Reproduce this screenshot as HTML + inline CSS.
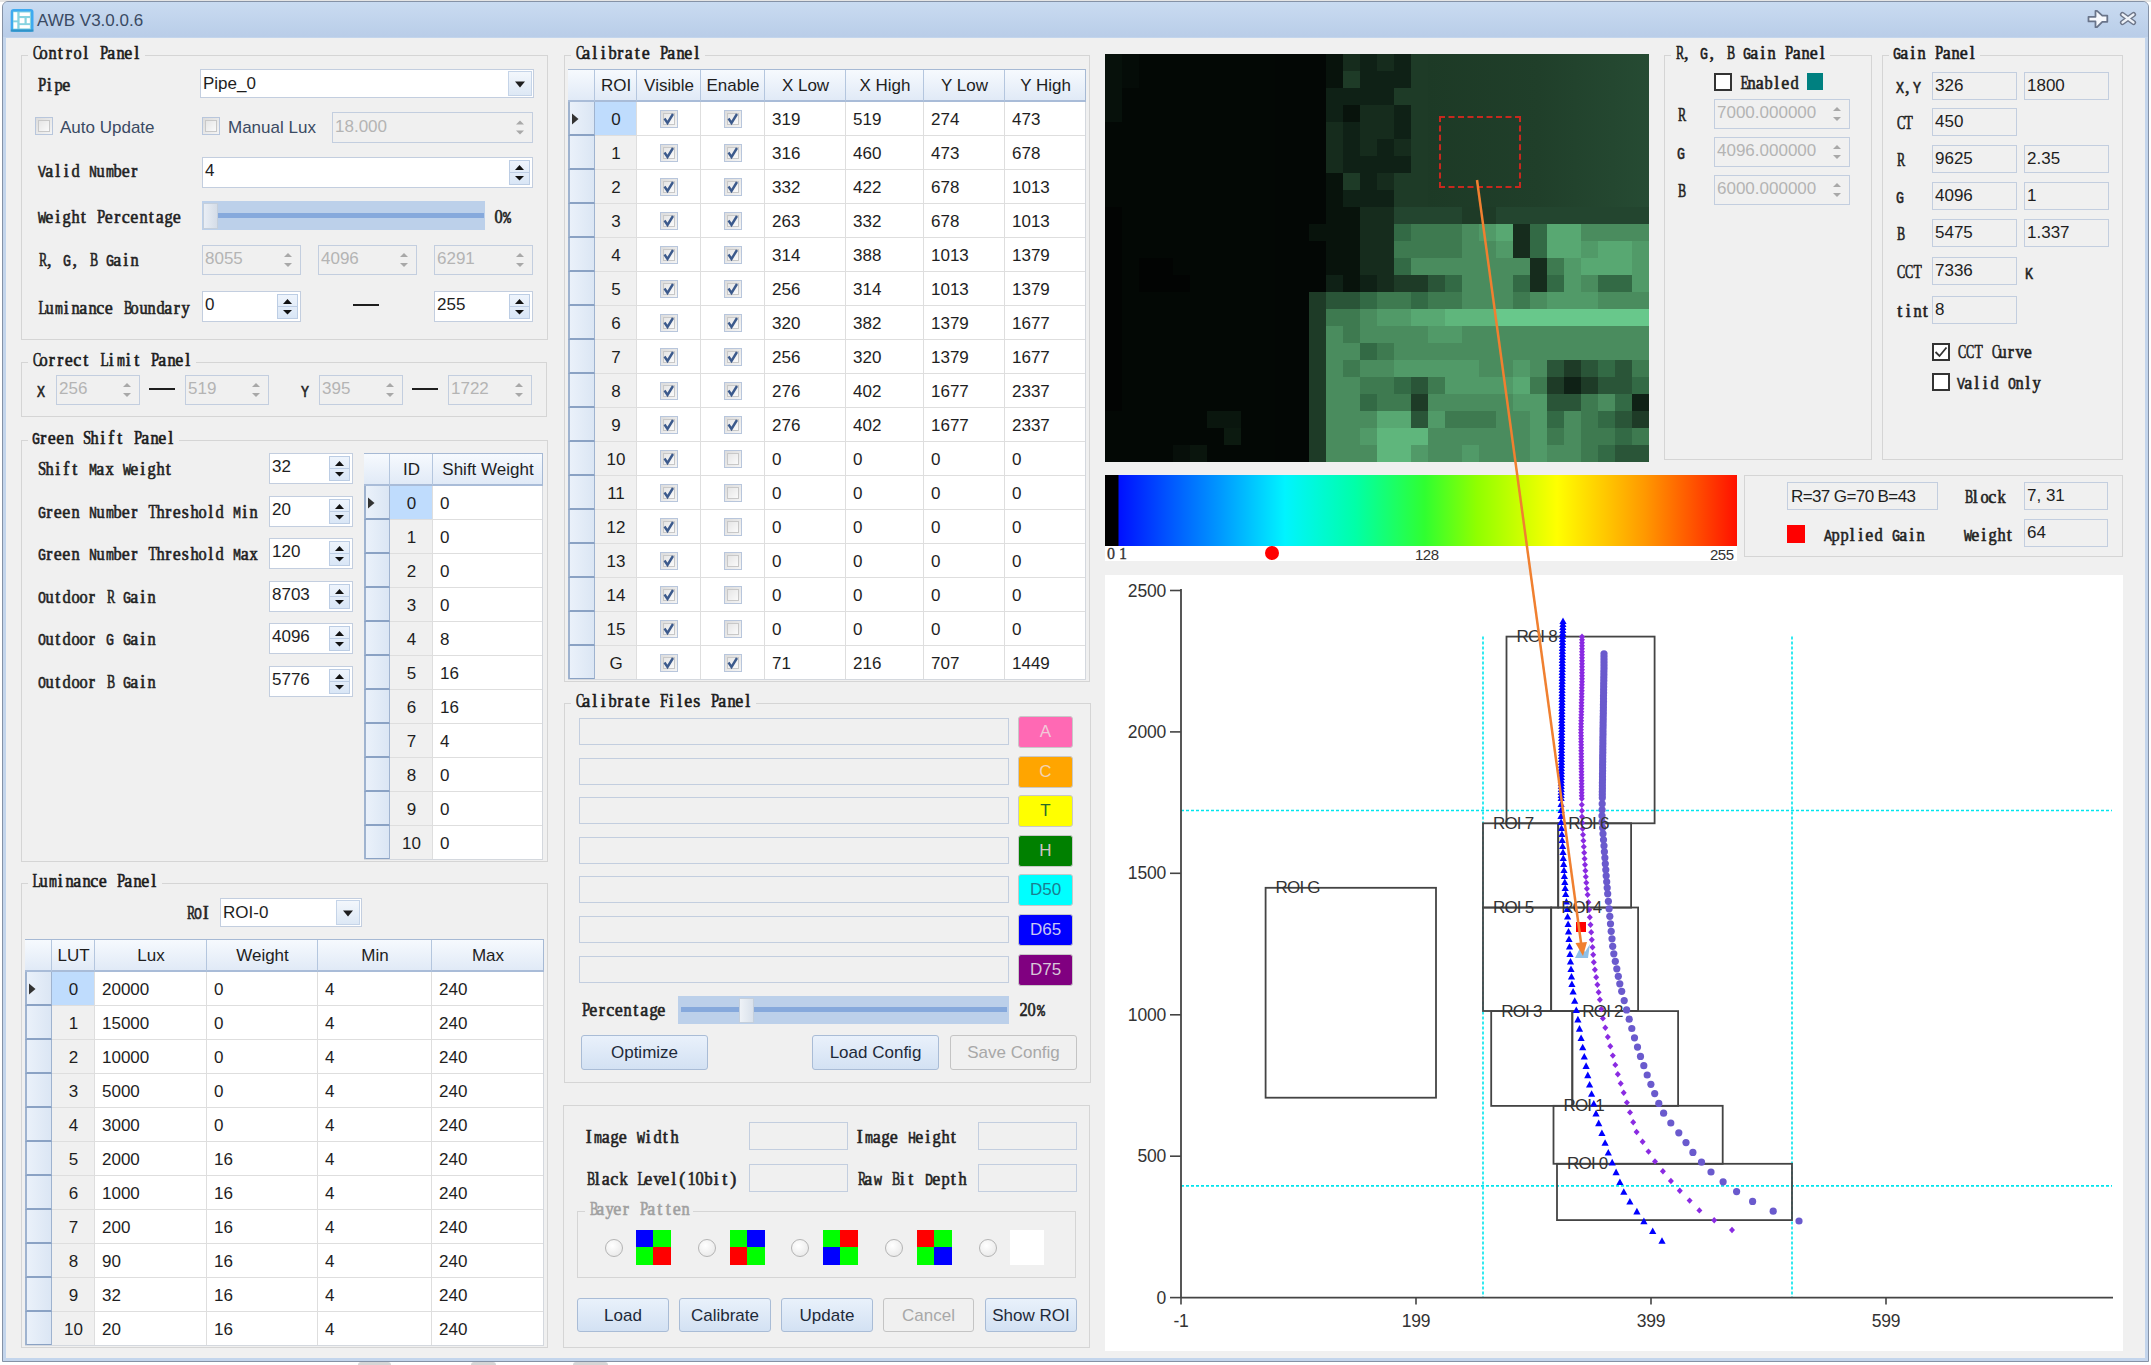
<!DOCTYPE html><html><head><meta charset="utf-8"><title>AWB</title><style>html,body{margin:0;padding:0;width:2151px;height:1365px;overflow:hidden;position:relative;background:#fff;} body>div,body>svg{position:absolute;box-sizing:border-box;} .lb{font-family:'Liberation Serif',serif;font-size:18px;white-space:nowrap;} .c{display:inline-block;width:8.5px;text-align:center;font-style:normal;white-space:pre;} .s{display:inline-block;font-style:normal;}</style></head><body><div style="left:0px;top:0px;width:2151px;height:1365px;background:#ffffff;"></div><div style="left:0px;top:0px;width:2151px;height:2px;background:#e4e4e4;"></div><div style="left:2px;top:1px;width:2147px;height:1361px;background:#c3d5ec;border:1px solid #8592a6;border-radius:6px 6px 0 0;box-sizing:border-box;"></div><div style="left:3px;top:2px;width:2145px;height:35px;background:linear-gradient(#c9dbf1,#b9cde8);border-radius:5px 5px 0 0;"></div><div style="left:6px;top:38px;width:2139px;height:1320px;background:#f0f0f0;"></div><svg style="left:0px;top:0px;overflow:visible" width="1" height="1"><rect x="10.7" y="8.9" width="22.8" height="22.8" rx="3" fill="#3eaaf0"/><rect x="13" y="11.5" width="18" height="18" fill="#86d3e0"/><rect x="13.5" y="12.2" width="3.8" height="8.2" fill="#fff"/><rect x="19.6" y="12.5" width="10.3" height="3.5" fill="#fff"/><rect x="19.6" y="18.1" width="4.9" height="5.1" fill="#fff"/><rect x="26.7" y="18.1" width="3.2" height="5.1" fill="#fff"/><rect x="13.5" y="22.3" width="3.8" height="6.3" fill="#fff"/><rect x="19.6" y="25.1" width="10.3" height="3.3" fill="#fff"/><rect x="10.7" y="29.5" width="22.8" height="2.2" fill="#2f93c8"/></svg><div style="left:37px;top:8.5px;height:23px;line-height:23px;font-family:'Liberation Sans', sans-serif;font-size:17px;font-weight:normal;color:#3a4a63;white-space:nowrap;">AWB V3.0.0.6</div><svg style="left:0px;top:0px;overflow:visible" width="1" height="1"><path d="M2088.5 16.8 L2095.5 16.8 L2095.5 10.8 L2097 10.8 L2102.3 15.6 L2107.3 15.6 L2107.3 21.8 L2102.3 21.8 L2097 27.2 L2095.5 27.2 L2095.5 21.4 L2088.5 21.4 Z" fill="#f6f8fc" stroke="#69748a" stroke-width="1.8" stroke-linejoin="round"/></svg><svg style="left:0px;top:0px;overflow:visible" width="1" height="1"><path d="M2122.5 14.5 L2133.5 22.5 M2133.5 14.5 L2122.5 22.5" stroke="#6d7689" stroke-width="5.2" stroke-linecap="round"/><path d="M2122.5 14.5 L2133.5 22.5 M2133.5 14.5 L2122.5 22.5" stroke="#eef2f8" stroke-width="2.2" stroke-linecap="round"/></svg><div style="left:358px;top:1362px;width:33px;height:3px;background:#d6d6d6;border-radius:3px 3px 0 0;"></div><div style="left:471px;top:1362px;width:25px;height:3px;background:#d6d6d6;border-radius:3px 3px 0 0;"></div><div style="left:573px;top:1362px;width:35px;height:3px;background:#d6d6d6;border-radius:3px 3px 0 0;"></div><div style="left:21px;top:55px;width:527px;height:285px;border:1px solid #d5d5d5;box-sizing:border-box;"></div><div style="left:28px;top:51px;width:116.5px;height:8px;background:#f0f0f0;"></div><div class="lb" style="left:30.5px;top:41.0px;height:24px;line-height:24px;color:#1a1a1a;-webkit-text-stroke:0.6px #1a1a1a;"><i class="c"><i class="s" style="transform:scaleX(0.68)">C</i></i><i class="c"><i class="s" style="transform:scaleX(0.91)">o</i></i><i class="c"><i class="s" style="transform:scaleX(0.91)">n</i></i><i class="c">t</i><i class="c">r</i><i class="c"><i class="s" style="transform:scaleX(0.91)">o</i></i><i class="c">l</i><i class="c"> </i><i class="c"><i class="s" style="transform:scaleX(0.82)">P</i></i><i class="c">a</i><i class="c"><i class="s" style="transform:scaleX(0.91)">n</i></i><i class="c">e</i><i class="c">l</i></div><div class="lb" style="left:36.5px;top:73.0px;height:24px;line-height:24px;color:#222222;-webkit-text-stroke:0.6px #222222;"><i class="c"><i class="s" style="transform:scaleX(0.82)">P</i></i><i class="c">i</i><i class="c"><i class="s" style="transform:scaleX(0.91)">p</i></i><i class="c">e</i></div><div style="left:200px;top:69px;width:334px;height:29px;background:#ffffff;border:1.6px solid #c3cedf;box-sizing:border-box;"></div><div style="left:508px;top:71px;width:24px;height:25px;background:linear-gradient(#f3f7fc,#dde8f5);border:1px solid #c5d4e8;box-sizing:border-box;"></div><svg style="left:508px;top:71px;" width="24" height="25" viewBox="0 0 24 25"><path d="M7.0 10.5 L17.0 10.5 L12.0 16.5 Z" fill="#1e1e1e"/></svg><div style="left:203px;top:71.5px;height:23px;line-height:23px;font-family:'Liberation Sans', sans-serif;font-size:17px;font-weight:normal;color:#1e1e1e;white-space:nowrap;">Pipe_0</div><div style="left:35px;top:117px;width:18px;height:18px;background:linear-gradient(135deg,#dcdcdc,#f4f4f4);border:1px solid #b8c6dc;box-sizing:border-box;"></div><div style="left:38px;top:120px;width:12px;height:12px;border:1px solid #c8c8c8;box-sizing:border-box;background:linear-gradient(135deg,#e6e6e6,#fafafa);"></div><div style="left:60px;top:115.5px;height:23px;line-height:23px;font-family:'Liberation Sans', sans-serif;font-size:17px;font-weight:normal;color:#3a4a63;white-space:nowrap;">Auto Update</div><div style="left:202px;top:117px;width:18px;height:18px;background:linear-gradient(135deg,#dcdcdc,#f4f4f4);border:1px solid #b8c6dc;box-sizing:border-box;"></div><div style="left:205px;top:120px;width:12px;height:12px;border:1px solid #c8c8c8;box-sizing:border-box;background:linear-gradient(135deg,#e6e6e6,#fafafa);"></div><div style="left:228px;top:115.5px;height:23px;line-height:23px;font-family:'Liberation Sans', sans-serif;font-size:17px;font-weight:normal;color:#3a4a63;white-space:nowrap;">Manual Lux</div><div style="left:332px;top:112px;width:201px;height:31px;background:#f0f0f0;border:1.6px solid #c3cedf;box-sizing:border-box;"></div><svg style="left:0px;top:0px;overflow:visible" width="1" height="1"><path d="M516 124.5 L520 120.5 L524 124.5 Z" fill="#a8a8a8"/><path d="M516 130.5 L520 134.5 L524 130.5 Z" fill="#a8a8a8"/></svg><div style="left:335px;top:114.5px;height:23px;line-height:23px;font-family:'Liberation Sans', sans-serif;font-size:17px;font-weight:normal;color:#b4b4b4;white-space:nowrap;">18.000</div><div class="lb" style="left:36.5px;top:159.0px;height:24px;line-height:24px;color:#222222;-webkit-text-stroke:0.6px #222222;"><i class="c"><i class="s" style="transform:scaleX(0.78);font-family:Liberation Mono,monospace;font-size:17px">V</i></i><i class="c">a</i><i class="c">l</i><i class="c">i</i><i class="c"><i class="s" style="transform:scaleX(0.91)">d</i></i><i class="c"> </i><i class="c"><i class="s" style="transform:scaleX(0.78);font-family:Liberation Mono,monospace;font-size:17px">N</i></i><i class="c"><i class="s" style="transform:scaleX(0.91)">u</i></i><i class="c"><i class="s" style="transform:scaleX(0.78);font-family:Liberation Mono,monospace;font-size:17px">m</i></i><i class="c"><i class="s" style="transform:scaleX(0.91)">b</i></i><i class="c">e</i><i class="c">r</i></div><div style="left:202px;top:157px;width:331px;height:31px;background:#ffffff;border:1.6px solid #c3cedf;box-sizing:border-box;"></div><div style="left:509px;top:160px;width:21px;height:25px;background:linear-gradient(#eef4fc,#d9e6f6);border:1px solid #bccde4;box-sizing:border-box;"></div><div style="left:509px;top:171.75px;width:21px;height:1.5px;background:#bccde4;"></div><svg style="left:0px;top:0px;overflow:visible" width="1" height="1"><path d="M515.0 170.0 L519.5 165.0 L524.0 170.0 Z" fill="#111"/><path d="M515.0 176.0 L519.5 180.5 L524.0 176.0 Z" fill="#111"/></svg><div style="left:205px;top:159.0px;height:23px;line-height:23px;font-family:'Liberation Sans', sans-serif;font-size:17px;font-weight:normal;color:#1e1e1e;white-space:nowrap;">4</div><div class="lb" style="left:36.5px;top:205.0px;height:24px;line-height:24px;color:#222222;-webkit-text-stroke:0.6px #222222;"><i class="c"><i class="s" style="transform:scaleX(0.78);font-family:Liberation Mono,monospace;font-size:17px">W</i></i><i class="c">e</i><i class="c">i</i><i class="c"><i class="s" style="transform:scaleX(0.91)">g</i></i><i class="c"><i class="s" style="transform:scaleX(0.91)">h</i></i><i class="c">t</i><i class="c"> </i><i class="c"><i class="s" style="transform:scaleX(0.82)">P</i></i><i class="c">e</i><i class="c">r</i><i class="c">c</i><i class="c">e</i><i class="c"><i class="s" style="transform:scaleX(0.91)">n</i></i><i class="c">t</i><i class="c">a</i><i class="c"><i class="s" style="transform:scaleX(0.91)">g</i></i><i class="c">e</i></div><div style="left:202px;top:201px;width:283px;height:29px;background:#bcd0ea;"></div><div style="left:208px;top:213px;width:276px;height:5px;background:#86a9dc;"></div><div style="left:203px;top:203px;width:15px;height:26px;background:linear-gradient(90deg,#e9eef5,#d5dde8);border:1px solid #c4cfdc;box-sizing:border-box;"></div><div class="lb" style="left:493.5px;top:205.0px;height:24px;line-height:24px;color:#222222;-webkit-text-stroke:0.6px #222222;"><i class="c"><i class="s" style="transform:scaleX(0.91)">0</i></i><i class="c"><i class="s" style="transform:scaleX(0.78);font-family:Liberation Mono,monospace;font-size:17px">%</i></i></div><div class="lb" style="left:36.5px;top:248.0px;height:24px;line-height:24px;color:#222222;-webkit-text-stroke:0.6px #222222;"><i class="c"><i class="s" style="transform:scaleX(0.68)">R</i></i><i class="c">,</i><i class="c"> </i><i class="c"><i class="s" style="transform:scaleX(0.78);font-family:Liberation Mono,monospace;font-size:17px">G</i></i><i class="c">,</i><i class="c"> </i><i class="c"><i class="s" style="transform:scaleX(0.68)">B</i></i><i class="c"> </i><i class="c"><i class="s" style="transform:scaleX(0.78);font-family:Liberation Mono,monospace;font-size:17px">G</i></i><i class="c">a</i><i class="c">i</i><i class="c"><i class="s" style="transform:scaleX(0.91)">n</i></i></div><div style="left:202px;top:245px;width:99px;height:30px;background:#f0f0f0;border:1.6px solid #c3cedf;box-sizing:border-box;"></div><svg style="left:0px;top:0px;overflow:visible" width="1" height="1"><path d="M284 257.0 L288 253.0 L292 257.0 Z" fill="#a8a8a8"/><path d="M284 263.0 L288 267.0 L292 263.0 Z" fill="#a8a8a8"/></svg><div style="left:205px;top:247.0px;height:23px;line-height:23px;font-family:'Liberation Sans', sans-serif;font-size:17px;font-weight:normal;color:#b4b4b4;white-space:nowrap;">8055</div><div style="left:318px;top:245px;width:99px;height:30px;background:#f0f0f0;border:1.6px solid #c3cedf;box-sizing:border-box;"></div><svg style="left:0px;top:0px;overflow:visible" width="1" height="1"><path d="M400 257.0 L404 253.0 L408 257.0 Z" fill="#a8a8a8"/><path d="M400 263.0 L404 267.0 L408 263.0 Z" fill="#a8a8a8"/></svg><div style="left:321px;top:247.0px;height:23px;line-height:23px;font-family:'Liberation Sans', sans-serif;font-size:17px;font-weight:normal;color:#b4b4b4;white-space:nowrap;">4096</div><div style="left:434px;top:245px;width:99px;height:30px;background:#f0f0f0;border:1.6px solid #c3cedf;box-sizing:border-box;"></div><svg style="left:0px;top:0px;overflow:visible" width="1" height="1"><path d="M516 257.0 L520 253.0 L524 257.0 Z" fill="#a8a8a8"/><path d="M516 263.0 L520 267.0 L524 263.0 Z" fill="#a8a8a8"/></svg><div style="left:437px;top:247.0px;height:23px;line-height:23px;font-family:'Liberation Sans', sans-serif;font-size:17px;font-weight:normal;color:#b4b4b4;white-space:nowrap;">6291</div><div class="lb" style="left:36.5px;top:296.0px;height:24px;line-height:24px;color:#222222;-webkit-text-stroke:0.6px #222222;"><i class="c"><i class="s" style="transform:scaleX(0.75)">L</i></i><i class="c"><i class="s" style="transform:scaleX(0.91)">u</i></i><i class="c"><i class="s" style="transform:scaleX(0.78);font-family:Liberation Mono,monospace;font-size:17px">m</i></i><i class="c">i</i><i class="c"><i class="s" style="transform:scaleX(0.91)">n</i></i><i class="c">a</i><i class="c"><i class="s" style="transform:scaleX(0.91)">n</i></i><i class="c">c</i><i class="c">e</i><i class="c"> </i><i class="c"><i class="s" style="transform:scaleX(0.68)">B</i></i><i class="c"><i class="s" style="transform:scaleX(0.91)">o</i></i><i class="c"><i class="s" style="transform:scaleX(0.91)">u</i></i><i class="c"><i class="s" style="transform:scaleX(0.91)">n</i></i><i class="c"><i class="s" style="transform:scaleX(0.91)">d</i></i><i class="c">a</i><i class="c">r</i><i class="c"><i class="s" style="transform:scaleX(0.91)">y</i></i></div><div style="left:202px;top:291px;width:99px;height:31px;background:#ffffff;border:1.6px solid #c3cedf;box-sizing:border-box;"></div><div style="left:277px;top:294px;width:21px;height:25px;background:linear-gradient(#eef4fc,#d9e6f6);border:1px solid #bccde4;box-sizing:border-box;"></div><div style="left:277px;top:305.75px;width:21px;height:1.5px;background:#bccde4;"></div><svg style="left:0px;top:0px;overflow:visible" width="1" height="1"><path d="M283.0 304.0 L287.5 299.0 L292.0 304.0 Z" fill="#111"/><path d="M283.0 310.0 L287.5 314.5 L292.0 310.0 Z" fill="#111"/></svg><div style="left:205px;top:293.0px;height:23px;line-height:23px;font-family:'Liberation Sans', sans-serif;font-size:17px;font-weight:normal;color:#1e1e1e;white-space:nowrap;">0</div><div style="left:353px;top:304px;width:26px;height:2px;background:#1e1e1e;"></div><div style="left:434px;top:291px;width:99px;height:31px;background:#ffffff;border:1.6px solid #c3cedf;box-sizing:border-box;"></div><div style="left:509px;top:294px;width:21px;height:25px;background:linear-gradient(#eef4fc,#d9e6f6);border:1px solid #bccde4;box-sizing:border-box;"></div><div style="left:509px;top:305.75px;width:21px;height:1.5px;background:#bccde4;"></div><svg style="left:0px;top:0px;overflow:visible" width="1" height="1"><path d="M515.0 304.0 L519.5 299.0 L524.0 304.0 Z" fill="#111"/><path d="M515.0 310.0 L519.5 314.5 L524.0 310.0 Z" fill="#111"/></svg><div style="left:437px;top:293.0px;height:23px;line-height:23px;font-family:'Liberation Sans', sans-serif;font-size:17px;font-weight:normal;color:#1e1e1e;white-space:nowrap;">255</div><div style="left:21px;top:362px;width:526px;height:55px;border:1px solid #d5d5d5;box-sizing:border-box;"></div><div style="left:28px;top:358px;width:167.5px;height:8px;background:#f0f0f0;"></div><div class="lb" style="left:30.5px;top:348.0px;height:24px;line-height:24px;color:#1a1a1a;-webkit-text-stroke:0.6px #1a1a1a;"><i class="c"><i class="s" style="transform:scaleX(0.68)">C</i></i><i class="c"><i class="s" style="transform:scaleX(0.91)">o</i></i><i class="c">r</i><i class="c">r</i><i class="c">e</i><i class="c">c</i><i class="c">t</i><i class="c"> </i><i class="c"><i class="s" style="transform:scaleX(0.75)">L</i></i><i class="c">i</i><i class="c"><i class="s" style="transform:scaleX(0.78);font-family:Liberation Mono,monospace;font-size:17px">m</i></i><i class="c">i</i><i class="c">t</i><i class="c"> </i><i class="c"><i class="s" style="transform:scaleX(0.82)">P</i></i><i class="c">a</i><i class="c"><i class="s" style="transform:scaleX(0.91)">n</i></i><i class="c">e</i><i class="c">l</i></div><div class="lb" style="left:35.5px;top:379.0px;height:24px;line-height:24px;color:#222222;-webkit-text-stroke:0.6px #222222;"><i class="c"><i class="s" style="transform:scaleX(0.78);font-family:Liberation Mono,monospace;font-size:17px">X</i></i></div><div style="left:56px;top:375px;width:84px;height:30px;background:#f0f0f0;border:1.6px solid #c3cedf;box-sizing:border-box;"></div><svg style="left:0px;top:0px;overflow:visible" width="1" height="1"><path d="M123 387.0 L127 383.0 L131 387.0 Z" fill="#a8a8a8"/><path d="M123 393.0 L127 397.0 L131 393.0 Z" fill="#a8a8a8"/></svg><div style="left:59px;top:377.0px;height:23px;line-height:23px;font-family:'Liberation Sans', sans-serif;font-size:17px;font-weight:normal;color:#b4b4b4;white-space:nowrap;">256</div><div style="left:149px;top:388px;width:26px;height:2px;background:#1e1e1e;"></div><div style="left:185px;top:375px;width:84px;height:30px;background:#f0f0f0;border:1.6px solid #c3cedf;box-sizing:border-box;"></div><svg style="left:0px;top:0px;overflow:visible" width="1" height="1"><path d="M252 387.0 L256 383.0 L260 387.0 Z" fill="#a8a8a8"/><path d="M252 393.0 L256 397.0 L260 393.0 Z" fill="#a8a8a8"/></svg><div style="left:188px;top:377.0px;height:23px;line-height:23px;font-family:'Liberation Sans', sans-serif;font-size:17px;font-weight:normal;color:#b4b4b4;white-space:nowrap;">519</div><div class="lb" style="left:299.5px;top:379.0px;height:24px;line-height:24px;color:#222222;-webkit-text-stroke:0.6px #222222;"><i class="c"><i class="s" style="transform:scaleX(0.78);font-family:Liberation Mono,monospace;font-size:17px">Y</i></i></div><div style="left:319px;top:375px;width:84px;height:30px;background:#f0f0f0;border:1.6px solid #c3cedf;box-sizing:border-box;"></div><svg style="left:0px;top:0px;overflow:visible" width="1" height="1"><path d="M386 387.0 L390 383.0 L394 387.0 Z" fill="#a8a8a8"/><path d="M386 393.0 L390 397.0 L394 393.0 Z" fill="#a8a8a8"/></svg><div style="left:322px;top:377.0px;height:23px;line-height:23px;font-family:'Liberation Sans', sans-serif;font-size:17px;font-weight:normal;color:#b4b4b4;white-space:nowrap;">395</div><div style="left:412px;top:388px;width:26px;height:2px;background:#1e1e1e;"></div><div style="left:448px;top:375px;width:84px;height:30px;background:#f0f0f0;border:1.6px solid #c3cedf;box-sizing:border-box;"></div><svg style="left:0px;top:0px;overflow:visible" width="1" height="1"><path d="M515 387.0 L519 383.0 L523 387.0 Z" fill="#a8a8a8"/><path d="M515 393.0 L519 397.0 L523 393.0 Z" fill="#a8a8a8"/></svg><div style="left:451px;top:377.0px;height:23px;line-height:23px;font-family:'Liberation Sans', sans-serif;font-size:17px;font-weight:normal;color:#b4b4b4;white-space:nowrap;">1722</div><div style="left:21px;top:440px;width:527px;height:422px;border:1px solid #d5d5d5;box-sizing:border-box;"></div><div style="left:28px;top:436px;width:150.5px;height:8px;background:#f0f0f0;"></div><div class="lb" style="left:30.5px;top:426.0px;height:24px;line-height:24px;color:#1a1a1a;-webkit-text-stroke:0.6px #1a1a1a;"><i class="c"><i class="s" style="transform:scaleX(0.78);font-family:Liberation Mono,monospace;font-size:17px">G</i></i><i class="c">r</i><i class="c">e</i><i class="c">e</i><i class="c"><i class="s" style="transform:scaleX(0.91)">n</i></i><i class="c"> </i><i class="c"><i class="s" style="transform:scaleX(0.82)">S</i></i><i class="c"><i class="s" style="transform:scaleX(0.91)">h</i></i><i class="c">i</i><i class="c">f</i><i class="c">t</i><i class="c"> </i><i class="c"><i class="s" style="transform:scaleX(0.82)">P</i></i><i class="c">a</i><i class="c"><i class="s" style="transform:scaleX(0.91)">n</i></i><i class="c">e</i><i class="c">l</i></div><div class="lb" style="left:36.5px;top:457.0px;height:24px;line-height:24px;color:#222222;-webkit-text-stroke:0.6px #222222;"><i class="c"><i class="s" style="transform:scaleX(0.82)">S</i></i><i class="c"><i class="s" style="transform:scaleX(0.91)">h</i></i><i class="c">i</i><i class="c">f</i><i class="c">t</i><i class="c"> </i><i class="c"><i class="s" style="transform:scaleX(0.78);font-family:Liberation Mono,monospace;font-size:17px">M</i></i><i class="c">a</i><i class="c"><i class="s" style="transform:scaleX(0.91)">x</i></i><i class="c"> </i><i class="c"><i class="s" style="transform:scaleX(0.78);font-family:Liberation Mono,monospace;font-size:17px">W</i></i><i class="c">e</i><i class="c">i</i><i class="c"><i class="s" style="transform:scaleX(0.91)">g</i></i><i class="c"><i class="s" style="transform:scaleX(0.91)">h</i></i><i class="c">t</i></div><div style="left:269px;top:453px;width:84px;height:31px;background:#ffffff;border:1.6px solid #c3cedf;box-sizing:border-box;"></div><div style="left:329px;top:456px;width:21px;height:25px;background:linear-gradient(#eef4fc,#d9e6f6);border:1px solid #bccde4;box-sizing:border-box;"></div><div style="left:329px;top:467.75px;width:21px;height:1.5px;background:#bccde4;"></div><svg style="left:0px;top:0px;overflow:visible" width="1" height="1"><path d="M335.0 466.0 L339.5 461.0 L344.0 466.0 Z" fill="#111"/><path d="M335.0 472.0 L339.5 476.5 L344.0 472.0 Z" fill="#111"/></svg><div style="left:272px;top:455.0px;height:23px;line-height:23px;font-family:'Liberation Sans', sans-serif;font-size:17px;font-weight:normal;color:#1e1e1e;white-space:nowrap;">32</div><div class="lb" style="left:36.5px;top:499.6px;height:24px;line-height:24px;color:#222222;-webkit-text-stroke:0.6px #222222;"><i class="c"><i class="s" style="transform:scaleX(0.78);font-family:Liberation Mono,monospace;font-size:17px">G</i></i><i class="c">r</i><i class="c">e</i><i class="c">e</i><i class="c"><i class="s" style="transform:scaleX(0.91)">n</i></i><i class="c"> </i><i class="c"><i class="s" style="transform:scaleX(0.78);font-family:Liberation Mono,monospace;font-size:17px">N</i></i><i class="c"><i class="s" style="transform:scaleX(0.91)">u</i></i><i class="c"><i class="s" style="transform:scaleX(0.78);font-family:Liberation Mono,monospace;font-size:17px">m</i></i><i class="c"><i class="s" style="transform:scaleX(0.91)">b</i></i><i class="c">e</i><i class="c">r</i><i class="c"> </i><i class="c"><i class="s" style="transform:scaleX(0.75)">T</i></i><i class="c"><i class="s" style="transform:scaleX(0.91)">h</i></i><i class="c">r</i><i class="c">e</i><i class="c">s</i><i class="c"><i class="s" style="transform:scaleX(0.91)">h</i></i><i class="c"><i class="s" style="transform:scaleX(0.91)">o</i></i><i class="c">l</i><i class="c"><i class="s" style="transform:scaleX(0.91)">d</i></i><i class="c"> </i><i class="c"><i class="s" style="transform:scaleX(0.78);font-family:Liberation Mono,monospace;font-size:17px">M</i></i><i class="c">i</i><i class="c"><i class="s" style="transform:scaleX(0.91)">n</i></i></div><div style="left:269px;top:496px;width:84px;height:31px;background:#ffffff;border:1.6px solid #c3cedf;box-sizing:border-box;"></div><div style="left:329px;top:499px;width:21px;height:25px;background:linear-gradient(#eef4fc,#d9e6f6);border:1px solid #bccde4;box-sizing:border-box;"></div><div style="left:329px;top:510.75px;width:21px;height:1.5px;background:#bccde4;"></div><svg style="left:0px;top:0px;overflow:visible" width="1" height="1"><path d="M335.0 509.0 L339.5 504.0 L344.0 509.0 Z" fill="#111"/><path d="M335.0 515.0 L339.5 519.5 L344.0 515.0 Z" fill="#111"/></svg><div style="left:272px;top:498.0px;height:23px;line-height:23px;font-family:'Liberation Sans', sans-serif;font-size:17px;font-weight:normal;color:#1e1e1e;white-space:nowrap;">20</div><div class="lb" style="left:36.5px;top:542.2px;height:24px;line-height:24px;color:#222222;-webkit-text-stroke:0.6px #222222;"><i class="c"><i class="s" style="transform:scaleX(0.78);font-family:Liberation Mono,monospace;font-size:17px">G</i></i><i class="c">r</i><i class="c">e</i><i class="c">e</i><i class="c"><i class="s" style="transform:scaleX(0.91)">n</i></i><i class="c"> </i><i class="c"><i class="s" style="transform:scaleX(0.78);font-family:Liberation Mono,monospace;font-size:17px">N</i></i><i class="c"><i class="s" style="transform:scaleX(0.91)">u</i></i><i class="c"><i class="s" style="transform:scaleX(0.78);font-family:Liberation Mono,monospace;font-size:17px">m</i></i><i class="c"><i class="s" style="transform:scaleX(0.91)">b</i></i><i class="c">e</i><i class="c">r</i><i class="c"> </i><i class="c"><i class="s" style="transform:scaleX(0.75)">T</i></i><i class="c"><i class="s" style="transform:scaleX(0.91)">h</i></i><i class="c">r</i><i class="c">e</i><i class="c">s</i><i class="c"><i class="s" style="transform:scaleX(0.91)">h</i></i><i class="c"><i class="s" style="transform:scaleX(0.91)">o</i></i><i class="c">l</i><i class="c"><i class="s" style="transform:scaleX(0.91)">d</i></i><i class="c"> </i><i class="c"><i class="s" style="transform:scaleX(0.78);font-family:Liberation Mono,monospace;font-size:17px">M</i></i><i class="c">a</i><i class="c"><i class="s" style="transform:scaleX(0.91)">x</i></i></div><div style="left:269px;top:538px;width:84px;height:31px;background:#ffffff;border:1.6px solid #c3cedf;box-sizing:border-box;"></div><div style="left:329px;top:541px;width:21px;height:25px;background:linear-gradient(#eef4fc,#d9e6f6);border:1px solid #bccde4;box-sizing:border-box;"></div><div style="left:329px;top:552.75px;width:21px;height:1.5px;background:#bccde4;"></div><svg style="left:0px;top:0px;overflow:visible" width="1" height="1"><path d="M335.0 551.0 L339.5 546.0 L344.0 551.0 Z" fill="#111"/><path d="M335.0 557.0 L339.5 561.5 L344.0 557.0 Z" fill="#111"/></svg><div style="left:272px;top:540.0px;height:23px;line-height:23px;font-family:'Liberation Sans', sans-serif;font-size:17px;font-weight:normal;color:#1e1e1e;white-space:nowrap;">120</div><div class="lb" style="left:36.5px;top:584.8px;height:24px;line-height:24px;color:#222222;-webkit-text-stroke:0.6px #222222;"><i class="c"><i class="s" style="transform:scaleX(0.78);font-family:Liberation Mono,monospace;font-size:17px">O</i></i><i class="c"><i class="s" style="transform:scaleX(0.91)">u</i></i><i class="c">t</i><i class="c"><i class="s" style="transform:scaleX(0.91)">d</i></i><i class="c"><i class="s" style="transform:scaleX(0.91)">o</i></i><i class="c"><i class="s" style="transform:scaleX(0.91)">o</i></i><i class="c">r</i><i class="c"> </i><i class="c"><i class="s" style="transform:scaleX(0.68)">R</i></i><i class="c"> </i><i class="c"><i class="s" style="transform:scaleX(0.78);font-family:Liberation Mono,monospace;font-size:17px">G</i></i><i class="c">a</i><i class="c">i</i><i class="c"><i class="s" style="transform:scaleX(0.91)">n</i></i></div><div style="left:269px;top:581px;width:84px;height:31px;background:#ffffff;border:1.6px solid #c3cedf;box-sizing:border-box;"></div><div style="left:329px;top:584px;width:21px;height:25px;background:linear-gradient(#eef4fc,#d9e6f6);border:1px solid #bccde4;box-sizing:border-box;"></div><div style="left:329px;top:595.75px;width:21px;height:1.5px;background:#bccde4;"></div><svg style="left:0px;top:0px;overflow:visible" width="1" height="1"><path d="M335.0 594.0 L339.5 589.0 L344.0 594.0 Z" fill="#111"/><path d="M335.0 600.0 L339.5 604.5 L344.0 600.0 Z" fill="#111"/></svg><div style="left:272px;top:583.0px;height:23px;line-height:23px;font-family:'Liberation Sans', sans-serif;font-size:17px;font-weight:normal;color:#1e1e1e;white-space:nowrap;">8703</div><div class="lb" style="left:36.5px;top:627.4px;height:24px;line-height:24px;color:#222222;-webkit-text-stroke:0.6px #222222;"><i class="c"><i class="s" style="transform:scaleX(0.78);font-family:Liberation Mono,monospace;font-size:17px">O</i></i><i class="c"><i class="s" style="transform:scaleX(0.91)">u</i></i><i class="c">t</i><i class="c"><i class="s" style="transform:scaleX(0.91)">d</i></i><i class="c"><i class="s" style="transform:scaleX(0.91)">o</i></i><i class="c"><i class="s" style="transform:scaleX(0.91)">o</i></i><i class="c">r</i><i class="c"> </i><i class="c"><i class="s" style="transform:scaleX(0.78);font-family:Liberation Mono,monospace;font-size:17px">G</i></i><i class="c"> </i><i class="c"><i class="s" style="transform:scaleX(0.78);font-family:Liberation Mono,monospace;font-size:17px">G</i></i><i class="c">a</i><i class="c">i</i><i class="c"><i class="s" style="transform:scaleX(0.91)">n</i></i></div><div style="left:269px;top:623px;width:84px;height:31px;background:#ffffff;border:1.6px solid #c3cedf;box-sizing:border-box;"></div><div style="left:329px;top:626px;width:21px;height:25px;background:linear-gradient(#eef4fc,#d9e6f6);border:1px solid #bccde4;box-sizing:border-box;"></div><div style="left:329px;top:637.75px;width:21px;height:1.5px;background:#bccde4;"></div><svg style="left:0px;top:0px;overflow:visible" width="1" height="1"><path d="M335.0 636.0 L339.5 631.0 L344.0 636.0 Z" fill="#111"/><path d="M335.0 642.0 L339.5 646.5 L344.0 642.0 Z" fill="#111"/></svg><div style="left:272px;top:625.0px;height:23px;line-height:23px;font-family:'Liberation Sans', sans-serif;font-size:17px;font-weight:normal;color:#1e1e1e;white-space:nowrap;">4096</div><div class="lb" style="left:36.5px;top:670.0px;height:24px;line-height:24px;color:#222222;-webkit-text-stroke:0.6px #222222;"><i class="c"><i class="s" style="transform:scaleX(0.78);font-family:Liberation Mono,monospace;font-size:17px">O</i></i><i class="c"><i class="s" style="transform:scaleX(0.91)">u</i></i><i class="c">t</i><i class="c"><i class="s" style="transform:scaleX(0.91)">d</i></i><i class="c"><i class="s" style="transform:scaleX(0.91)">o</i></i><i class="c"><i class="s" style="transform:scaleX(0.91)">o</i></i><i class="c">r</i><i class="c"> </i><i class="c"><i class="s" style="transform:scaleX(0.68)">B</i></i><i class="c"> </i><i class="c"><i class="s" style="transform:scaleX(0.78);font-family:Liberation Mono,monospace;font-size:17px">G</i></i><i class="c">a</i><i class="c">i</i><i class="c"><i class="s" style="transform:scaleX(0.91)">n</i></i></div><div style="left:269px;top:666px;width:84px;height:31px;background:#ffffff;border:1.6px solid #c3cedf;box-sizing:border-box;"></div><div style="left:329px;top:669px;width:21px;height:25px;background:linear-gradient(#eef4fc,#d9e6f6);border:1px solid #bccde4;box-sizing:border-box;"></div><div style="left:329px;top:680.75px;width:21px;height:1.5px;background:#bccde4;"></div><svg style="left:0px;top:0px;overflow:visible" width="1" height="1"><path d="M335.0 679.0 L339.5 674.0 L344.0 679.0 Z" fill="#111"/><path d="M335.0 685.0 L339.5 689.5 L344.0 685.0 Z" fill="#111"/></svg><div style="left:272px;top:668.0px;height:23px;line-height:23px;font-family:'Liberation Sans', sans-serif;font-size:17px;font-weight:normal;color:#1e1e1e;white-space:nowrap;">5776</div><div style="left:364px;top:453px;width:179px;height:407px;background:#ffffff;"></div><div style="left:364px;top:453px;width:179px;height:33px;background:linear-gradient(#f7fafe,#dfe9f6);"></div><div style="left:364px;top:453px;width:26px;height:33px;border-right:1.5px solid #b4c6de;border-bottom:2px solid #a9bcd8;box-sizing:border-box;"></div><div style="left:390px;top:453px;width:43px;height:33px;border-right:1.5px solid #b4c6de;border-bottom:2px solid #a9bcd8;box-sizing:border-box;"></div><div style="left:390px;top:458.0px;width:43px;text-align:center;height:23px;line-height:23px;font-family:'Liberation Sans', sans-serif;font-size:17px;font-weight:normal;color:#1e1e1e;white-space:nowrap;">ID</div><div style="left:433px;top:453px;width:110px;height:33px;border-right:1.5px solid #b4c6de;border-bottom:2px solid #a9bcd8;box-sizing:border-box;"></div><div style="left:433px;top:458.0px;width:110px;text-align:center;height:23px;line-height:23px;font-family:'Liberation Sans', sans-serif;font-size:17px;font-weight:normal;color:#1e1e1e;white-space:nowrap;">Shift Weight</div><div style="left:364px;top:486px;width:26px;height:34px;background:linear-gradient(90deg,#eaf1fa,#dbe6f4);border-left:2px solid #9fb3cf;border-right:1.5px solid #9fb3cf;border-bottom:2px solid #8aa2c4;box-sizing:border-box;"></div><svg style="left:367px;top:497.0px;" width="10" height="12" viewBox="0 0 10 12"><path d="M1 0.5 L7.5 6 L1 11.5 Z" fill="#333"/></svg><div style="left:390px;top:486px;width:43px;height:34px;background:#bfdcfd;"></div><div style="left:390px;top:486px;width:43px;height:34px;border-right:1.5px solid #dedede;border-bottom:1.5px solid #dedede;box-sizing:border-box;"></div><div style="left:390px;top:491.5px;width:43px;text-align:center;height:23px;line-height:23px;font-family:'Liberation Sans', sans-serif;font-size:17px;font-weight:normal;color:#1e1e1e;white-space:nowrap;">0</div><div style="left:433px;top:486px;width:110px;height:34px;border-right:1.5px solid #dedede;border-bottom:1.5px solid #dedede;box-sizing:border-box;"></div><div style="left:440px;top:491.5px;height:23px;line-height:23px;font-family:'Liberation Sans', sans-serif;font-size:17px;font-weight:normal;color:#1e1e1e;white-space:nowrap;">0</div><div style="left:364px;top:520px;width:26px;height:34px;background:linear-gradient(90deg,#eaf1fa,#dbe6f4);border-left:2px solid #9fb3cf;border-right:1.5px solid #9fb3cf;border-bottom:2px solid #8aa2c4;box-sizing:border-box;"></div><div style="left:390px;top:520px;width:43px;height:34px;background:#f0f0f0;"></div><div style="left:390px;top:520px;width:43px;height:34px;border-right:1.5px solid #dedede;border-bottom:1.5px solid #dedede;box-sizing:border-box;"></div><div style="left:390px;top:525.5px;width:43px;text-align:center;height:23px;line-height:23px;font-family:'Liberation Sans', sans-serif;font-size:17px;font-weight:normal;color:#1e1e1e;white-space:nowrap;">1</div><div style="left:433px;top:520px;width:110px;height:34px;border-right:1.5px solid #dedede;border-bottom:1.5px solid #dedede;box-sizing:border-box;"></div><div style="left:440px;top:525.5px;height:23px;line-height:23px;font-family:'Liberation Sans', sans-serif;font-size:17px;font-weight:normal;color:#1e1e1e;white-space:nowrap;">0</div><div style="left:364px;top:554px;width:26px;height:34px;background:linear-gradient(90deg,#eaf1fa,#dbe6f4);border-left:2px solid #9fb3cf;border-right:1.5px solid #9fb3cf;border-bottom:2px solid #8aa2c4;box-sizing:border-box;"></div><div style="left:390px;top:554px;width:43px;height:34px;background:#f0f0f0;"></div><div style="left:390px;top:554px;width:43px;height:34px;border-right:1.5px solid #dedede;border-bottom:1.5px solid #dedede;box-sizing:border-box;"></div><div style="left:390px;top:559.5px;width:43px;text-align:center;height:23px;line-height:23px;font-family:'Liberation Sans', sans-serif;font-size:17px;font-weight:normal;color:#1e1e1e;white-space:nowrap;">2</div><div style="left:433px;top:554px;width:110px;height:34px;border-right:1.5px solid #dedede;border-bottom:1.5px solid #dedede;box-sizing:border-box;"></div><div style="left:440px;top:559.5px;height:23px;line-height:23px;font-family:'Liberation Sans', sans-serif;font-size:17px;font-weight:normal;color:#1e1e1e;white-space:nowrap;">0</div><div style="left:364px;top:588px;width:26px;height:34px;background:linear-gradient(90deg,#eaf1fa,#dbe6f4);border-left:2px solid #9fb3cf;border-right:1.5px solid #9fb3cf;border-bottom:2px solid #8aa2c4;box-sizing:border-box;"></div><div style="left:390px;top:588px;width:43px;height:34px;background:#f0f0f0;"></div><div style="left:390px;top:588px;width:43px;height:34px;border-right:1.5px solid #dedede;border-bottom:1.5px solid #dedede;box-sizing:border-box;"></div><div style="left:390px;top:593.5px;width:43px;text-align:center;height:23px;line-height:23px;font-family:'Liberation Sans', sans-serif;font-size:17px;font-weight:normal;color:#1e1e1e;white-space:nowrap;">3</div><div style="left:433px;top:588px;width:110px;height:34px;border-right:1.5px solid #dedede;border-bottom:1.5px solid #dedede;box-sizing:border-box;"></div><div style="left:440px;top:593.5px;height:23px;line-height:23px;font-family:'Liberation Sans', sans-serif;font-size:17px;font-weight:normal;color:#1e1e1e;white-space:nowrap;">0</div><div style="left:364px;top:622px;width:26px;height:34px;background:linear-gradient(90deg,#eaf1fa,#dbe6f4);border-left:2px solid #9fb3cf;border-right:1.5px solid #9fb3cf;border-bottom:2px solid #8aa2c4;box-sizing:border-box;"></div><div style="left:390px;top:622px;width:43px;height:34px;background:#f0f0f0;"></div><div style="left:390px;top:622px;width:43px;height:34px;border-right:1.5px solid #dedede;border-bottom:1.5px solid #dedede;box-sizing:border-box;"></div><div style="left:390px;top:627.5px;width:43px;text-align:center;height:23px;line-height:23px;font-family:'Liberation Sans', sans-serif;font-size:17px;font-weight:normal;color:#1e1e1e;white-space:nowrap;">4</div><div style="left:433px;top:622px;width:110px;height:34px;border-right:1.5px solid #dedede;border-bottom:1.5px solid #dedede;box-sizing:border-box;"></div><div style="left:440px;top:627.5px;height:23px;line-height:23px;font-family:'Liberation Sans', sans-serif;font-size:17px;font-weight:normal;color:#1e1e1e;white-space:nowrap;">8</div><div style="left:364px;top:656px;width:26px;height:34px;background:linear-gradient(90deg,#eaf1fa,#dbe6f4);border-left:2px solid #9fb3cf;border-right:1.5px solid #9fb3cf;border-bottom:2px solid #8aa2c4;box-sizing:border-box;"></div><div style="left:390px;top:656px;width:43px;height:34px;background:#f0f0f0;"></div><div style="left:390px;top:656px;width:43px;height:34px;border-right:1.5px solid #dedede;border-bottom:1.5px solid #dedede;box-sizing:border-box;"></div><div style="left:390px;top:661.5px;width:43px;text-align:center;height:23px;line-height:23px;font-family:'Liberation Sans', sans-serif;font-size:17px;font-weight:normal;color:#1e1e1e;white-space:nowrap;">5</div><div style="left:433px;top:656px;width:110px;height:34px;border-right:1.5px solid #dedede;border-bottom:1.5px solid #dedede;box-sizing:border-box;"></div><div style="left:440px;top:661.5px;height:23px;line-height:23px;font-family:'Liberation Sans', sans-serif;font-size:17px;font-weight:normal;color:#1e1e1e;white-space:nowrap;">16</div><div style="left:364px;top:690px;width:26px;height:34px;background:linear-gradient(90deg,#eaf1fa,#dbe6f4);border-left:2px solid #9fb3cf;border-right:1.5px solid #9fb3cf;border-bottom:2px solid #8aa2c4;box-sizing:border-box;"></div><div style="left:390px;top:690px;width:43px;height:34px;background:#f0f0f0;"></div><div style="left:390px;top:690px;width:43px;height:34px;border-right:1.5px solid #dedede;border-bottom:1.5px solid #dedede;box-sizing:border-box;"></div><div style="left:390px;top:695.5px;width:43px;text-align:center;height:23px;line-height:23px;font-family:'Liberation Sans', sans-serif;font-size:17px;font-weight:normal;color:#1e1e1e;white-space:nowrap;">6</div><div style="left:433px;top:690px;width:110px;height:34px;border-right:1.5px solid #dedede;border-bottom:1.5px solid #dedede;box-sizing:border-box;"></div><div style="left:440px;top:695.5px;height:23px;line-height:23px;font-family:'Liberation Sans', sans-serif;font-size:17px;font-weight:normal;color:#1e1e1e;white-space:nowrap;">16</div><div style="left:364px;top:724px;width:26px;height:34px;background:linear-gradient(90deg,#eaf1fa,#dbe6f4);border-left:2px solid #9fb3cf;border-right:1.5px solid #9fb3cf;border-bottom:2px solid #8aa2c4;box-sizing:border-box;"></div><div style="left:390px;top:724px;width:43px;height:34px;background:#f0f0f0;"></div><div style="left:390px;top:724px;width:43px;height:34px;border-right:1.5px solid #dedede;border-bottom:1.5px solid #dedede;box-sizing:border-box;"></div><div style="left:390px;top:729.5px;width:43px;text-align:center;height:23px;line-height:23px;font-family:'Liberation Sans', sans-serif;font-size:17px;font-weight:normal;color:#1e1e1e;white-space:nowrap;">7</div><div style="left:433px;top:724px;width:110px;height:34px;border-right:1.5px solid #dedede;border-bottom:1.5px solid #dedede;box-sizing:border-box;"></div><div style="left:440px;top:729.5px;height:23px;line-height:23px;font-family:'Liberation Sans', sans-serif;font-size:17px;font-weight:normal;color:#1e1e1e;white-space:nowrap;">4</div><div style="left:364px;top:758px;width:26px;height:34px;background:linear-gradient(90deg,#eaf1fa,#dbe6f4);border-left:2px solid #9fb3cf;border-right:1.5px solid #9fb3cf;border-bottom:2px solid #8aa2c4;box-sizing:border-box;"></div><div style="left:390px;top:758px;width:43px;height:34px;background:#f0f0f0;"></div><div style="left:390px;top:758px;width:43px;height:34px;border-right:1.5px solid #dedede;border-bottom:1.5px solid #dedede;box-sizing:border-box;"></div><div style="left:390px;top:763.5px;width:43px;text-align:center;height:23px;line-height:23px;font-family:'Liberation Sans', sans-serif;font-size:17px;font-weight:normal;color:#1e1e1e;white-space:nowrap;">8</div><div style="left:433px;top:758px;width:110px;height:34px;border-right:1.5px solid #dedede;border-bottom:1.5px solid #dedede;box-sizing:border-box;"></div><div style="left:440px;top:763.5px;height:23px;line-height:23px;font-family:'Liberation Sans', sans-serif;font-size:17px;font-weight:normal;color:#1e1e1e;white-space:nowrap;">0</div><div style="left:364px;top:792px;width:26px;height:34px;background:linear-gradient(90deg,#eaf1fa,#dbe6f4);border-left:2px solid #9fb3cf;border-right:1.5px solid #9fb3cf;border-bottom:2px solid #8aa2c4;box-sizing:border-box;"></div><div style="left:390px;top:792px;width:43px;height:34px;background:#f0f0f0;"></div><div style="left:390px;top:792px;width:43px;height:34px;border-right:1.5px solid #dedede;border-bottom:1.5px solid #dedede;box-sizing:border-box;"></div><div style="left:390px;top:797.5px;width:43px;text-align:center;height:23px;line-height:23px;font-family:'Liberation Sans', sans-serif;font-size:17px;font-weight:normal;color:#1e1e1e;white-space:nowrap;">9</div><div style="left:433px;top:792px;width:110px;height:34px;border-right:1.5px solid #dedede;border-bottom:1.5px solid #dedede;box-sizing:border-box;"></div><div style="left:440px;top:797.5px;height:23px;line-height:23px;font-family:'Liberation Sans', sans-serif;font-size:17px;font-weight:normal;color:#1e1e1e;white-space:nowrap;">0</div><div style="left:364px;top:826px;width:26px;height:34px;background:linear-gradient(90deg,#eaf1fa,#dbe6f4);border-left:2px solid #9fb3cf;border-right:1.5px solid #9fb3cf;border-bottom:2px solid #8aa2c4;box-sizing:border-box;"></div><div style="left:390px;top:826px;width:43px;height:34px;background:#f0f0f0;"></div><div style="left:390px;top:826px;width:43px;height:34px;border-right:1.5px solid #dedede;border-bottom:1.5px solid #dedede;box-sizing:border-box;"></div><div style="left:390px;top:831.5px;width:43px;text-align:center;height:23px;line-height:23px;font-family:'Liberation Sans', sans-serif;font-size:17px;font-weight:normal;color:#1e1e1e;white-space:nowrap;">10</div><div style="left:433px;top:826px;width:110px;height:34px;border-right:1.5px solid #dedede;border-bottom:1.5px solid #dedede;box-sizing:border-box;"></div><div style="left:440px;top:831.5px;height:23px;line-height:23px;font-family:'Liberation Sans', sans-serif;font-size:17px;font-weight:normal;color:#1e1e1e;white-space:nowrap;">0</div><div style="left:364px;top:453px;width:179px;height:407px;border:1.5px solid #d4d8de;border-left:none;border-top:1.5px solid #a6b9d4;box-sizing:border-box;"></div><div style="left:541.5px;top:453px;width:1.5px;height:33px;background:#a6b9d4;"></div><div style="left:21px;top:883px;width:527px;height:465px;border:1px solid #d5d5d5;box-sizing:border-box;"></div><div style="left:28px;top:879px;width:133.5px;height:8px;background:#f0f0f0;"></div><div class="lb" style="left:30.5px;top:869.0px;height:24px;line-height:24px;color:#1a1a1a;-webkit-text-stroke:0.6px #1a1a1a;"><i class="c"><i class="s" style="transform:scaleX(0.75)">L</i></i><i class="c"><i class="s" style="transform:scaleX(0.91)">u</i></i><i class="c"><i class="s" style="transform:scaleX(0.78);font-family:Liberation Mono,monospace;font-size:17px">m</i></i><i class="c">i</i><i class="c"><i class="s" style="transform:scaleX(0.91)">n</i></i><i class="c">a</i><i class="c"><i class="s" style="transform:scaleX(0.91)">n</i></i><i class="c">c</i><i class="c">e</i><i class="c"> </i><i class="c"><i class="s" style="transform:scaleX(0.82)">P</i></i><i class="c">a</i><i class="c"><i class="s" style="transform:scaleX(0.91)">n</i></i><i class="c">e</i><i class="c">l</i></div><div class="lb" style="left:184.5px;top:901.0px;height:24px;line-height:24px;color:#222222;-webkit-text-stroke:0.6px #222222;"><i class="c"><i class="s" style="transform:scaleX(0.68)">R</i></i><i class="c"><i class="s" style="transform:scaleX(0.78);font-family:Liberation Mono,monospace;font-size:17px">O</i></i><i class="c">I</i></div><div style="left:220px;top:898px;width:142px;height:29px;background:#ffffff;border:1.6px solid #c3cedf;box-sizing:border-box;"></div><div style="left:336px;top:900px;width:24px;height:25px;background:linear-gradient(#f3f7fc,#dde8f5);border:1px solid #c5d4e8;box-sizing:border-box;"></div><svg style="left:336px;top:900px;" width="24" height="25" viewBox="0 0 24 25"><path d="M7.0 10.5 L17.0 10.5 L12.0 16.5 Z" fill="#1e1e1e"/></svg><div style="left:223px;top:900.5px;height:23px;line-height:23px;font-family:'Liberation Sans', sans-serif;font-size:17px;font-weight:normal;color:#1e1e1e;white-space:nowrap;">ROI-0</div><div style="left:25px;top:939px;width:519px;height:407px;background:#ffffff;"></div><div style="left:25px;top:939px;width:519px;height:33px;background:linear-gradient(#f7fafe,#dfe9f6);"></div><div style="left:25px;top:939px;width:27px;height:33px;border-right:1.5px solid #b4c6de;border-bottom:2px solid #a9bcd8;box-sizing:border-box;"></div><div style="left:52px;top:939px;width:43px;height:33px;border-right:1.5px solid #b4c6de;border-bottom:2px solid #a9bcd8;box-sizing:border-box;"></div><div style="left:52px;top:944.0px;width:43px;text-align:center;height:23px;line-height:23px;font-family:'Liberation Sans', sans-serif;font-size:17px;font-weight:normal;color:#1e1e1e;white-space:nowrap;">LUT</div><div style="left:95px;top:939px;width:112px;height:33px;border-right:1.5px solid #b4c6de;border-bottom:2px solid #a9bcd8;box-sizing:border-box;"></div><div style="left:95px;top:944.0px;width:112px;text-align:center;height:23px;line-height:23px;font-family:'Liberation Sans', sans-serif;font-size:17px;font-weight:normal;color:#1e1e1e;white-space:nowrap;">Lux</div><div style="left:207px;top:939px;width:111px;height:33px;border-right:1.5px solid #b4c6de;border-bottom:2px solid #a9bcd8;box-sizing:border-box;"></div><div style="left:207px;top:944.0px;width:111px;text-align:center;height:23px;line-height:23px;font-family:'Liberation Sans', sans-serif;font-size:17px;font-weight:normal;color:#1e1e1e;white-space:nowrap;">Weight</div><div style="left:318px;top:939px;width:114px;height:33px;border-right:1.5px solid #b4c6de;border-bottom:2px solid #a9bcd8;box-sizing:border-box;"></div><div style="left:318px;top:944.0px;width:114px;text-align:center;height:23px;line-height:23px;font-family:'Liberation Sans', sans-serif;font-size:17px;font-weight:normal;color:#1e1e1e;white-space:nowrap;">Min</div><div style="left:432px;top:939px;width:112px;height:33px;border-right:1.5px solid #b4c6de;border-bottom:2px solid #a9bcd8;box-sizing:border-box;"></div><div style="left:432px;top:944.0px;width:112px;text-align:center;height:23px;line-height:23px;font-family:'Liberation Sans', sans-serif;font-size:17px;font-weight:normal;color:#1e1e1e;white-space:nowrap;">Max</div><div style="left:25px;top:972px;width:27px;height:34px;background:linear-gradient(90deg,#eaf1fa,#dbe6f4);border-left:2px solid #9fb3cf;border-right:1.5px solid #9fb3cf;border-bottom:2px solid #8aa2c4;box-sizing:border-box;"></div><svg style="left:28px;top:983.0px;" width="10" height="12" viewBox="0 0 10 12"><path d="M1 0.5 L7.5 6 L1 11.5 Z" fill="#333"/></svg><div style="left:52px;top:972px;width:43px;height:34px;background:#bfdcfd;"></div><div style="left:52px;top:972px;width:43px;height:34px;border-right:1.5px solid #dedede;border-bottom:1.5px solid #dedede;box-sizing:border-box;"></div><div style="left:52px;top:977.5px;width:43px;text-align:center;height:23px;line-height:23px;font-family:'Liberation Sans', sans-serif;font-size:17px;font-weight:normal;color:#1e1e1e;white-space:nowrap;">0</div><div style="left:95px;top:972px;width:112px;height:34px;border-right:1.5px solid #dedede;border-bottom:1.5px solid #dedede;box-sizing:border-box;"></div><div style="left:102px;top:977.5px;height:23px;line-height:23px;font-family:'Liberation Sans', sans-serif;font-size:17px;font-weight:normal;color:#1e1e1e;white-space:nowrap;">20000</div><div style="left:207px;top:972px;width:111px;height:34px;border-right:1.5px solid #dedede;border-bottom:1.5px solid #dedede;box-sizing:border-box;"></div><div style="left:214px;top:977.5px;height:23px;line-height:23px;font-family:'Liberation Sans', sans-serif;font-size:17px;font-weight:normal;color:#1e1e1e;white-space:nowrap;">0</div><div style="left:318px;top:972px;width:114px;height:34px;border-right:1.5px solid #dedede;border-bottom:1.5px solid #dedede;box-sizing:border-box;"></div><div style="left:325px;top:977.5px;height:23px;line-height:23px;font-family:'Liberation Sans', sans-serif;font-size:17px;font-weight:normal;color:#1e1e1e;white-space:nowrap;">4</div><div style="left:432px;top:972px;width:112px;height:34px;border-right:1.5px solid #dedede;border-bottom:1.5px solid #dedede;box-sizing:border-box;"></div><div style="left:439px;top:977.5px;height:23px;line-height:23px;font-family:'Liberation Sans', sans-serif;font-size:17px;font-weight:normal;color:#1e1e1e;white-space:nowrap;">240</div><div style="left:25px;top:1006px;width:27px;height:34px;background:linear-gradient(90deg,#eaf1fa,#dbe6f4);border-left:2px solid #9fb3cf;border-right:1.5px solid #9fb3cf;border-bottom:2px solid #8aa2c4;box-sizing:border-box;"></div><div style="left:52px;top:1006px;width:43px;height:34px;background:#f0f0f0;"></div><div style="left:52px;top:1006px;width:43px;height:34px;border-right:1.5px solid #dedede;border-bottom:1.5px solid #dedede;box-sizing:border-box;"></div><div style="left:52px;top:1011.5px;width:43px;text-align:center;height:23px;line-height:23px;font-family:'Liberation Sans', sans-serif;font-size:17px;font-weight:normal;color:#1e1e1e;white-space:nowrap;">1</div><div style="left:95px;top:1006px;width:112px;height:34px;border-right:1.5px solid #dedede;border-bottom:1.5px solid #dedede;box-sizing:border-box;"></div><div style="left:102px;top:1011.5px;height:23px;line-height:23px;font-family:'Liberation Sans', sans-serif;font-size:17px;font-weight:normal;color:#1e1e1e;white-space:nowrap;">15000</div><div style="left:207px;top:1006px;width:111px;height:34px;border-right:1.5px solid #dedede;border-bottom:1.5px solid #dedede;box-sizing:border-box;"></div><div style="left:214px;top:1011.5px;height:23px;line-height:23px;font-family:'Liberation Sans', sans-serif;font-size:17px;font-weight:normal;color:#1e1e1e;white-space:nowrap;">0</div><div style="left:318px;top:1006px;width:114px;height:34px;border-right:1.5px solid #dedede;border-bottom:1.5px solid #dedede;box-sizing:border-box;"></div><div style="left:325px;top:1011.5px;height:23px;line-height:23px;font-family:'Liberation Sans', sans-serif;font-size:17px;font-weight:normal;color:#1e1e1e;white-space:nowrap;">4</div><div style="left:432px;top:1006px;width:112px;height:34px;border-right:1.5px solid #dedede;border-bottom:1.5px solid #dedede;box-sizing:border-box;"></div><div style="left:439px;top:1011.5px;height:23px;line-height:23px;font-family:'Liberation Sans', sans-serif;font-size:17px;font-weight:normal;color:#1e1e1e;white-space:nowrap;">240</div><div style="left:25px;top:1040px;width:27px;height:34px;background:linear-gradient(90deg,#eaf1fa,#dbe6f4);border-left:2px solid #9fb3cf;border-right:1.5px solid #9fb3cf;border-bottom:2px solid #8aa2c4;box-sizing:border-box;"></div><div style="left:52px;top:1040px;width:43px;height:34px;background:#f0f0f0;"></div><div style="left:52px;top:1040px;width:43px;height:34px;border-right:1.5px solid #dedede;border-bottom:1.5px solid #dedede;box-sizing:border-box;"></div><div style="left:52px;top:1045.5px;width:43px;text-align:center;height:23px;line-height:23px;font-family:'Liberation Sans', sans-serif;font-size:17px;font-weight:normal;color:#1e1e1e;white-space:nowrap;">2</div><div style="left:95px;top:1040px;width:112px;height:34px;border-right:1.5px solid #dedede;border-bottom:1.5px solid #dedede;box-sizing:border-box;"></div><div style="left:102px;top:1045.5px;height:23px;line-height:23px;font-family:'Liberation Sans', sans-serif;font-size:17px;font-weight:normal;color:#1e1e1e;white-space:nowrap;">10000</div><div style="left:207px;top:1040px;width:111px;height:34px;border-right:1.5px solid #dedede;border-bottom:1.5px solid #dedede;box-sizing:border-box;"></div><div style="left:214px;top:1045.5px;height:23px;line-height:23px;font-family:'Liberation Sans', sans-serif;font-size:17px;font-weight:normal;color:#1e1e1e;white-space:nowrap;">0</div><div style="left:318px;top:1040px;width:114px;height:34px;border-right:1.5px solid #dedede;border-bottom:1.5px solid #dedede;box-sizing:border-box;"></div><div style="left:325px;top:1045.5px;height:23px;line-height:23px;font-family:'Liberation Sans', sans-serif;font-size:17px;font-weight:normal;color:#1e1e1e;white-space:nowrap;">4</div><div style="left:432px;top:1040px;width:112px;height:34px;border-right:1.5px solid #dedede;border-bottom:1.5px solid #dedede;box-sizing:border-box;"></div><div style="left:439px;top:1045.5px;height:23px;line-height:23px;font-family:'Liberation Sans', sans-serif;font-size:17px;font-weight:normal;color:#1e1e1e;white-space:nowrap;">240</div><div style="left:25px;top:1074px;width:27px;height:34px;background:linear-gradient(90deg,#eaf1fa,#dbe6f4);border-left:2px solid #9fb3cf;border-right:1.5px solid #9fb3cf;border-bottom:2px solid #8aa2c4;box-sizing:border-box;"></div><div style="left:52px;top:1074px;width:43px;height:34px;background:#f0f0f0;"></div><div style="left:52px;top:1074px;width:43px;height:34px;border-right:1.5px solid #dedede;border-bottom:1.5px solid #dedede;box-sizing:border-box;"></div><div style="left:52px;top:1079.5px;width:43px;text-align:center;height:23px;line-height:23px;font-family:'Liberation Sans', sans-serif;font-size:17px;font-weight:normal;color:#1e1e1e;white-space:nowrap;">3</div><div style="left:95px;top:1074px;width:112px;height:34px;border-right:1.5px solid #dedede;border-bottom:1.5px solid #dedede;box-sizing:border-box;"></div><div style="left:102px;top:1079.5px;height:23px;line-height:23px;font-family:'Liberation Sans', sans-serif;font-size:17px;font-weight:normal;color:#1e1e1e;white-space:nowrap;">5000</div><div style="left:207px;top:1074px;width:111px;height:34px;border-right:1.5px solid #dedede;border-bottom:1.5px solid #dedede;box-sizing:border-box;"></div><div style="left:214px;top:1079.5px;height:23px;line-height:23px;font-family:'Liberation Sans', sans-serif;font-size:17px;font-weight:normal;color:#1e1e1e;white-space:nowrap;">0</div><div style="left:318px;top:1074px;width:114px;height:34px;border-right:1.5px solid #dedede;border-bottom:1.5px solid #dedede;box-sizing:border-box;"></div><div style="left:325px;top:1079.5px;height:23px;line-height:23px;font-family:'Liberation Sans', sans-serif;font-size:17px;font-weight:normal;color:#1e1e1e;white-space:nowrap;">4</div><div style="left:432px;top:1074px;width:112px;height:34px;border-right:1.5px solid #dedede;border-bottom:1.5px solid #dedede;box-sizing:border-box;"></div><div style="left:439px;top:1079.5px;height:23px;line-height:23px;font-family:'Liberation Sans', sans-serif;font-size:17px;font-weight:normal;color:#1e1e1e;white-space:nowrap;">240</div><div style="left:25px;top:1108px;width:27px;height:34px;background:linear-gradient(90deg,#eaf1fa,#dbe6f4);border-left:2px solid #9fb3cf;border-right:1.5px solid #9fb3cf;border-bottom:2px solid #8aa2c4;box-sizing:border-box;"></div><div style="left:52px;top:1108px;width:43px;height:34px;background:#f0f0f0;"></div><div style="left:52px;top:1108px;width:43px;height:34px;border-right:1.5px solid #dedede;border-bottom:1.5px solid #dedede;box-sizing:border-box;"></div><div style="left:52px;top:1113.5px;width:43px;text-align:center;height:23px;line-height:23px;font-family:'Liberation Sans', sans-serif;font-size:17px;font-weight:normal;color:#1e1e1e;white-space:nowrap;">4</div><div style="left:95px;top:1108px;width:112px;height:34px;border-right:1.5px solid #dedede;border-bottom:1.5px solid #dedede;box-sizing:border-box;"></div><div style="left:102px;top:1113.5px;height:23px;line-height:23px;font-family:'Liberation Sans', sans-serif;font-size:17px;font-weight:normal;color:#1e1e1e;white-space:nowrap;">3000</div><div style="left:207px;top:1108px;width:111px;height:34px;border-right:1.5px solid #dedede;border-bottom:1.5px solid #dedede;box-sizing:border-box;"></div><div style="left:214px;top:1113.5px;height:23px;line-height:23px;font-family:'Liberation Sans', sans-serif;font-size:17px;font-weight:normal;color:#1e1e1e;white-space:nowrap;">0</div><div style="left:318px;top:1108px;width:114px;height:34px;border-right:1.5px solid #dedede;border-bottom:1.5px solid #dedede;box-sizing:border-box;"></div><div style="left:325px;top:1113.5px;height:23px;line-height:23px;font-family:'Liberation Sans', sans-serif;font-size:17px;font-weight:normal;color:#1e1e1e;white-space:nowrap;">4</div><div style="left:432px;top:1108px;width:112px;height:34px;border-right:1.5px solid #dedede;border-bottom:1.5px solid #dedede;box-sizing:border-box;"></div><div style="left:439px;top:1113.5px;height:23px;line-height:23px;font-family:'Liberation Sans', sans-serif;font-size:17px;font-weight:normal;color:#1e1e1e;white-space:nowrap;">240</div><div style="left:25px;top:1142px;width:27px;height:34px;background:linear-gradient(90deg,#eaf1fa,#dbe6f4);border-left:2px solid #9fb3cf;border-right:1.5px solid #9fb3cf;border-bottom:2px solid #8aa2c4;box-sizing:border-box;"></div><div style="left:52px;top:1142px;width:43px;height:34px;background:#f0f0f0;"></div><div style="left:52px;top:1142px;width:43px;height:34px;border-right:1.5px solid #dedede;border-bottom:1.5px solid #dedede;box-sizing:border-box;"></div><div style="left:52px;top:1147.5px;width:43px;text-align:center;height:23px;line-height:23px;font-family:'Liberation Sans', sans-serif;font-size:17px;font-weight:normal;color:#1e1e1e;white-space:nowrap;">5</div><div style="left:95px;top:1142px;width:112px;height:34px;border-right:1.5px solid #dedede;border-bottom:1.5px solid #dedede;box-sizing:border-box;"></div><div style="left:102px;top:1147.5px;height:23px;line-height:23px;font-family:'Liberation Sans', sans-serif;font-size:17px;font-weight:normal;color:#1e1e1e;white-space:nowrap;">2000</div><div style="left:207px;top:1142px;width:111px;height:34px;border-right:1.5px solid #dedede;border-bottom:1.5px solid #dedede;box-sizing:border-box;"></div><div style="left:214px;top:1147.5px;height:23px;line-height:23px;font-family:'Liberation Sans', sans-serif;font-size:17px;font-weight:normal;color:#1e1e1e;white-space:nowrap;">16</div><div style="left:318px;top:1142px;width:114px;height:34px;border-right:1.5px solid #dedede;border-bottom:1.5px solid #dedede;box-sizing:border-box;"></div><div style="left:325px;top:1147.5px;height:23px;line-height:23px;font-family:'Liberation Sans', sans-serif;font-size:17px;font-weight:normal;color:#1e1e1e;white-space:nowrap;">4</div><div style="left:432px;top:1142px;width:112px;height:34px;border-right:1.5px solid #dedede;border-bottom:1.5px solid #dedede;box-sizing:border-box;"></div><div style="left:439px;top:1147.5px;height:23px;line-height:23px;font-family:'Liberation Sans', sans-serif;font-size:17px;font-weight:normal;color:#1e1e1e;white-space:nowrap;">240</div><div style="left:25px;top:1176px;width:27px;height:34px;background:linear-gradient(90deg,#eaf1fa,#dbe6f4);border-left:2px solid #9fb3cf;border-right:1.5px solid #9fb3cf;border-bottom:2px solid #8aa2c4;box-sizing:border-box;"></div><div style="left:52px;top:1176px;width:43px;height:34px;background:#f0f0f0;"></div><div style="left:52px;top:1176px;width:43px;height:34px;border-right:1.5px solid #dedede;border-bottom:1.5px solid #dedede;box-sizing:border-box;"></div><div style="left:52px;top:1181.5px;width:43px;text-align:center;height:23px;line-height:23px;font-family:'Liberation Sans', sans-serif;font-size:17px;font-weight:normal;color:#1e1e1e;white-space:nowrap;">6</div><div style="left:95px;top:1176px;width:112px;height:34px;border-right:1.5px solid #dedede;border-bottom:1.5px solid #dedede;box-sizing:border-box;"></div><div style="left:102px;top:1181.5px;height:23px;line-height:23px;font-family:'Liberation Sans', sans-serif;font-size:17px;font-weight:normal;color:#1e1e1e;white-space:nowrap;">1000</div><div style="left:207px;top:1176px;width:111px;height:34px;border-right:1.5px solid #dedede;border-bottom:1.5px solid #dedede;box-sizing:border-box;"></div><div style="left:214px;top:1181.5px;height:23px;line-height:23px;font-family:'Liberation Sans', sans-serif;font-size:17px;font-weight:normal;color:#1e1e1e;white-space:nowrap;">16</div><div style="left:318px;top:1176px;width:114px;height:34px;border-right:1.5px solid #dedede;border-bottom:1.5px solid #dedede;box-sizing:border-box;"></div><div style="left:325px;top:1181.5px;height:23px;line-height:23px;font-family:'Liberation Sans', sans-serif;font-size:17px;font-weight:normal;color:#1e1e1e;white-space:nowrap;">4</div><div style="left:432px;top:1176px;width:112px;height:34px;border-right:1.5px solid #dedede;border-bottom:1.5px solid #dedede;box-sizing:border-box;"></div><div style="left:439px;top:1181.5px;height:23px;line-height:23px;font-family:'Liberation Sans', sans-serif;font-size:17px;font-weight:normal;color:#1e1e1e;white-space:nowrap;">240</div><div style="left:25px;top:1210px;width:27px;height:34px;background:linear-gradient(90deg,#eaf1fa,#dbe6f4);border-left:2px solid #9fb3cf;border-right:1.5px solid #9fb3cf;border-bottom:2px solid #8aa2c4;box-sizing:border-box;"></div><div style="left:52px;top:1210px;width:43px;height:34px;background:#f0f0f0;"></div><div style="left:52px;top:1210px;width:43px;height:34px;border-right:1.5px solid #dedede;border-bottom:1.5px solid #dedede;box-sizing:border-box;"></div><div style="left:52px;top:1215.5px;width:43px;text-align:center;height:23px;line-height:23px;font-family:'Liberation Sans', sans-serif;font-size:17px;font-weight:normal;color:#1e1e1e;white-space:nowrap;">7</div><div style="left:95px;top:1210px;width:112px;height:34px;border-right:1.5px solid #dedede;border-bottom:1.5px solid #dedede;box-sizing:border-box;"></div><div style="left:102px;top:1215.5px;height:23px;line-height:23px;font-family:'Liberation Sans', sans-serif;font-size:17px;font-weight:normal;color:#1e1e1e;white-space:nowrap;">200</div><div style="left:207px;top:1210px;width:111px;height:34px;border-right:1.5px solid #dedede;border-bottom:1.5px solid #dedede;box-sizing:border-box;"></div><div style="left:214px;top:1215.5px;height:23px;line-height:23px;font-family:'Liberation Sans', sans-serif;font-size:17px;font-weight:normal;color:#1e1e1e;white-space:nowrap;">16</div><div style="left:318px;top:1210px;width:114px;height:34px;border-right:1.5px solid #dedede;border-bottom:1.5px solid #dedede;box-sizing:border-box;"></div><div style="left:325px;top:1215.5px;height:23px;line-height:23px;font-family:'Liberation Sans', sans-serif;font-size:17px;font-weight:normal;color:#1e1e1e;white-space:nowrap;">4</div><div style="left:432px;top:1210px;width:112px;height:34px;border-right:1.5px solid #dedede;border-bottom:1.5px solid #dedede;box-sizing:border-box;"></div><div style="left:439px;top:1215.5px;height:23px;line-height:23px;font-family:'Liberation Sans', sans-serif;font-size:17px;font-weight:normal;color:#1e1e1e;white-space:nowrap;">240</div><div style="left:25px;top:1244px;width:27px;height:34px;background:linear-gradient(90deg,#eaf1fa,#dbe6f4);border-left:2px solid #9fb3cf;border-right:1.5px solid #9fb3cf;border-bottom:2px solid #8aa2c4;box-sizing:border-box;"></div><div style="left:52px;top:1244px;width:43px;height:34px;background:#f0f0f0;"></div><div style="left:52px;top:1244px;width:43px;height:34px;border-right:1.5px solid #dedede;border-bottom:1.5px solid #dedede;box-sizing:border-box;"></div><div style="left:52px;top:1249.5px;width:43px;text-align:center;height:23px;line-height:23px;font-family:'Liberation Sans', sans-serif;font-size:17px;font-weight:normal;color:#1e1e1e;white-space:nowrap;">8</div><div style="left:95px;top:1244px;width:112px;height:34px;border-right:1.5px solid #dedede;border-bottom:1.5px solid #dedede;box-sizing:border-box;"></div><div style="left:102px;top:1249.5px;height:23px;line-height:23px;font-family:'Liberation Sans', sans-serif;font-size:17px;font-weight:normal;color:#1e1e1e;white-space:nowrap;">90</div><div style="left:207px;top:1244px;width:111px;height:34px;border-right:1.5px solid #dedede;border-bottom:1.5px solid #dedede;box-sizing:border-box;"></div><div style="left:214px;top:1249.5px;height:23px;line-height:23px;font-family:'Liberation Sans', sans-serif;font-size:17px;font-weight:normal;color:#1e1e1e;white-space:nowrap;">16</div><div style="left:318px;top:1244px;width:114px;height:34px;border-right:1.5px solid #dedede;border-bottom:1.5px solid #dedede;box-sizing:border-box;"></div><div style="left:325px;top:1249.5px;height:23px;line-height:23px;font-family:'Liberation Sans', sans-serif;font-size:17px;font-weight:normal;color:#1e1e1e;white-space:nowrap;">4</div><div style="left:432px;top:1244px;width:112px;height:34px;border-right:1.5px solid #dedede;border-bottom:1.5px solid #dedede;box-sizing:border-box;"></div><div style="left:439px;top:1249.5px;height:23px;line-height:23px;font-family:'Liberation Sans', sans-serif;font-size:17px;font-weight:normal;color:#1e1e1e;white-space:nowrap;">240</div><div style="left:25px;top:1278px;width:27px;height:34px;background:linear-gradient(90deg,#eaf1fa,#dbe6f4);border-left:2px solid #9fb3cf;border-right:1.5px solid #9fb3cf;border-bottom:2px solid #8aa2c4;box-sizing:border-box;"></div><div style="left:52px;top:1278px;width:43px;height:34px;background:#f0f0f0;"></div><div style="left:52px;top:1278px;width:43px;height:34px;border-right:1.5px solid #dedede;border-bottom:1.5px solid #dedede;box-sizing:border-box;"></div><div style="left:52px;top:1283.5px;width:43px;text-align:center;height:23px;line-height:23px;font-family:'Liberation Sans', sans-serif;font-size:17px;font-weight:normal;color:#1e1e1e;white-space:nowrap;">9</div><div style="left:95px;top:1278px;width:112px;height:34px;border-right:1.5px solid #dedede;border-bottom:1.5px solid #dedede;box-sizing:border-box;"></div><div style="left:102px;top:1283.5px;height:23px;line-height:23px;font-family:'Liberation Sans', sans-serif;font-size:17px;font-weight:normal;color:#1e1e1e;white-space:nowrap;">32</div><div style="left:207px;top:1278px;width:111px;height:34px;border-right:1.5px solid #dedede;border-bottom:1.5px solid #dedede;box-sizing:border-box;"></div><div style="left:214px;top:1283.5px;height:23px;line-height:23px;font-family:'Liberation Sans', sans-serif;font-size:17px;font-weight:normal;color:#1e1e1e;white-space:nowrap;">16</div><div style="left:318px;top:1278px;width:114px;height:34px;border-right:1.5px solid #dedede;border-bottom:1.5px solid #dedede;box-sizing:border-box;"></div><div style="left:325px;top:1283.5px;height:23px;line-height:23px;font-family:'Liberation Sans', sans-serif;font-size:17px;font-weight:normal;color:#1e1e1e;white-space:nowrap;">4</div><div style="left:432px;top:1278px;width:112px;height:34px;border-right:1.5px solid #dedede;border-bottom:1.5px solid #dedede;box-sizing:border-box;"></div><div style="left:439px;top:1283.5px;height:23px;line-height:23px;font-family:'Liberation Sans', sans-serif;font-size:17px;font-weight:normal;color:#1e1e1e;white-space:nowrap;">240</div><div style="left:25px;top:1312px;width:27px;height:34px;background:linear-gradient(90deg,#eaf1fa,#dbe6f4);border-left:2px solid #9fb3cf;border-right:1.5px solid #9fb3cf;border-bottom:2px solid #8aa2c4;box-sizing:border-box;"></div><div style="left:52px;top:1312px;width:43px;height:34px;background:#f0f0f0;"></div><div style="left:52px;top:1312px;width:43px;height:34px;border-right:1.5px solid #dedede;border-bottom:1.5px solid #dedede;box-sizing:border-box;"></div><div style="left:52px;top:1317.5px;width:43px;text-align:center;height:23px;line-height:23px;font-family:'Liberation Sans', sans-serif;font-size:17px;font-weight:normal;color:#1e1e1e;white-space:nowrap;">10</div><div style="left:95px;top:1312px;width:112px;height:34px;border-right:1.5px solid #dedede;border-bottom:1.5px solid #dedede;box-sizing:border-box;"></div><div style="left:102px;top:1317.5px;height:23px;line-height:23px;font-family:'Liberation Sans', sans-serif;font-size:17px;font-weight:normal;color:#1e1e1e;white-space:nowrap;">20</div><div style="left:207px;top:1312px;width:111px;height:34px;border-right:1.5px solid #dedede;border-bottom:1.5px solid #dedede;box-sizing:border-box;"></div><div style="left:214px;top:1317.5px;height:23px;line-height:23px;font-family:'Liberation Sans', sans-serif;font-size:17px;font-weight:normal;color:#1e1e1e;white-space:nowrap;">16</div><div style="left:318px;top:1312px;width:114px;height:34px;border-right:1.5px solid #dedede;border-bottom:1.5px solid #dedede;box-sizing:border-box;"></div><div style="left:325px;top:1317.5px;height:23px;line-height:23px;font-family:'Liberation Sans', sans-serif;font-size:17px;font-weight:normal;color:#1e1e1e;white-space:nowrap;">4</div><div style="left:432px;top:1312px;width:112px;height:34px;border-right:1.5px solid #dedede;border-bottom:1.5px solid #dedede;box-sizing:border-box;"></div><div style="left:439px;top:1317.5px;height:23px;line-height:23px;font-family:'Liberation Sans', sans-serif;font-size:17px;font-weight:normal;color:#1e1e1e;white-space:nowrap;">240</div><div style="left:25px;top:939px;width:519px;height:407px;border:1.5px solid #d4d8de;border-left:none;border-top:1.5px solid #a6b9d4;box-sizing:border-box;"></div><div style="left:542.5px;top:939px;width:1.5px;height:33px;background:#a6b9d4;"></div><div style="left:564px;top:55px;width:526px;height:627px;border:1px solid #d5d5d5;box-sizing:border-box;"></div><div style="left:571px;top:51px;width:133.5px;height:8px;background:#f0f0f0;"></div><div class="lb" style="left:573.5px;top:41.0px;height:24px;line-height:24px;color:#1a1a1a;-webkit-text-stroke:0.6px #1a1a1a;"><i class="c"><i class="s" style="transform:scaleX(0.68)">C</i></i><i class="c">a</i><i class="c">l</i><i class="c">i</i><i class="c"><i class="s" style="transform:scaleX(0.91)">b</i></i><i class="c">r</i><i class="c">a</i><i class="c">t</i><i class="c">e</i><i class="c"> </i><i class="c"><i class="s" style="transform:scaleX(0.82)">P</i></i><i class="c">a</i><i class="c"><i class="s" style="transform:scaleX(0.91)">n</i></i><i class="c">e</i><i class="c">l</i></div><div style="left:568px;top:69px;width:518px;height:611px;background:#ffffff;"></div><div style="left:568px;top:69px;width:518px;height:33px;background:linear-gradient(#f7fafe,#dfe9f6);"></div><div style="left:568px;top:69px;width:27px;height:33px;border-right:1.5px solid #b4c6de;border-bottom:2px solid #a9bcd8;box-sizing:border-box;"></div><div style="left:595px;top:69px;width:42px;height:33px;border-right:1.5px solid #b4c6de;border-bottom:2px solid #a9bcd8;box-sizing:border-box;"></div><div style="left:595px;top:74.0px;width:42px;text-align:center;height:23px;line-height:23px;font-family:'Liberation Sans', sans-serif;font-size:17px;font-weight:normal;color:#1e1e1e;white-space:nowrap;">ROI</div><div style="left:637px;top:69px;width:64px;height:33px;border-right:1.5px solid #b4c6de;border-bottom:2px solid #a9bcd8;box-sizing:border-box;"></div><div style="left:637px;top:74.0px;width:64px;text-align:center;height:23px;line-height:23px;font-family:'Liberation Sans', sans-serif;font-size:17px;font-weight:normal;color:#1e1e1e;white-space:nowrap;">Visible</div><div style="left:701px;top:69px;width:64px;height:33px;border-right:1.5px solid #b4c6de;border-bottom:2px solid #a9bcd8;box-sizing:border-box;"></div><div style="left:701px;top:74.0px;width:64px;text-align:center;height:23px;line-height:23px;font-family:'Liberation Sans', sans-serif;font-size:17px;font-weight:normal;color:#1e1e1e;white-space:nowrap;">Enable</div><div style="left:765px;top:69px;width:81px;height:33px;border-right:1.5px solid #b4c6de;border-bottom:2px solid #a9bcd8;box-sizing:border-box;"></div><div style="left:765px;top:74.0px;width:81px;text-align:center;height:23px;line-height:23px;font-family:'Liberation Sans', sans-serif;font-size:17px;font-weight:normal;color:#1e1e1e;white-space:nowrap;">X Low</div><div style="left:846px;top:69px;width:78px;height:33px;border-right:1.5px solid #b4c6de;border-bottom:2px solid #a9bcd8;box-sizing:border-box;"></div><div style="left:846px;top:74.0px;width:78px;text-align:center;height:23px;line-height:23px;font-family:'Liberation Sans', sans-serif;font-size:17px;font-weight:normal;color:#1e1e1e;white-space:nowrap;">X High</div><div style="left:924px;top:69px;width:81px;height:33px;border-right:1.5px solid #b4c6de;border-bottom:2px solid #a9bcd8;box-sizing:border-box;"></div><div style="left:924px;top:74.0px;width:81px;text-align:center;height:23px;line-height:23px;font-family:'Liberation Sans', sans-serif;font-size:17px;font-weight:normal;color:#1e1e1e;white-space:nowrap;">Y Low</div><div style="left:1005px;top:69px;width:81px;height:33px;border-right:1.5px solid #b4c6de;border-bottom:2px solid #a9bcd8;box-sizing:border-box;"></div><div style="left:1005px;top:74.0px;width:81px;text-align:center;height:23px;line-height:23px;font-family:'Liberation Sans', sans-serif;font-size:17px;font-weight:normal;color:#1e1e1e;white-space:nowrap;">Y High</div><div style="left:568px;top:102px;width:27px;height:34px;background:linear-gradient(90deg,#eaf1fa,#dbe6f4);border-left:2px solid #9fb3cf;border-right:1.5px solid #9fb3cf;border-bottom:2px solid #8aa2c4;box-sizing:border-box;"></div><svg style="left:571px;top:113.0px;" width="10" height="12" viewBox="0 0 10 12"><path d="M1 0.5 L7.5 6 L1 11.5 Z" fill="#333"/></svg><div style="left:595px;top:102px;width:42px;height:34px;background:#bfdcfd;"></div><div style="left:595px;top:102px;width:42px;height:34px;border-right:1.5px solid #dedede;border-bottom:1.5px solid #dedede;box-sizing:border-box;"></div><div style="left:595px;top:107.5px;width:42px;text-align:center;height:23px;line-height:23px;font-family:'Liberation Sans', sans-serif;font-size:17px;font-weight:normal;color:#1e1e1e;white-space:nowrap;">0</div><div style="left:637px;top:102px;width:64px;height:34px;border-right:1.5px solid #dedede;border-bottom:1.5px solid #dedede;box-sizing:border-box;"></div><div style="left:660.0px;top:110.0px;width:18.0px;height:18.0px;background:linear-gradient(135deg,#dcdcdc,#f4f4f4);border:1px solid #b8c6dc;box-sizing:border-box;"></div><div style="left:663.0px;top:113.0px;width:12.0px;height:12.0px;border:1px solid #c8c8c8;box-sizing:border-box;background:linear-gradient(135deg,#e6e6e6,#fafafa);"></div><svg style="left:660.0px;top:110.0px;" width="18" height="18" viewBox="0 0 18 18"><path d="M4.5 8.5 L7.5 13 L13 4" fill="none" stroke="#3c5a8c" stroke-width="2.4"/></svg><div style="left:701px;top:102px;width:64px;height:34px;border-right:1.5px solid #dedede;border-bottom:1.5px solid #dedede;box-sizing:border-box;"></div><div style="left:724.0px;top:110.0px;width:18.0px;height:18.0px;background:linear-gradient(135deg,#dcdcdc,#f4f4f4);border:1px solid #b8c6dc;box-sizing:border-box;"></div><div style="left:727.0px;top:113.0px;width:12.0px;height:12.0px;border:1px solid #c8c8c8;box-sizing:border-box;background:linear-gradient(135deg,#e6e6e6,#fafafa);"></div><svg style="left:724.0px;top:110.0px;" width="18" height="18" viewBox="0 0 18 18"><path d="M4.5 8.5 L7.5 13 L13 4" fill="none" stroke="#3c5a8c" stroke-width="2.4"/></svg><div style="left:765px;top:102px;width:81px;height:34px;border-right:1.5px solid #dedede;border-bottom:1.5px solid #dedede;box-sizing:border-box;"></div><div style="left:772px;top:107.5px;height:23px;line-height:23px;font-family:'Liberation Sans', sans-serif;font-size:17px;font-weight:normal;color:#1e1e1e;white-space:nowrap;">319</div><div style="left:846px;top:102px;width:78px;height:34px;border-right:1.5px solid #dedede;border-bottom:1.5px solid #dedede;box-sizing:border-box;"></div><div style="left:853px;top:107.5px;height:23px;line-height:23px;font-family:'Liberation Sans', sans-serif;font-size:17px;font-weight:normal;color:#1e1e1e;white-space:nowrap;">519</div><div style="left:924px;top:102px;width:81px;height:34px;border-right:1.5px solid #dedede;border-bottom:1.5px solid #dedede;box-sizing:border-box;"></div><div style="left:931px;top:107.5px;height:23px;line-height:23px;font-family:'Liberation Sans', sans-serif;font-size:17px;font-weight:normal;color:#1e1e1e;white-space:nowrap;">274</div><div style="left:1005px;top:102px;width:81px;height:34px;border-right:1.5px solid #dedede;border-bottom:1.5px solid #dedede;box-sizing:border-box;"></div><div style="left:1012px;top:107.5px;height:23px;line-height:23px;font-family:'Liberation Sans', sans-serif;font-size:17px;font-weight:normal;color:#1e1e1e;white-space:nowrap;">473</div><div style="left:568px;top:136px;width:27px;height:34px;background:linear-gradient(90deg,#eaf1fa,#dbe6f4);border-left:2px solid #9fb3cf;border-right:1.5px solid #9fb3cf;border-bottom:2px solid #8aa2c4;box-sizing:border-box;"></div><div style="left:595px;top:136px;width:42px;height:34px;background:#f0f0f0;"></div><div style="left:595px;top:136px;width:42px;height:34px;border-right:1.5px solid #dedede;border-bottom:1.5px solid #dedede;box-sizing:border-box;"></div><div style="left:595px;top:141.5px;width:42px;text-align:center;height:23px;line-height:23px;font-family:'Liberation Sans', sans-serif;font-size:17px;font-weight:normal;color:#1e1e1e;white-space:nowrap;">1</div><div style="left:637px;top:136px;width:64px;height:34px;border-right:1.5px solid #dedede;border-bottom:1.5px solid #dedede;box-sizing:border-box;"></div><div style="left:660.0px;top:144.0px;width:18.0px;height:18.0px;background:linear-gradient(135deg,#dcdcdc,#f4f4f4);border:1px solid #b8c6dc;box-sizing:border-box;"></div><div style="left:663.0px;top:147.0px;width:12.0px;height:12.0px;border:1px solid #c8c8c8;box-sizing:border-box;background:linear-gradient(135deg,#e6e6e6,#fafafa);"></div><svg style="left:660.0px;top:144.0px;" width="18" height="18" viewBox="0 0 18 18"><path d="M4.5 8.5 L7.5 13 L13 4" fill="none" stroke="#3c5a8c" stroke-width="2.4"/></svg><div style="left:701px;top:136px;width:64px;height:34px;border-right:1.5px solid #dedede;border-bottom:1.5px solid #dedede;box-sizing:border-box;"></div><div style="left:724.0px;top:144.0px;width:18.0px;height:18.0px;background:linear-gradient(135deg,#dcdcdc,#f4f4f4);border:1px solid #b8c6dc;box-sizing:border-box;"></div><div style="left:727.0px;top:147.0px;width:12.0px;height:12.0px;border:1px solid #c8c8c8;box-sizing:border-box;background:linear-gradient(135deg,#e6e6e6,#fafafa);"></div><svg style="left:724.0px;top:144.0px;" width="18" height="18" viewBox="0 0 18 18"><path d="M4.5 8.5 L7.5 13 L13 4" fill="none" stroke="#3c5a8c" stroke-width="2.4"/></svg><div style="left:765px;top:136px;width:81px;height:34px;border-right:1.5px solid #dedede;border-bottom:1.5px solid #dedede;box-sizing:border-box;"></div><div style="left:772px;top:141.5px;height:23px;line-height:23px;font-family:'Liberation Sans', sans-serif;font-size:17px;font-weight:normal;color:#1e1e1e;white-space:nowrap;">316</div><div style="left:846px;top:136px;width:78px;height:34px;border-right:1.5px solid #dedede;border-bottom:1.5px solid #dedede;box-sizing:border-box;"></div><div style="left:853px;top:141.5px;height:23px;line-height:23px;font-family:'Liberation Sans', sans-serif;font-size:17px;font-weight:normal;color:#1e1e1e;white-space:nowrap;">460</div><div style="left:924px;top:136px;width:81px;height:34px;border-right:1.5px solid #dedede;border-bottom:1.5px solid #dedede;box-sizing:border-box;"></div><div style="left:931px;top:141.5px;height:23px;line-height:23px;font-family:'Liberation Sans', sans-serif;font-size:17px;font-weight:normal;color:#1e1e1e;white-space:nowrap;">473</div><div style="left:1005px;top:136px;width:81px;height:34px;border-right:1.5px solid #dedede;border-bottom:1.5px solid #dedede;box-sizing:border-box;"></div><div style="left:1012px;top:141.5px;height:23px;line-height:23px;font-family:'Liberation Sans', sans-serif;font-size:17px;font-weight:normal;color:#1e1e1e;white-space:nowrap;">678</div><div style="left:568px;top:170px;width:27px;height:34px;background:linear-gradient(90deg,#eaf1fa,#dbe6f4);border-left:2px solid #9fb3cf;border-right:1.5px solid #9fb3cf;border-bottom:2px solid #8aa2c4;box-sizing:border-box;"></div><div style="left:595px;top:170px;width:42px;height:34px;background:#f0f0f0;"></div><div style="left:595px;top:170px;width:42px;height:34px;border-right:1.5px solid #dedede;border-bottom:1.5px solid #dedede;box-sizing:border-box;"></div><div style="left:595px;top:175.5px;width:42px;text-align:center;height:23px;line-height:23px;font-family:'Liberation Sans', sans-serif;font-size:17px;font-weight:normal;color:#1e1e1e;white-space:nowrap;">2</div><div style="left:637px;top:170px;width:64px;height:34px;border-right:1.5px solid #dedede;border-bottom:1.5px solid #dedede;box-sizing:border-box;"></div><div style="left:660.0px;top:178.0px;width:18.0px;height:18.0px;background:linear-gradient(135deg,#dcdcdc,#f4f4f4);border:1px solid #b8c6dc;box-sizing:border-box;"></div><div style="left:663.0px;top:181.0px;width:12.0px;height:12.0px;border:1px solid #c8c8c8;box-sizing:border-box;background:linear-gradient(135deg,#e6e6e6,#fafafa);"></div><svg style="left:660.0px;top:178.0px;" width="18" height="18" viewBox="0 0 18 18"><path d="M4.5 8.5 L7.5 13 L13 4" fill="none" stroke="#3c5a8c" stroke-width="2.4"/></svg><div style="left:701px;top:170px;width:64px;height:34px;border-right:1.5px solid #dedede;border-bottom:1.5px solid #dedede;box-sizing:border-box;"></div><div style="left:724.0px;top:178.0px;width:18.0px;height:18.0px;background:linear-gradient(135deg,#dcdcdc,#f4f4f4);border:1px solid #b8c6dc;box-sizing:border-box;"></div><div style="left:727.0px;top:181.0px;width:12.0px;height:12.0px;border:1px solid #c8c8c8;box-sizing:border-box;background:linear-gradient(135deg,#e6e6e6,#fafafa);"></div><svg style="left:724.0px;top:178.0px;" width="18" height="18" viewBox="0 0 18 18"><path d="M4.5 8.5 L7.5 13 L13 4" fill="none" stroke="#3c5a8c" stroke-width="2.4"/></svg><div style="left:765px;top:170px;width:81px;height:34px;border-right:1.5px solid #dedede;border-bottom:1.5px solid #dedede;box-sizing:border-box;"></div><div style="left:772px;top:175.5px;height:23px;line-height:23px;font-family:'Liberation Sans', sans-serif;font-size:17px;font-weight:normal;color:#1e1e1e;white-space:nowrap;">332</div><div style="left:846px;top:170px;width:78px;height:34px;border-right:1.5px solid #dedede;border-bottom:1.5px solid #dedede;box-sizing:border-box;"></div><div style="left:853px;top:175.5px;height:23px;line-height:23px;font-family:'Liberation Sans', sans-serif;font-size:17px;font-weight:normal;color:#1e1e1e;white-space:nowrap;">422</div><div style="left:924px;top:170px;width:81px;height:34px;border-right:1.5px solid #dedede;border-bottom:1.5px solid #dedede;box-sizing:border-box;"></div><div style="left:931px;top:175.5px;height:23px;line-height:23px;font-family:'Liberation Sans', sans-serif;font-size:17px;font-weight:normal;color:#1e1e1e;white-space:nowrap;">678</div><div style="left:1005px;top:170px;width:81px;height:34px;border-right:1.5px solid #dedede;border-bottom:1.5px solid #dedede;box-sizing:border-box;"></div><div style="left:1012px;top:175.5px;height:23px;line-height:23px;font-family:'Liberation Sans', sans-serif;font-size:17px;font-weight:normal;color:#1e1e1e;white-space:nowrap;">1013</div><div style="left:568px;top:204px;width:27px;height:34px;background:linear-gradient(90deg,#eaf1fa,#dbe6f4);border-left:2px solid #9fb3cf;border-right:1.5px solid #9fb3cf;border-bottom:2px solid #8aa2c4;box-sizing:border-box;"></div><div style="left:595px;top:204px;width:42px;height:34px;background:#f0f0f0;"></div><div style="left:595px;top:204px;width:42px;height:34px;border-right:1.5px solid #dedede;border-bottom:1.5px solid #dedede;box-sizing:border-box;"></div><div style="left:595px;top:209.5px;width:42px;text-align:center;height:23px;line-height:23px;font-family:'Liberation Sans', sans-serif;font-size:17px;font-weight:normal;color:#1e1e1e;white-space:nowrap;">3</div><div style="left:637px;top:204px;width:64px;height:34px;border-right:1.5px solid #dedede;border-bottom:1.5px solid #dedede;box-sizing:border-box;"></div><div style="left:660.0px;top:212.0px;width:18.0px;height:18.0px;background:linear-gradient(135deg,#dcdcdc,#f4f4f4);border:1px solid #b8c6dc;box-sizing:border-box;"></div><div style="left:663.0px;top:215.0px;width:12.0px;height:12.0px;border:1px solid #c8c8c8;box-sizing:border-box;background:linear-gradient(135deg,#e6e6e6,#fafafa);"></div><svg style="left:660.0px;top:212.0px;" width="18" height="18" viewBox="0 0 18 18"><path d="M4.5 8.5 L7.5 13 L13 4" fill="none" stroke="#3c5a8c" stroke-width="2.4"/></svg><div style="left:701px;top:204px;width:64px;height:34px;border-right:1.5px solid #dedede;border-bottom:1.5px solid #dedede;box-sizing:border-box;"></div><div style="left:724.0px;top:212.0px;width:18.0px;height:18.0px;background:linear-gradient(135deg,#dcdcdc,#f4f4f4);border:1px solid #b8c6dc;box-sizing:border-box;"></div><div style="left:727.0px;top:215.0px;width:12.0px;height:12.0px;border:1px solid #c8c8c8;box-sizing:border-box;background:linear-gradient(135deg,#e6e6e6,#fafafa);"></div><svg style="left:724.0px;top:212.0px;" width="18" height="18" viewBox="0 0 18 18"><path d="M4.5 8.5 L7.5 13 L13 4" fill="none" stroke="#3c5a8c" stroke-width="2.4"/></svg><div style="left:765px;top:204px;width:81px;height:34px;border-right:1.5px solid #dedede;border-bottom:1.5px solid #dedede;box-sizing:border-box;"></div><div style="left:772px;top:209.5px;height:23px;line-height:23px;font-family:'Liberation Sans', sans-serif;font-size:17px;font-weight:normal;color:#1e1e1e;white-space:nowrap;">263</div><div style="left:846px;top:204px;width:78px;height:34px;border-right:1.5px solid #dedede;border-bottom:1.5px solid #dedede;box-sizing:border-box;"></div><div style="left:853px;top:209.5px;height:23px;line-height:23px;font-family:'Liberation Sans', sans-serif;font-size:17px;font-weight:normal;color:#1e1e1e;white-space:nowrap;">332</div><div style="left:924px;top:204px;width:81px;height:34px;border-right:1.5px solid #dedede;border-bottom:1.5px solid #dedede;box-sizing:border-box;"></div><div style="left:931px;top:209.5px;height:23px;line-height:23px;font-family:'Liberation Sans', sans-serif;font-size:17px;font-weight:normal;color:#1e1e1e;white-space:nowrap;">678</div><div style="left:1005px;top:204px;width:81px;height:34px;border-right:1.5px solid #dedede;border-bottom:1.5px solid #dedede;box-sizing:border-box;"></div><div style="left:1012px;top:209.5px;height:23px;line-height:23px;font-family:'Liberation Sans', sans-serif;font-size:17px;font-weight:normal;color:#1e1e1e;white-space:nowrap;">1013</div><div style="left:568px;top:238px;width:27px;height:34px;background:linear-gradient(90deg,#eaf1fa,#dbe6f4);border-left:2px solid #9fb3cf;border-right:1.5px solid #9fb3cf;border-bottom:2px solid #8aa2c4;box-sizing:border-box;"></div><div style="left:595px;top:238px;width:42px;height:34px;background:#f0f0f0;"></div><div style="left:595px;top:238px;width:42px;height:34px;border-right:1.5px solid #dedede;border-bottom:1.5px solid #dedede;box-sizing:border-box;"></div><div style="left:595px;top:243.5px;width:42px;text-align:center;height:23px;line-height:23px;font-family:'Liberation Sans', sans-serif;font-size:17px;font-weight:normal;color:#1e1e1e;white-space:nowrap;">4</div><div style="left:637px;top:238px;width:64px;height:34px;border-right:1.5px solid #dedede;border-bottom:1.5px solid #dedede;box-sizing:border-box;"></div><div style="left:660.0px;top:246.0px;width:18.0px;height:18.0px;background:linear-gradient(135deg,#dcdcdc,#f4f4f4);border:1px solid #b8c6dc;box-sizing:border-box;"></div><div style="left:663.0px;top:249.0px;width:12.0px;height:12.0px;border:1px solid #c8c8c8;box-sizing:border-box;background:linear-gradient(135deg,#e6e6e6,#fafafa);"></div><svg style="left:660.0px;top:246.0px;" width="18" height="18" viewBox="0 0 18 18"><path d="M4.5 8.5 L7.5 13 L13 4" fill="none" stroke="#3c5a8c" stroke-width="2.4"/></svg><div style="left:701px;top:238px;width:64px;height:34px;border-right:1.5px solid #dedede;border-bottom:1.5px solid #dedede;box-sizing:border-box;"></div><div style="left:724.0px;top:246.0px;width:18.0px;height:18.0px;background:linear-gradient(135deg,#dcdcdc,#f4f4f4);border:1px solid #b8c6dc;box-sizing:border-box;"></div><div style="left:727.0px;top:249.0px;width:12.0px;height:12.0px;border:1px solid #c8c8c8;box-sizing:border-box;background:linear-gradient(135deg,#e6e6e6,#fafafa);"></div><svg style="left:724.0px;top:246.0px;" width="18" height="18" viewBox="0 0 18 18"><path d="M4.5 8.5 L7.5 13 L13 4" fill="none" stroke="#3c5a8c" stroke-width="2.4"/></svg><div style="left:765px;top:238px;width:81px;height:34px;border-right:1.5px solid #dedede;border-bottom:1.5px solid #dedede;box-sizing:border-box;"></div><div style="left:772px;top:243.5px;height:23px;line-height:23px;font-family:'Liberation Sans', sans-serif;font-size:17px;font-weight:normal;color:#1e1e1e;white-space:nowrap;">314</div><div style="left:846px;top:238px;width:78px;height:34px;border-right:1.5px solid #dedede;border-bottom:1.5px solid #dedede;box-sizing:border-box;"></div><div style="left:853px;top:243.5px;height:23px;line-height:23px;font-family:'Liberation Sans', sans-serif;font-size:17px;font-weight:normal;color:#1e1e1e;white-space:nowrap;">388</div><div style="left:924px;top:238px;width:81px;height:34px;border-right:1.5px solid #dedede;border-bottom:1.5px solid #dedede;box-sizing:border-box;"></div><div style="left:931px;top:243.5px;height:23px;line-height:23px;font-family:'Liberation Sans', sans-serif;font-size:17px;font-weight:normal;color:#1e1e1e;white-space:nowrap;">1013</div><div style="left:1005px;top:238px;width:81px;height:34px;border-right:1.5px solid #dedede;border-bottom:1.5px solid #dedede;box-sizing:border-box;"></div><div style="left:1012px;top:243.5px;height:23px;line-height:23px;font-family:'Liberation Sans', sans-serif;font-size:17px;font-weight:normal;color:#1e1e1e;white-space:nowrap;">1379</div><div style="left:568px;top:272px;width:27px;height:34px;background:linear-gradient(90deg,#eaf1fa,#dbe6f4);border-left:2px solid #9fb3cf;border-right:1.5px solid #9fb3cf;border-bottom:2px solid #8aa2c4;box-sizing:border-box;"></div><div style="left:595px;top:272px;width:42px;height:34px;background:#f0f0f0;"></div><div style="left:595px;top:272px;width:42px;height:34px;border-right:1.5px solid #dedede;border-bottom:1.5px solid #dedede;box-sizing:border-box;"></div><div style="left:595px;top:277.5px;width:42px;text-align:center;height:23px;line-height:23px;font-family:'Liberation Sans', sans-serif;font-size:17px;font-weight:normal;color:#1e1e1e;white-space:nowrap;">5</div><div style="left:637px;top:272px;width:64px;height:34px;border-right:1.5px solid #dedede;border-bottom:1.5px solid #dedede;box-sizing:border-box;"></div><div style="left:660.0px;top:280.0px;width:18.0px;height:18.0px;background:linear-gradient(135deg,#dcdcdc,#f4f4f4);border:1px solid #b8c6dc;box-sizing:border-box;"></div><div style="left:663.0px;top:283.0px;width:12.0px;height:12.0px;border:1px solid #c8c8c8;box-sizing:border-box;background:linear-gradient(135deg,#e6e6e6,#fafafa);"></div><svg style="left:660.0px;top:280.0px;" width="18" height="18" viewBox="0 0 18 18"><path d="M4.5 8.5 L7.5 13 L13 4" fill="none" stroke="#3c5a8c" stroke-width="2.4"/></svg><div style="left:701px;top:272px;width:64px;height:34px;border-right:1.5px solid #dedede;border-bottom:1.5px solid #dedede;box-sizing:border-box;"></div><div style="left:724.0px;top:280.0px;width:18.0px;height:18.0px;background:linear-gradient(135deg,#dcdcdc,#f4f4f4);border:1px solid #b8c6dc;box-sizing:border-box;"></div><div style="left:727.0px;top:283.0px;width:12.0px;height:12.0px;border:1px solid #c8c8c8;box-sizing:border-box;background:linear-gradient(135deg,#e6e6e6,#fafafa);"></div><svg style="left:724.0px;top:280.0px;" width="18" height="18" viewBox="0 0 18 18"><path d="M4.5 8.5 L7.5 13 L13 4" fill="none" stroke="#3c5a8c" stroke-width="2.4"/></svg><div style="left:765px;top:272px;width:81px;height:34px;border-right:1.5px solid #dedede;border-bottom:1.5px solid #dedede;box-sizing:border-box;"></div><div style="left:772px;top:277.5px;height:23px;line-height:23px;font-family:'Liberation Sans', sans-serif;font-size:17px;font-weight:normal;color:#1e1e1e;white-space:nowrap;">256</div><div style="left:846px;top:272px;width:78px;height:34px;border-right:1.5px solid #dedede;border-bottom:1.5px solid #dedede;box-sizing:border-box;"></div><div style="left:853px;top:277.5px;height:23px;line-height:23px;font-family:'Liberation Sans', sans-serif;font-size:17px;font-weight:normal;color:#1e1e1e;white-space:nowrap;">314</div><div style="left:924px;top:272px;width:81px;height:34px;border-right:1.5px solid #dedede;border-bottom:1.5px solid #dedede;box-sizing:border-box;"></div><div style="left:931px;top:277.5px;height:23px;line-height:23px;font-family:'Liberation Sans', sans-serif;font-size:17px;font-weight:normal;color:#1e1e1e;white-space:nowrap;">1013</div><div style="left:1005px;top:272px;width:81px;height:34px;border-right:1.5px solid #dedede;border-bottom:1.5px solid #dedede;box-sizing:border-box;"></div><div style="left:1012px;top:277.5px;height:23px;line-height:23px;font-family:'Liberation Sans', sans-serif;font-size:17px;font-weight:normal;color:#1e1e1e;white-space:nowrap;">1379</div><div style="left:568px;top:306px;width:27px;height:34px;background:linear-gradient(90deg,#eaf1fa,#dbe6f4);border-left:2px solid #9fb3cf;border-right:1.5px solid #9fb3cf;border-bottom:2px solid #8aa2c4;box-sizing:border-box;"></div><div style="left:595px;top:306px;width:42px;height:34px;background:#f0f0f0;"></div><div style="left:595px;top:306px;width:42px;height:34px;border-right:1.5px solid #dedede;border-bottom:1.5px solid #dedede;box-sizing:border-box;"></div><div style="left:595px;top:311.5px;width:42px;text-align:center;height:23px;line-height:23px;font-family:'Liberation Sans', sans-serif;font-size:17px;font-weight:normal;color:#1e1e1e;white-space:nowrap;">6</div><div style="left:637px;top:306px;width:64px;height:34px;border-right:1.5px solid #dedede;border-bottom:1.5px solid #dedede;box-sizing:border-box;"></div><div style="left:660.0px;top:314.0px;width:18.0px;height:18.0px;background:linear-gradient(135deg,#dcdcdc,#f4f4f4);border:1px solid #b8c6dc;box-sizing:border-box;"></div><div style="left:663.0px;top:317.0px;width:12.0px;height:12.0px;border:1px solid #c8c8c8;box-sizing:border-box;background:linear-gradient(135deg,#e6e6e6,#fafafa);"></div><svg style="left:660.0px;top:314.0px;" width="18" height="18" viewBox="0 0 18 18"><path d="M4.5 8.5 L7.5 13 L13 4" fill="none" stroke="#3c5a8c" stroke-width="2.4"/></svg><div style="left:701px;top:306px;width:64px;height:34px;border-right:1.5px solid #dedede;border-bottom:1.5px solid #dedede;box-sizing:border-box;"></div><div style="left:724.0px;top:314.0px;width:18.0px;height:18.0px;background:linear-gradient(135deg,#dcdcdc,#f4f4f4);border:1px solid #b8c6dc;box-sizing:border-box;"></div><div style="left:727.0px;top:317.0px;width:12.0px;height:12.0px;border:1px solid #c8c8c8;box-sizing:border-box;background:linear-gradient(135deg,#e6e6e6,#fafafa);"></div><svg style="left:724.0px;top:314.0px;" width="18" height="18" viewBox="0 0 18 18"><path d="M4.5 8.5 L7.5 13 L13 4" fill="none" stroke="#3c5a8c" stroke-width="2.4"/></svg><div style="left:765px;top:306px;width:81px;height:34px;border-right:1.5px solid #dedede;border-bottom:1.5px solid #dedede;box-sizing:border-box;"></div><div style="left:772px;top:311.5px;height:23px;line-height:23px;font-family:'Liberation Sans', sans-serif;font-size:17px;font-weight:normal;color:#1e1e1e;white-space:nowrap;">320</div><div style="left:846px;top:306px;width:78px;height:34px;border-right:1.5px solid #dedede;border-bottom:1.5px solid #dedede;box-sizing:border-box;"></div><div style="left:853px;top:311.5px;height:23px;line-height:23px;font-family:'Liberation Sans', sans-serif;font-size:17px;font-weight:normal;color:#1e1e1e;white-space:nowrap;">382</div><div style="left:924px;top:306px;width:81px;height:34px;border-right:1.5px solid #dedede;border-bottom:1.5px solid #dedede;box-sizing:border-box;"></div><div style="left:931px;top:311.5px;height:23px;line-height:23px;font-family:'Liberation Sans', sans-serif;font-size:17px;font-weight:normal;color:#1e1e1e;white-space:nowrap;">1379</div><div style="left:1005px;top:306px;width:81px;height:34px;border-right:1.5px solid #dedede;border-bottom:1.5px solid #dedede;box-sizing:border-box;"></div><div style="left:1012px;top:311.5px;height:23px;line-height:23px;font-family:'Liberation Sans', sans-serif;font-size:17px;font-weight:normal;color:#1e1e1e;white-space:nowrap;">1677</div><div style="left:568px;top:340px;width:27px;height:34px;background:linear-gradient(90deg,#eaf1fa,#dbe6f4);border-left:2px solid #9fb3cf;border-right:1.5px solid #9fb3cf;border-bottom:2px solid #8aa2c4;box-sizing:border-box;"></div><div style="left:595px;top:340px;width:42px;height:34px;background:#f0f0f0;"></div><div style="left:595px;top:340px;width:42px;height:34px;border-right:1.5px solid #dedede;border-bottom:1.5px solid #dedede;box-sizing:border-box;"></div><div style="left:595px;top:345.5px;width:42px;text-align:center;height:23px;line-height:23px;font-family:'Liberation Sans', sans-serif;font-size:17px;font-weight:normal;color:#1e1e1e;white-space:nowrap;">7</div><div style="left:637px;top:340px;width:64px;height:34px;border-right:1.5px solid #dedede;border-bottom:1.5px solid #dedede;box-sizing:border-box;"></div><div style="left:660.0px;top:348.0px;width:18.0px;height:18.0px;background:linear-gradient(135deg,#dcdcdc,#f4f4f4);border:1px solid #b8c6dc;box-sizing:border-box;"></div><div style="left:663.0px;top:351.0px;width:12.0px;height:12.0px;border:1px solid #c8c8c8;box-sizing:border-box;background:linear-gradient(135deg,#e6e6e6,#fafafa);"></div><svg style="left:660.0px;top:348.0px;" width="18" height="18" viewBox="0 0 18 18"><path d="M4.5 8.5 L7.5 13 L13 4" fill="none" stroke="#3c5a8c" stroke-width="2.4"/></svg><div style="left:701px;top:340px;width:64px;height:34px;border-right:1.5px solid #dedede;border-bottom:1.5px solid #dedede;box-sizing:border-box;"></div><div style="left:724.0px;top:348.0px;width:18.0px;height:18.0px;background:linear-gradient(135deg,#dcdcdc,#f4f4f4);border:1px solid #b8c6dc;box-sizing:border-box;"></div><div style="left:727.0px;top:351.0px;width:12.0px;height:12.0px;border:1px solid #c8c8c8;box-sizing:border-box;background:linear-gradient(135deg,#e6e6e6,#fafafa);"></div><svg style="left:724.0px;top:348.0px;" width="18" height="18" viewBox="0 0 18 18"><path d="M4.5 8.5 L7.5 13 L13 4" fill="none" stroke="#3c5a8c" stroke-width="2.4"/></svg><div style="left:765px;top:340px;width:81px;height:34px;border-right:1.5px solid #dedede;border-bottom:1.5px solid #dedede;box-sizing:border-box;"></div><div style="left:772px;top:345.5px;height:23px;line-height:23px;font-family:'Liberation Sans', sans-serif;font-size:17px;font-weight:normal;color:#1e1e1e;white-space:nowrap;">256</div><div style="left:846px;top:340px;width:78px;height:34px;border-right:1.5px solid #dedede;border-bottom:1.5px solid #dedede;box-sizing:border-box;"></div><div style="left:853px;top:345.5px;height:23px;line-height:23px;font-family:'Liberation Sans', sans-serif;font-size:17px;font-weight:normal;color:#1e1e1e;white-space:nowrap;">320</div><div style="left:924px;top:340px;width:81px;height:34px;border-right:1.5px solid #dedede;border-bottom:1.5px solid #dedede;box-sizing:border-box;"></div><div style="left:931px;top:345.5px;height:23px;line-height:23px;font-family:'Liberation Sans', sans-serif;font-size:17px;font-weight:normal;color:#1e1e1e;white-space:nowrap;">1379</div><div style="left:1005px;top:340px;width:81px;height:34px;border-right:1.5px solid #dedede;border-bottom:1.5px solid #dedede;box-sizing:border-box;"></div><div style="left:1012px;top:345.5px;height:23px;line-height:23px;font-family:'Liberation Sans', sans-serif;font-size:17px;font-weight:normal;color:#1e1e1e;white-space:nowrap;">1677</div><div style="left:568px;top:374px;width:27px;height:34px;background:linear-gradient(90deg,#eaf1fa,#dbe6f4);border-left:2px solid #9fb3cf;border-right:1.5px solid #9fb3cf;border-bottom:2px solid #8aa2c4;box-sizing:border-box;"></div><div style="left:595px;top:374px;width:42px;height:34px;background:#f0f0f0;"></div><div style="left:595px;top:374px;width:42px;height:34px;border-right:1.5px solid #dedede;border-bottom:1.5px solid #dedede;box-sizing:border-box;"></div><div style="left:595px;top:379.5px;width:42px;text-align:center;height:23px;line-height:23px;font-family:'Liberation Sans', sans-serif;font-size:17px;font-weight:normal;color:#1e1e1e;white-space:nowrap;">8</div><div style="left:637px;top:374px;width:64px;height:34px;border-right:1.5px solid #dedede;border-bottom:1.5px solid #dedede;box-sizing:border-box;"></div><div style="left:660.0px;top:382.0px;width:18.0px;height:18.0px;background:linear-gradient(135deg,#dcdcdc,#f4f4f4);border:1px solid #b8c6dc;box-sizing:border-box;"></div><div style="left:663.0px;top:385.0px;width:12.0px;height:12.0px;border:1px solid #c8c8c8;box-sizing:border-box;background:linear-gradient(135deg,#e6e6e6,#fafafa);"></div><svg style="left:660.0px;top:382.0px;" width="18" height="18" viewBox="0 0 18 18"><path d="M4.5 8.5 L7.5 13 L13 4" fill="none" stroke="#3c5a8c" stroke-width="2.4"/></svg><div style="left:701px;top:374px;width:64px;height:34px;border-right:1.5px solid #dedede;border-bottom:1.5px solid #dedede;box-sizing:border-box;"></div><div style="left:724.0px;top:382.0px;width:18.0px;height:18.0px;background:linear-gradient(135deg,#dcdcdc,#f4f4f4);border:1px solid #b8c6dc;box-sizing:border-box;"></div><div style="left:727.0px;top:385.0px;width:12.0px;height:12.0px;border:1px solid #c8c8c8;box-sizing:border-box;background:linear-gradient(135deg,#e6e6e6,#fafafa);"></div><svg style="left:724.0px;top:382.0px;" width="18" height="18" viewBox="0 0 18 18"><path d="M4.5 8.5 L7.5 13 L13 4" fill="none" stroke="#3c5a8c" stroke-width="2.4"/></svg><div style="left:765px;top:374px;width:81px;height:34px;border-right:1.5px solid #dedede;border-bottom:1.5px solid #dedede;box-sizing:border-box;"></div><div style="left:772px;top:379.5px;height:23px;line-height:23px;font-family:'Liberation Sans', sans-serif;font-size:17px;font-weight:normal;color:#1e1e1e;white-space:nowrap;">276</div><div style="left:846px;top:374px;width:78px;height:34px;border-right:1.5px solid #dedede;border-bottom:1.5px solid #dedede;box-sizing:border-box;"></div><div style="left:853px;top:379.5px;height:23px;line-height:23px;font-family:'Liberation Sans', sans-serif;font-size:17px;font-weight:normal;color:#1e1e1e;white-space:nowrap;">402</div><div style="left:924px;top:374px;width:81px;height:34px;border-right:1.5px solid #dedede;border-bottom:1.5px solid #dedede;box-sizing:border-box;"></div><div style="left:931px;top:379.5px;height:23px;line-height:23px;font-family:'Liberation Sans', sans-serif;font-size:17px;font-weight:normal;color:#1e1e1e;white-space:nowrap;">1677</div><div style="left:1005px;top:374px;width:81px;height:34px;border-right:1.5px solid #dedede;border-bottom:1.5px solid #dedede;box-sizing:border-box;"></div><div style="left:1012px;top:379.5px;height:23px;line-height:23px;font-family:'Liberation Sans', sans-serif;font-size:17px;font-weight:normal;color:#1e1e1e;white-space:nowrap;">2337</div><div style="left:568px;top:408px;width:27px;height:34px;background:linear-gradient(90deg,#eaf1fa,#dbe6f4);border-left:2px solid #9fb3cf;border-right:1.5px solid #9fb3cf;border-bottom:2px solid #8aa2c4;box-sizing:border-box;"></div><div style="left:595px;top:408px;width:42px;height:34px;background:#f0f0f0;"></div><div style="left:595px;top:408px;width:42px;height:34px;border-right:1.5px solid #dedede;border-bottom:1.5px solid #dedede;box-sizing:border-box;"></div><div style="left:595px;top:413.5px;width:42px;text-align:center;height:23px;line-height:23px;font-family:'Liberation Sans', sans-serif;font-size:17px;font-weight:normal;color:#1e1e1e;white-space:nowrap;">9</div><div style="left:637px;top:408px;width:64px;height:34px;border-right:1.5px solid #dedede;border-bottom:1.5px solid #dedede;box-sizing:border-box;"></div><div style="left:660.0px;top:416.0px;width:18.0px;height:18.0px;background:linear-gradient(135deg,#dcdcdc,#f4f4f4);border:1px solid #b8c6dc;box-sizing:border-box;"></div><div style="left:663.0px;top:419.0px;width:12.0px;height:12.0px;border:1px solid #c8c8c8;box-sizing:border-box;background:linear-gradient(135deg,#e6e6e6,#fafafa);"></div><svg style="left:660.0px;top:416.0px;" width="18" height="18" viewBox="0 0 18 18"><path d="M4.5 8.5 L7.5 13 L13 4" fill="none" stroke="#3c5a8c" stroke-width="2.4"/></svg><div style="left:701px;top:408px;width:64px;height:34px;border-right:1.5px solid #dedede;border-bottom:1.5px solid #dedede;box-sizing:border-box;"></div><div style="left:724.0px;top:416.0px;width:18.0px;height:18.0px;background:linear-gradient(135deg,#dcdcdc,#f4f4f4);border:1px solid #b8c6dc;box-sizing:border-box;"></div><div style="left:727.0px;top:419.0px;width:12.0px;height:12.0px;border:1px solid #c8c8c8;box-sizing:border-box;background:linear-gradient(135deg,#e6e6e6,#fafafa);"></div><svg style="left:724.0px;top:416.0px;" width="18" height="18" viewBox="0 0 18 18"><path d="M4.5 8.5 L7.5 13 L13 4" fill="none" stroke="#3c5a8c" stroke-width="2.4"/></svg><div style="left:765px;top:408px;width:81px;height:34px;border-right:1.5px solid #dedede;border-bottom:1.5px solid #dedede;box-sizing:border-box;"></div><div style="left:772px;top:413.5px;height:23px;line-height:23px;font-family:'Liberation Sans', sans-serif;font-size:17px;font-weight:normal;color:#1e1e1e;white-space:nowrap;">276</div><div style="left:846px;top:408px;width:78px;height:34px;border-right:1.5px solid #dedede;border-bottom:1.5px solid #dedede;box-sizing:border-box;"></div><div style="left:853px;top:413.5px;height:23px;line-height:23px;font-family:'Liberation Sans', sans-serif;font-size:17px;font-weight:normal;color:#1e1e1e;white-space:nowrap;">402</div><div style="left:924px;top:408px;width:81px;height:34px;border-right:1.5px solid #dedede;border-bottom:1.5px solid #dedede;box-sizing:border-box;"></div><div style="left:931px;top:413.5px;height:23px;line-height:23px;font-family:'Liberation Sans', sans-serif;font-size:17px;font-weight:normal;color:#1e1e1e;white-space:nowrap;">1677</div><div style="left:1005px;top:408px;width:81px;height:34px;border-right:1.5px solid #dedede;border-bottom:1.5px solid #dedede;box-sizing:border-box;"></div><div style="left:1012px;top:413.5px;height:23px;line-height:23px;font-family:'Liberation Sans', sans-serif;font-size:17px;font-weight:normal;color:#1e1e1e;white-space:nowrap;">2337</div><div style="left:568px;top:442px;width:27px;height:34px;background:linear-gradient(90deg,#eaf1fa,#dbe6f4);border-left:2px solid #9fb3cf;border-right:1.5px solid #9fb3cf;border-bottom:2px solid #8aa2c4;box-sizing:border-box;"></div><div style="left:595px;top:442px;width:42px;height:34px;background:#f0f0f0;"></div><div style="left:595px;top:442px;width:42px;height:34px;border-right:1.5px solid #dedede;border-bottom:1.5px solid #dedede;box-sizing:border-box;"></div><div style="left:595px;top:447.5px;width:42px;text-align:center;height:23px;line-height:23px;font-family:'Liberation Sans', sans-serif;font-size:17px;font-weight:normal;color:#1e1e1e;white-space:nowrap;">10</div><div style="left:637px;top:442px;width:64px;height:34px;border-right:1.5px solid #dedede;border-bottom:1.5px solid #dedede;box-sizing:border-box;"></div><div style="left:660.0px;top:450.0px;width:18.0px;height:18.0px;background:linear-gradient(135deg,#dcdcdc,#f4f4f4);border:1px solid #b8c6dc;box-sizing:border-box;"></div><div style="left:663.0px;top:453.0px;width:12.0px;height:12.0px;border:1px solid #c8c8c8;box-sizing:border-box;background:linear-gradient(135deg,#e6e6e6,#fafafa);"></div><svg style="left:660.0px;top:450.0px;" width="18" height="18" viewBox="0 0 18 18"><path d="M4.5 8.5 L7.5 13 L13 4" fill="none" stroke="#3c5a8c" stroke-width="2.4"/></svg><div style="left:701px;top:442px;width:64px;height:34px;border-right:1.5px solid #dedede;border-bottom:1.5px solid #dedede;box-sizing:border-box;"></div><div style="left:724.0px;top:450.0px;width:18.0px;height:18.0px;background:linear-gradient(135deg,#dcdcdc,#f4f4f4);border:1px solid #b8c6dc;box-sizing:border-box;"></div><div style="left:727.0px;top:453.0px;width:12.0px;height:12.0px;border:1px solid #c8c8c8;box-sizing:border-box;background:linear-gradient(135deg,#e6e6e6,#fafafa);"></div><div style="left:765px;top:442px;width:81px;height:34px;border-right:1.5px solid #dedede;border-bottom:1.5px solid #dedede;box-sizing:border-box;"></div><div style="left:772px;top:447.5px;height:23px;line-height:23px;font-family:'Liberation Sans', sans-serif;font-size:17px;font-weight:normal;color:#1e1e1e;white-space:nowrap;">0</div><div style="left:846px;top:442px;width:78px;height:34px;border-right:1.5px solid #dedede;border-bottom:1.5px solid #dedede;box-sizing:border-box;"></div><div style="left:853px;top:447.5px;height:23px;line-height:23px;font-family:'Liberation Sans', sans-serif;font-size:17px;font-weight:normal;color:#1e1e1e;white-space:nowrap;">0</div><div style="left:924px;top:442px;width:81px;height:34px;border-right:1.5px solid #dedede;border-bottom:1.5px solid #dedede;box-sizing:border-box;"></div><div style="left:931px;top:447.5px;height:23px;line-height:23px;font-family:'Liberation Sans', sans-serif;font-size:17px;font-weight:normal;color:#1e1e1e;white-space:nowrap;">0</div><div style="left:1005px;top:442px;width:81px;height:34px;border-right:1.5px solid #dedede;border-bottom:1.5px solid #dedede;box-sizing:border-box;"></div><div style="left:1012px;top:447.5px;height:23px;line-height:23px;font-family:'Liberation Sans', sans-serif;font-size:17px;font-weight:normal;color:#1e1e1e;white-space:nowrap;">0</div><div style="left:568px;top:476px;width:27px;height:34px;background:linear-gradient(90deg,#eaf1fa,#dbe6f4);border-left:2px solid #9fb3cf;border-right:1.5px solid #9fb3cf;border-bottom:2px solid #8aa2c4;box-sizing:border-box;"></div><div style="left:595px;top:476px;width:42px;height:34px;background:#f0f0f0;"></div><div style="left:595px;top:476px;width:42px;height:34px;border-right:1.5px solid #dedede;border-bottom:1.5px solid #dedede;box-sizing:border-box;"></div><div style="left:595px;top:481.5px;width:42px;text-align:center;height:23px;line-height:23px;font-family:'Liberation Sans', sans-serif;font-size:17px;font-weight:normal;color:#1e1e1e;white-space:nowrap;">11</div><div style="left:637px;top:476px;width:64px;height:34px;border-right:1.5px solid #dedede;border-bottom:1.5px solid #dedede;box-sizing:border-box;"></div><div style="left:660.0px;top:484.0px;width:18.0px;height:18.0px;background:linear-gradient(135deg,#dcdcdc,#f4f4f4);border:1px solid #b8c6dc;box-sizing:border-box;"></div><div style="left:663.0px;top:487.0px;width:12.0px;height:12.0px;border:1px solid #c8c8c8;box-sizing:border-box;background:linear-gradient(135deg,#e6e6e6,#fafafa);"></div><svg style="left:660.0px;top:484.0px;" width="18" height="18" viewBox="0 0 18 18"><path d="M4.5 8.5 L7.5 13 L13 4" fill="none" stroke="#3c5a8c" stroke-width="2.4"/></svg><div style="left:701px;top:476px;width:64px;height:34px;border-right:1.5px solid #dedede;border-bottom:1.5px solid #dedede;box-sizing:border-box;"></div><div style="left:724.0px;top:484.0px;width:18.0px;height:18.0px;background:linear-gradient(135deg,#dcdcdc,#f4f4f4);border:1px solid #b8c6dc;box-sizing:border-box;"></div><div style="left:727.0px;top:487.0px;width:12.0px;height:12.0px;border:1px solid #c8c8c8;box-sizing:border-box;background:linear-gradient(135deg,#e6e6e6,#fafafa);"></div><div style="left:765px;top:476px;width:81px;height:34px;border-right:1.5px solid #dedede;border-bottom:1.5px solid #dedede;box-sizing:border-box;"></div><div style="left:772px;top:481.5px;height:23px;line-height:23px;font-family:'Liberation Sans', sans-serif;font-size:17px;font-weight:normal;color:#1e1e1e;white-space:nowrap;">0</div><div style="left:846px;top:476px;width:78px;height:34px;border-right:1.5px solid #dedede;border-bottom:1.5px solid #dedede;box-sizing:border-box;"></div><div style="left:853px;top:481.5px;height:23px;line-height:23px;font-family:'Liberation Sans', sans-serif;font-size:17px;font-weight:normal;color:#1e1e1e;white-space:nowrap;">0</div><div style="left:924px;top:476px;width:81px;height:34px;border-right:1.5px solid #dedede;border-bottom:1.5px solid #dedede;box-sizing:border-box;"></div><div style="left:931px;top:481.5px;height:23px;line-height:23px;font-family:'Liberation Sans', sans-serif;font-size:17px;font-weight:normal;color:#1e1e1e;white-space:nowrap;">0</div><div style="left:1005px;top:476px;width:81px;height:34px;border-right:1.5px solid #dedede;border-bottom:1.5px solid #dedede;box-sizing:border-box;"></div><div style="left:1012px;top:481.5px;height:23px;line-height:23px;font-family:'Liberation Sans', sans-serif;font-size:17px;font-weight:normal;color:#1e1e1e;white-space:nowrap;">0</div><div style="left:568px;top:510px;width:27px;height:34px;background:linear-gradient(90deg,#eaf1fa,#dbe6f4);border-left:2px solid #9fb3cf;border-right:1.5px solid #9fb3cf;border-bottom:2px solid #8aa2c4;box-sizing:border-box;"></div><div style="left:595px;top:510px;width:42px;height:34px;background:#f0f0f0;"></div><div style="left:595px;top:510px;width:42px;height:34px;border-right:1.5px solid #dedede;border-bottom:1.5px solid #dedede;box-sizing:border-box;"></div><div style="left:595px;top:515.5px;width:42px;text-align:center;height:23px;line-height:23px;font-family:'Liberation Sans', sans-serif;font-size:17px;font-weight:normal;color:#1e1e1e;white-space:nowrap;">12</div><div style="left:637px;top:510px;width:64px;height:34px;border-right:1.5px solid #dedede;border-bottom:1.5px solid #dedede;box-sizing:border-box;"></div><div style="left:660.0px;top:518.0px;width:18.0px;height:18.0px;background:linear-gradient(135deg,#dcdcdc,#f4f4f4);border:1px solid #b8c6dc;box-sizing:border-box;"></div><div style="left:663.0px;top:521.0px;width:12.0px;height:12.0px;border:1px solid #c8c8c8;box-sizing:border-box;background:linear-gradient(135deg,#e6e6e6,#fafafa);"></div><svg style="left:660.0px;top:518.0px;" width="18" height="18" viewBox="0 0 18 18"><path d="M4.5 8.5 L7.5 13 L13 4" fill="none" stroke="#3c5a8c" stroke-width="2.4"/></svg><div style="left:701px;top:510px;width:64px;height:34px;border-right:1.5px solid #dedede;border-bottom:1.5px solid #dedede;box-sizing:border-box;"></div><div style="left:724.0px;top:518.0px;width:18.0px;height:18.0px;background:linear-gradient(135deg,#dcdcdc,#f4f4f4);border:1px solid #b8c6dc;box-sizing:border-box;"></div><div style="left:727.0px;top:521.0px;width:12.0px;height:12.0px;border:1px solid #c8c8c8;box-sizing:border-box;background:linear-gradient(135deg,#e6e6e6,#fafafa);"></div><div style="left:765px;top:510px;width:81px;height:34px;border-right:1.5px solid #dedede;border-bottom:1.5px solid #dedede;box-sizing:border-box;"></div><div style="left:772px;top:515.5px;height:23px;line-height:23px;font-family:'Liberation Sans', sans-serif;font-size:17px;font-weight:normal;color:#1e1e1e;white-space:nowrap;">0</div><div style="left:846px;top:510px;width:78px;height:34px;border-right:1.5px solid #dedede;border-bottom:1.5px solid #dedede;box-sizing:border-box;"></div><div style="left:853px;top:515.5px;height:23px;line-height:23px;font-family:'Liberation Sans', sans-serif;font-size:17px;font-weight:normal;color:#1e1e1e;white-space:nowrap;">0</div><div style="left:924px;top:510px;width:81px;height:34px;border-right:1.5px solid #dedede;border-bottom:1.5px solid #dedede;box-sizing:border-box;"></div><div style="left:931px;top:515.5px;height:23px;line-height:23px;font-family:'Liberation Sans', sans-serif;font-size:17px;font-weight:normal;color:#1e1e1e;white-space:nowrap;">0</div><div style="left:1005px;top:510px;width:81px;height:34px;border-right:1.5px solid #dedede;border-bottom:1.5px solid #dedede;box-sizing:border-box;"></div><div style="left:1012px;top:515.5px;height:23px;line-height:23px;font-family:'Liberation Sans', sans-serif;font-size:17px;font-weight:normal;color:#1e1e1e;white-space:nowrap;">0</div><div style="left:568px;top:544px;width:27px;height:34px;background:linear-gradient(90deg,#eaf1fa,#dbe6f4);border-left:2px solid #9fb3cf;border-right:1.5px solid #9fb3cf;border-bottom:2px solid #8aa2c4;box-sizing:border-box;"></div><div style="left:595px;top:544px;width:42px;height:34px;background:#f0f0f0;"></div><div style="left:595px;top:544px;width:42px;height:34px;border-right:1.5px solid #dedede;border-bottom:1.5px solid #dedede;box-sizing:border-box;"></div><div style="left:595px;top:549.5px;width:42px;text-align:center;height:23px;line-height:23px;font-family:'Liberation Sans', sans-serif;font-size:17px;font-weight:normal;color:#1e1e1e;white-space:nowrap;">13</div><div style="left:637px;top:544px;width:64px;height:34px;border-right:1.5px solid #dedede;border-bottom:1.5px solid #dedede;box-sizing:border-box;"></div><div style="left:660.0px;top:552.0px;width:18.0px;height:18.0px;background:linear-gradient(135deg,#dcdcdc,#f4f4f4);border:1px solid #b8c6dc;box-sizing:border-box;"></div><div style="left:663.0px;top:555.0px;width:12.0px;height:12.0px;border:1px solid #c8c8c8;box-sizing:border-box;background:linear-gradient(135deg,#e6e6e6,#fafafa);"></div><svg style="left:660.0px;top:552.0px;" width="18" height="18" viewBox="0 0 18 18"><path d="M4.5 8.5 L7.5 13 L13 4" fill="none" stroke="#3c5a8c" stroke-width="2.4"/></svg><div style="left:701px;top:544px;width:64px;height:34px;border-right:1.5px solid #dedede;border-bottom:1.5px solid #dedede;box-sizing:border-box;"></div><div style="left:724.0px;top:552.0px;width:18.0px;height:18.0px;background:linear-gradient(135deg,#dcdcdc,#f4f4f4);border:1px solid #b8c6dc;box-sizing:border-box;"></div><div style="left:727.0px;top:555.0px;width:12.0px;height:12.0px;border:1px solid #c8c8c8;box-sizing:border-box;background:linear-gradient(135deg,#e6e6e6,#fafafa);"></div><div style="left:765px;top:544px;width:81px;height:34px;border-right:1.5px solid #dedede;border-bottom:1.5px solid #dedede;box-sizing:border-box;"></div><div style="left:772px;top:549.5px;height:23px;line-height:23px;font-family:'Liberation Sans', sans-serif;font-size:17px;font-weight:normal;color:#1e1e1e;white-space:nowrap;">0</div><div style="left:846px;top:544px;width:78px;height:34px;border-right:1.5px solid #dedede;border-bottom:1.5px solid #dedede;box-sizing:border-box;"></div><div style="left:853px;top:549.5px;height:23px;line-height:23px;font-family:'Liberation Sans', sans-serif;font-size:17px;font-weight:normal;color:#1e1e1e;white-space:nowrap;">0</div><div style="left:924px;top:544px;width:81px;height:34px;border-right:1.5px solid #dedede;border-bottom:1.5px solid #dedede;box-sizing:border-box;"></div><div style="left:931px;top:549.5px;height:23px;line-height:23px;font-family:'Liberation Sans', sans-serif;font-size:17px;font-weight:normal;color:#1e1e1e;white-space:nowrap;">0</div><div style="left:1005px;top:544px;width:81px;height:34px;border-right:1.5px solid #dedede;border-bottom:1.5px solid #dedede;box-sizing:border-box;"></div><div style="left:1012px;top:549.5px;height:23px;line-height:23px;font-family:'Liberation Sans', sans-serif;font-size:17px;font-weight:normal;color:#1e1e1e;white-space:nowrap;">0</div><div style="left:568px;top:578px;width:27px;height:34px;background:linear-gradient(90deg,#eaf1fa,#dbe6f4);border-left:2px solid #9fb3cf;border-right:1.5px solid #9fb3cf;border-bottom:2px solid #8aa2c4;box-sizing:border-box;"></div><div style="left:595px;top:578px;width:42px;height:34px;background:#f0f0f0;"></div><div style="left:595px;top:578px;width:42px;height:34px;border-right:1.5px solid #dedede;border-bottom:1.5px solid #dedede;box-sizing:border-box;"></div><div style="left:595px;top:583.5px;width:42px;text-align:center;height:23px;line-height:23px;font-family:'Liberation Sans', sans-serif;font-size:17px;font-weight:normal;color:#1e1e1e;white-space:nowrap;">14</div><div style="left:637px;top:578px;width:64px;height:34px;border-right:1.5px solid #dedede;border-bottom:1.5px solid #dedede;box-sizing:border-box;"></div><div style="left:660.0px;top:586.0px;width:18.0px;height:18.0px;background:linear-gradient(135deg,#dcdcdc,#f4f4f4);border:1px solid #b8c6dc;box-sizing:border-box;"></div><div style="left:663.0px;top:589.0px;width:12.0px;height:12.0px;border:1px solid #c8c8c8;box-sizing:border-box;background:linear-gradient(135deg,#e6e6e6,#fafafa);"></div><svg style="left:660.0px;top:586.0px;" width="18" height="18" viewBox="0 0 18 18"><path d="M4.5 8.5 L7.5 13 L13 4" fill="none" stroke="#3c5a8c" stroke-width="2.4"/></svg><div style="left:701px;top:578px;width:64px;height:34px;border-right:1.5px solid #dedede;border-bottom:1.5px solid #dedede;box-sizing:border-box;"></div><div style="left:724.0px;top:586.0px;width:18.0px;height:18.0px;background:linear-gradient(135deg,#dcdcdc,#f4f4f4);border:1px solid #b8c6dc;box-sizing:border-box;"></div><div style="left:727.0px;top:589.0px;width:12.0px;height:12.0px;border:1px solid #c8c8c8;box-sizing:border-box;background:linear-gradient(135deg,#e6e6e6,#fafafa);"></div><div style="left:765px;top:578px;width:81px;height:34px;border-right:1.5px solid #dedede;border-bottom:1.5px solid #dedede;box-sizing:border-box;"></div><div style="left:772px;top:583.5px;height:23px;line-height:23px;font-family:'Liberation Sans', sans-serif;font-size:17px;font-weight:normal;color:#1e1e1e;white-space:nowrap;">0</div><div style="left:846px;top:578px;width:78px;height:34px;border-right:1.5px solid #dedede;border-bottom:1.5px solid #dedede;box-sizing:border-box;"></div><div style="left:853px;top:583.5px;height:23px;line-height:23px;font-family:'Liberation Sans', sans-serif;font-size:17px;font-weight:normal;color:#1e1e1e;white-space:nowrap;">0</div><div style="left:924px;top:578px;width:81px;height:34px;border-right:1.5px solid #dedede;border-bottom:1.5px solid #dedede;box-sizing:border-box;"></div><div style="left:931px;top:583.5px;height:23px;line-height:23px;font-family:'Liberation Sans', sans-serif;font-size:17px;font-weight:normal;color:#1e1e1e;white-space:nowrap;">0</div><div style="left:1005px;top:578px;width:81px;height:34px;border-right:1.5px solid #dedede;border-bottom:1.5px solid #dedede;box-sizing:border-box;"></div><div style="left:1012px;top:583.5px;height:23px;line-height:23px;font-family:'Liberation Sans', sans-serif;font-size:17px;font-weight:normal;color:#1e1e1e;white-space:nowrap;">0</div><div style="left:568px;top:612px;width:27px;height:34px;background:linear-gradient(90deg,#eaf1fa,#dbe6f4);border-left:2px solid #9fb3cf;border-right:1.5px solid #9fb3cf;border-bottom:2px solid #8aa2c4;box-sizing:border-box;"></div><div style="left:595px;top:612px;width:42px;height:34px;background:#f0f0f0;"></div><div style="left:595px;top:612px;width:42px;height:34px;border-right:1.5px solid #dedede;border-bottom:1.5px solid #dedede;box-sizing:border-box;"></div><div style="left:595px;top:617.5px;width:42px;text-align:center;height:23px;line-height:23px;font-family:'Liberation Sans', sans-serif;font-size:17px;font-weight:normal;color:#1e1e1e;white-space:nowrap;">15</div><div style="left:637px;top:612px;width:64px;height:34px;border-right:1.5px solid #dedede;border-bottom:1.5px solid #dedede;box-sizing:border-box;"></div><div style="left:660.0px;top:620.0px;width:18.0px;height:18.0px;background:linear-gradient(135deg,#dcdcdc,#f4f4f4);border:1px solid #b8c6dc;box-sizing:border-box;"></div><div style="left:663.0px;top:623.0px;width:12.0px;height:12.0px;border:1px solid #c8c8c8;box-sizing:border-box;background:linear-gradient(135deg,#e6e6e6,#fafafa);"></div><svg style="left:660.0px;top:620.0px;" width="18" height="18" viewBox="0 0 18 18"><path d="M4.5 8.5 L7.5 13 L13 4" fill="none" stroke="#3c5a8c" stroke-width="2.4"/></svg><div style="left:701px;top:612px;width:64px;height:34px;border-right:1.5px solid #dedede;border-bottom:1.5px solid #dedede;box-sizing:border-box;"></div><div style="left:724.0px;top:620.0px;width:18.0px;height:18.0px;background:linear-gradient(135deg,#dcdcdc,#f4f4f4);border:1px solid #b8c6dc;box-sizing:border-box;"></div><div style="left:727.0px;top:623.0px;width:12.0px;height:12.0px;border:1px solid #c8c8c8;box-sizing:border-box;background:linear-gradient(135deg,#e6e6e6,#fafafa);"></div><div style="left:765px;top:612px;width:81px;height:34px;border-right:1.5px solid #dedede;border-bottom:1.5px solid #dedede;box-sizing:border-box;"></div><div style="left:772px;top:617.5px;height:23px;line-height:23px;font-family:'Liberation Sans', sans-serif;font-size:17px;font-weight:normal;color:#1e1e1e;white-space:nowrap;">0</div><div style="left:846px;top:612px;width:78px;height:34px;border-right:1.5px solid #dedede;border-bottom:1.5px solid #dedede;box-sizing:border-box;"></div><div style="left:853px;top:617.5px;height:23px;line-height:23px;font-family:'Liberation Sans', sans-serif;font-size:17px;font-weight:normal;color:#1e1e1e;white-space:nowrap;">0</div><div style="left:924px;top:612px;width:81px;height:34px;border-right:1.5px solid #dedede;border-bottom:1.5px solid #dedede;box-sizing:border-box;"></div><div style="left:931px;top:617.5px;height:23px;line-height:23px;font-family:'Liberation Sans', sans-serif;font-size:17px;font-weight:normal;color:#1e1e1e;white-space:nowrap;">0</div><div style="left:1005px;top:612px;width:81px;height:34px;border-right:1.5px solid #dedede;border-bottom:1.5px solid #dedede;box-sizing:border-box;"></div><div style="left:1012px;top:617.5px;height:23px;line-height:23px;font-family:'Liberation Sans', sans-serif;font-size:17px;font-weight:normal;color:#1e1e1e;white-space:nowrap;">0</div><div style="left:568px;top:646px;width:27px;height:34px;background:linear-gradient(90deg,#eaf1fa,#dbe6f4);border-left:2px solid #9fb3cf;border-right:1.5px solid #9fb3cf;border-bottom:2px solid #8aa2c4;box-sizing:border-box;"></div><div style="left:595px;top:646px;width:42px;height:34px;background:#f0f0f0;"></div><div style="left:595px;top:646px;width:42px;height:34px;border-right:1.5px solid #dedede;border-bottom:1.5px solid #dedede;box-sizing:border-box;"></div><div style="left:595px;top:651.5px;width:42px;text-align:center;height:23px;line-height:23px;font-family:'Liberation Sans', sans-serif;font-size:17px;font-weight:normal;color:#1e1e1e;white-space:nowrap;">G</div><div style="left:637px;top:646px;width:64px;height:34px;border-right:1.5px solid #dedede;border-bottom:1.5px solid #dedede;box-sizing:border-box;"></div><div style="left:660.0px;top:654.0px;width:18.0px;height:18.0px;background:linear-gradient(135deg,#dcdcdc,#f4f4f4);border:1px solid #b8c6dc;box-sizing:border-box;"></div><div style="left:663.0px;top:657.0px;width:12.0px;height:12.0px;border:1px solid #c8c8c8;box-sizing:border-box;background:linear-gradient(135deg,#e6e6e6,#fafafa);"></div><svg style="left:660.0px;top:654.0px;" width="18" height="18" viewBox="0 0 18 18"><path d="M4.5 8.5 L7.5 13 L13 4" fill="none" stroke="#3c5a8c" stroke-width="2.4"/></svg><div style="left:701px;top:646px;width:64px;height:34px;border-right:1.5px solid #dedede;border-bottom:1.5px solid #dedede;box-sizing:border-box;"></div><div style="left:724.0px;top:654.0px;width:18.0px;height:18.0px;background:linear-gradient(135deg,#dcdcdc,#f4f4f4);border:1px solid #b8c6dc;box-sizing:border-box;"></div><div style="left:727.0px;top:657.0px;width:12.0px;height:12.0px;border:1px solid #c8c8c8;box-sizing:border-box;background:linear-gradient(135deg,#e6e6e6,#fafafa);"></div><svg style="left:724.0px;top:654.0px;" width="18" height="18" viewBox="0 0 18 18"><path d="M4.5 8.5 L7.5 13 L13 4" fill="none" stroke="#3c5a8c" stroke-width="2.4"/></svg><div style="left:765px;top:646px;width:81px;height:34px;border-right:1.5px solid #dedede;border-bottom:1.5px solid #dedede;box-sizing:border-box;"></div><div style="left:772px;top:651.5px;height:23px;line-height:23px;font-family:'Liberation Sans', sans-serif;font-size:17px;font-weight:normal;color:#1e1e1e;white-space:nowrap;">71</div><div style="left:846px;top:646px;width:78px;height:34px;border-right:1.5px solid #dedede;border-bottom:1.5px solid #dedede;box-sizing:border-box;"></div><div style="left:853px;top:651.5px;height:23px;line-height:23px;font-family:'Liberation Sans', sans-serif;font-size:17px;font-weight:normal;color:#1e1e1e;white-space:nowrap;">216</div><div style="left:924px;top:646px;width:81px;height:34px;border-right:1.5px solid #dedede;border-bottom:1.5px solid #dedede;box-sizing:border-box;"></div><div style="left:931px;top:651.5px;height:23px;line-height:23px;font-family:'Liberation Sans', sans-serif;font-size:17px;font-weight:normal;color:#1e1e1e;white-space:nowrap;">707</div><div style="left:1005px;top:646px;width:81px;height:34px;border-right:1.5px solid #dedede;border-bottom:1.5px solid #dedede;box-sizing:border-box;"></div><div style="left:1012px;top:651.5px;height:23px;line-height:23px;font-family:'Liberation Sans', sans-serif;font-size:17px;font-weight:normal;color:#1e1e1e;white-space:nowrap;">1449</div><div style="left:568px;top:69px;width:518px;height:611px;border:1.5px solid #d4d8de;border-left:none;border-top:1.5px solid #a6b9d4;box-sizing:border-box;"></div><div style="left:1084.5px;top:69px;width:1.5px;height:33px;background:#a6b9d4;"></div><div style="left:564px;top:703px;width:527px;height:380px;border:1px solid #d5d5d5;box-sizing:border-box;"></div><div style="left:571px;top:699px;width:184.5px;height:8px;background:#f0f0f0;"></div><div class="lb" style="left:573.5px;top:689.0px;height:24px;line-height:24px;color:#1a1a1a;-webkit-text-stroke:0.6px #1a1a1a;"><i class="c"><i class="s" style="transform:scaleX(0.68)">C</i></i><i class="c">a</i><i class="c">l</i><i class="c">i</i><i class="c"><i class="s" style="transform:scaleX(0.91)">b</i></i><i class="c">r</i><i class="c">a</i><i class="c">t</i><i class="c">e</i><i class="c"> </i><i class="c"><i class="s" style="transform:scaleX(0.82)">F</i></i><i class="c">i</i><i class="c">l</i><i class="c">e</i><i class="c">s</i><i class="c"> </i><i class="c"><i class="s" style="transform:scaleX(0.82)">P</i></i><i class="c">a</i><i class="c"><i class="s" style="transform:scaleX(0.91)">n</i></i><i class="c">e</i><i class="c">l</i></div><div style="left:579px;top:718px;width:430px;height:27px;background:#f0f0f0;border:1.6px solid #c3cedf;box-sizing:border-box;"></div><div style="left:1018px;top:716px;width:55px;height:32px;background:#ff69b4;border:1px solid #c8c8c8;border-radius:3px;box-sizing:border-box;"></div><div style="left:1018px;top:720.0px;width:55px;text-align:center;height:23px;line-height:23px;font-family:'Liberation Sans', sans-serif;font-size:17px;font-weight:normal;color:#f3c8d8;white-space:nowrap;">A</div><div style="left:579px;top:758px;width:430px;height:27px;background:#f0f0f0;border:1.6px solid #c3cedf;box-sizing:border-box;"></div><div style="left:1018px;top:756px;width:55px;height:32px;background:#ffa500;border:1px solid #c8c8c8;border-radius:3px;box-sizing:border-box;"></div><div style="left:1018px;top:760.0px;width:55px;text-align:center;height:23px;line-height:23px;font-family:'Liberation Sans', sans-serif;font-size:17px;font-weight:normal;color:#f3d2b4;white-space:nowrap;">C</div><div style="left:579px;top:797px;width:430px;height:27px;background:#f0f0f0;border:1.6px solid #c3cedf;box-sizing:border-box;"></div><div style="left:1018px;top:795px;width:55px;height:32px;background:#ffff00;border:1px solid #c8c8c8;border-radius:3px;box-sizing:border-box;"></div><div style="left:1018px;top:799.0px;width:55px;text-align:center;height:23px;line-height:23px;font-family:'Liberation Sans', sans-serif;font-size:17px;font-weight:normal;color:#2a6a2a;white-space:nowrap;">T</div><div style="left:579px;top:837px;width:430px;height:27px;background:#f0f0f0;border:1.6px solid #c3cedf;box-sizing:border-box;"></div><div style="left:1018px;top:835px;width:55px;height:32px;background:#008000;border:1px solid #c8c8c8;border-radius:3px;box-sizing:border-box;"></div><div style="left:1018px;top:839.0px;width:55px;text-align:center;height:23px;line-height:23px;font-family:'Liberation Sans', sans-serif;font-size:17px;font-weight:normal;color:#d2c4c8;white-space:nowrap;">H</div><div style="left:579px;top:876px;width:430px;height:27px;background:#f0f0f0;border:1.6px solid #c3cedf;box-sizing:border-box;"></div><div style="left:1018px;top:874px;width:55px;height:32px;background:#00ffff;border:1px solid #c8c8c8;border-radius:3px;box-sizing:border-box;"></div><div style="left:1018px;top:878.0px;width:55px;text-align:center;height:23px;line-height:23px;font-family:'Liberation Sans', sans-serif;font-size:17px;font-weight:normal;color:#1a7e90;white-space:nowrap;">D50</div><div style="left:579px;top:916px;width:430px;height:27px;background:#f0f0f0;border:1.6px solid #c3cedf;box-sizing:border-box;"></div><div style="left:1018px;top:914px;width:55px;height:32px;background:#0000ff;border:1px solid #c8c8c8;border-radius:3px;box-sizing:border-box;"></div><div style="left:1018px;top:918.0px;width:55px;text-align:center;height:23px;line-height:23px;font-family:'Liberation Sans', sans-serif;font-size:17px;font-weight:normal;color:#c8c8f4;white-space:nowrap;">D65</div><div style="left:579px;top:956px;width:430px;height:27px;background:#f0f0f0;border:1.6px solid #c3cedf;box-sizing:border-box;"></div><div style="left:1018px;top:954px;width:55px;height:32px;background:#800080;border:1px solid #c8c8c8;border-radius:3px;box-sizing:border-box;"></div><div style="left:1018px;top:958.0px;width:55px;text-align:center;height:23px;line-height:23px;font-family:'Liberation Sans', sans-serif;font-size:17px;font-weight:normal;color:#d8c8d8;white-space:nowrap;">D75</div><div class="lb" style="left:580.5px;top:998.0px;height:24px;line-height:24px;color:#222222;-webkit-text-stroke:0.6px #222222;"><i class="c"><i class="s" style="transform:scaleX(0.82)">P</i></i><i class="c">e</i><i class="c">r</i><i class="c">c</i><i class="c">e</i><i class="c"><i class="s" style="transform:scaleX(0.91)">n</i></i><i class="c">t</i><i class="c">a</i><i class="c"><i class="s" style="transform:scaleX(0.91)">g</i></i><i class="c">e</i></div><div style="left:678px;top:996px;width:331px;height:28px;background:#bcd0ea;"></div><div style="left:681px;top:1007px;width:326px;height:5px;background:#86a9dc;"></div><div style="left:739px;top:998px;width:15px;height:25px;background:linear-gradient(90deg,#eef2f7,#d9e1eb);border:1px solid #c4cfdc;box-sizing:border-box;"></div><div class="lb" style="left:1018.5px;top:998.0px;height:24px;line-height:24px;color:#222222;-webkit-text-stroke:0.6px #222222;"><i class="c"><i class="s" style="transform:scaleX(0.91)">2</i></i><i class="c"><i class="s" style="transform:scaleX(0.91)">0</i></i><i class="c"><i class="s" style="transform:scaleX(0.78);font-family:Liberation Mono,monospace;font-size:17px">%</i></i></div><div style="left:581px;top:1035px;width:127px;height:35px;background:linear-gradient(#e9f1fb,#d3e1f3);border:1.5px solid #a9bcd6;border-radius:3px;box-sizing:border-box;"></div><div style="left:581px;top:1041.0px;width:127px;text-align:center;height:23px;line-height:23px;font-family:'Liberation Sans', sans-serif;font-size:17px;font-weight:normal;color:#1e2a3a;white-space:nowrap;">Optimize</div><div style="left:812px;top:1035px;width:127px;height:35px;background:linear-gradient(#e9f1fb,#d3e1f3);border:1.5px solid #a9bcd6;border-radius:3px;box-sizing:border-box;"></div><div style="left:812px;top:1041.0px;width:127px;text-align:center;height:23px;line-height:23px;font-family:'Liberation Sans', sans-serif;font-size:17px;font-weight:normal;color:#1e2a3a;white-space:nowrap;">Load Config</div><div style="left:950px;top:1035px;width:127px;height:35px;background:#f0f0f0;border:1.5px solid #c4c4c4;border-radius:3px;box-sizing:border-box;"></div><div style="left:950px;top:1041.0px;width:127px;text-align:center;height:23px;line-height:23px;font-family:'Liberation Sans', sans-serif;font-size:17px;font-weight:normal;color:#a8a8a8;white-space:nowrap;">Save Config</div><div style="left:563px;top:1105px;width:527px;height:243px;border:1px solid #d5d5d5;box-sizing:border-box;"></div><div class="lb" style="left:584.5px;top:1125.0px;height:24px;line-height:24px;color:#222222;-webkit-text-stroke:0.6px #222222;"><i class="c">I</i><i class="c"><i class="s" style="transform:scaleX(0.78);font-family:Liberation Mono,monospace;font-size:17px">m</i></i><i class="c">a</i><i class="c"><i class="s" style="transform:scaleX(0.91)">g</i></i><i class="c">e</i><i class="c"> </i><i class="c"><i class="s" style="transform:scaleX(0.78);font-family:Liberation Mono,monospace;font-size:17px">W</i></i><i class="c">i</i><i class="c"><i class="s" style="transform:scaleX(0.91)">d</i></i><i class="c">t</i><i class="c"><i class="s" style="transform:scaleX(0.91)">h</i></i></div><div style="left:749px;top:1122px;width:99px;height:28px;background:#f0f0f0;border:1.6px solid #c3cedf;box-sizing:border-box;"></div><div class="lb" style="left:855.5px;top:1125.0px;height:24px;line-height:24px;color:#222222;-webkit-text-stroke:0.6px #222222;"><i class="c">I</i><i class="c"><i class="s" style="transform:scaleX(0.78);font-family:Liberation Mono,monospace;font-size:17px">m</i></i><i class="c">a</i><i class="c"><i class="s" style="transform:scaleX(0.91)">g</i></i><i class="c">e</i><i class="c"> </i><i class="c"><i class="s" style="transform:scaleX(0.78);font-family:Liberation Mono,monospace;font-size:17px">H</i></i><i class="c">e</i><i class="c">i</i><i class="c"><i class="s" style="transform:scaleX(0.91)">g</i></i><i class="c"><i class="s" style="transform:scaleX(0.91)">h</i></i><i class="c">t</i></div><div style="left:978px;top:1122px;width:99px;height:28px;background:#f0f0f0;border:1.6px solid #c3cedf;box-sizing:border-box;"></div><div class="lb" style="left:584.5px;top:1167.0px;height:24px;line-height:24px;color:#222222;-webkit-text-stroke:0.6px #222222;"><i class="c"><i class="s" style="transform:scaleX(0.68)">B</i></i><i class="c">l</i><i class="c">a</i><i class="c">c</i><i class="c"><i class="s" style="transform:scaleX(0.91)">k</i></i><i class="c"> </i><i class="c"><i class="s" style="transform:scaleX(0.75)">L</i></i><i class="c">e</i><i class="c"><i class="s" style="transform:scaleX(0.91)">v</i></i><i class="c">e</i><i class="c">l</i><i class="c">(</i><i class="c"><i class="s" style="transform:scaleX(0.91)">1</i></i><i class="c"><i class="s" style="transform:scaleX(0.91)">0</i></i><i class="c"><i class="s" style="transform:scaleX(0.91)">b</i></i><i class="c">i</i><i class="c">t</i><i class="c">)</i></div><div style="left:749px;top:1164px;width:99px;height:28px;background:#f0f0f0;border:1.6px solid #c3cedf;box-sizing:border-box;"></div><div class="lb" style="left:855.5px;top:1167.0px;height:24px;line-height:24px;color:#222222;-webkit-text-stroke:0.6px #222222;"><i class="c"><i class="s" style="transform:scaleX(0.68)">R</i></i><i class="c">a</i><i class="c"><i class="s" style="transform:scaleX(0.78);font-family:Liberation Mono,monospace;font-size:17px">w</i></i><i class="c"> </i><i class="c"><i class="s" style="transform:scaleX(0.68)">B</i></i><i class="c">i</i><i class="c">t</i><i class="c"> </i><i class="c"><i class="s" style="transform:scaleX(0.78);font-family:Liberation Mono,monospace;font-size:17px">D</i></i><i class="c">e</i><i class="c"><i class="s" style="transform:scaleX(0.91)">p</i></i><i class="c">t</i><i class="c"><i class="s" style="transform:scaleX(0.91)">h</i></i></div><div style="left:978px;top:1164px;width:99px;height:28px;background:#f0f0f0;border:1.6px solid #c3cedf;box-sizing:border-box;"></div><div style="left:577px;top:1211px;width:499px;height:67px;border:1px solid #d5d5d5;box-sizing:border-box;"></div><div style="left:585px;top:1207px;width:108.0px;height:8px;background:#f0f0f0;"></div><div class="lb" style="left:587.5px;top:1197.0px;height:24px;line-height:24px;color:#a0a0a0;-webkit-text-stroke:0.6px #a0a0a0;"><i class="c"><i class="s" style="transform:scaleX(0.68)">B</i></i><i class="c">a</i><i class="c"><i class="s" style="transform:scaleX(0.91)">y</i></i><i class="c">e</i><i class="c">r</i><i class="c"> </i><i class="c"><i class="s" style="transform:scaleX(0.82)">P</i></i><i class="c">a</i><i class="c">t</i><i class="c">t</i><i class="c">e</i><i class="c"><i class="s" style="transform:scaleX(0.91)">n</i></i></div><div style="left:605px;top:1239px;width:18px;height:18px;border-radius:50%;background:radial-gradient(circle at 40% 35%,#ffffff,#e4e4e4);border:1px solid #b4b4b4;box-sizing:border-box;"></div><div style="left:636px;top:1230px;width:17px;height:17px;background:#0000ff;"></div><div style="left:653px;top:1230px;width:18px;height:17px;background:#00ff00;"></div><div style="left:636px;top:1247px;width:17px;height:18px;background:#00ff00;"></div><div style="left:653px;top:1247px;width:18px;height:18px;background:#ff0000;"></div><div style="left:698px;top:1239px;width:18px;height:18px;border-radius:50%;background:radial-gradient(circle at 40% 35%,#ffffff,#e4e4e4);border:1px solid #b4b4b4;box-sizing:border-box;"></div><div style="left:730px;top:1230px;width:17px;height:17px;background:#00ff00;"></div><div style="left:747px;top:1230px;width:18px;height:17px;background:#0000ff;"></div><div style="left:730px;top:1247px;width:17px;height:18px;background:#ff0000;"></div><div style="left:747px;top:1247px;width:18px;height:18px;background:#00ff00;"></div><div style="left:791px;top:1239px;width:18px;height:18px;border-radius:50%;background:radial-gradient(circle at 40% 35%,#ffffff,#e4e4e4);border:1px solid #b4b4b4;box-sizing:border-box;"></div><div style="left:823px;top:1230px;width:17px;height:17px;background:#00ff00;"></div><div style="left:840px;top:1230px;width:18px;height:17px;background:#ff0000;"></div><div style="left:823px;top:1247px;width:17px;height:18px;background:#0000ff;"></div><div style="left:840px;top:1247px;width:18px;height:18px;background:#00ff00;"></div><div style="left:885px;top:1239px;width:18px;height:18px;border-radius:50%;background:radial-gradient(circle at 40% 35%,#ffffff,#e4e4e4);border:1px solid #b4b4b4;box-sizing:border-box;"></div><div style="left:917px;top:1230px;width:17px;height:17px;background:#ff0000;"></div><div style="left:934px;top:1230px;width:18px;height:17px;background:#00ff00;"></div><div style="left:917px;top:1247px;width:17px;height:18px;background:#00ff00;"></div><div style="left:934px;top:1247px;width:18px;height:18px;background:#0000ff;"></div><div style="left:979px;top:1239px;width:18px;height:18px;border-radius:50%;background:radial-gradient(circle at 40% 35%,#ffffff,#e4e4e4);border:1px solid #b4b4b4;box-sizing:border-box;"></div><div style="left:1010px;top:1230px;width:34px;height:35px;background:#ffffff;"></div><div style="left:577px;top:1298px;width:92px;height:34px;background:linear-gradient(#e9f1fb,#d3e1f3);border:1.5px solid #a9bcd6;border-radius:3px;box-sizing:border-box;"></div><div style="left:577px;top:1303.5px;width:92px;text-align:center;height:23px;line-height:23px;font-family:'Liberation Sans', sans-serif;font-size:17px;font-weight:normal;color:#1e2a3a;white-space:nowrap;">Load</div><div style="left:679px;top:1298px;width:92px;height:34px;background:linear-gradient(#e9f1fb,#d3e1f3);border:1.5px solid #a9bcd6;border-radius:3px;box-sizing:border-box;"></div><div style="left:679px;top:1303.5px;width:92px;text-align:center;height:23px;line-height:23px;font-family:'Liberation Sans', sans-serif;font-size:17px;font-weight:normal;color:#1e2a3a;white-space:nowrap;">Calibrate</div><div style="left:781px;top:1298px;width:92px;height:34px;background:linear-gradient(#e9f1fb,#d3e1f3);border:1.5px solid #a9bcd6;border-radius:3px;box-sizing:border-box;"></div><div style="left:781px;top:1303.5px;width:92px;text-align:center;height:23px;line-height:23px;font-family:'Liberation Sans', sans-serif;font-size:17px;font-weight:normal;color:#1e2a3a;white-space:nowrap;">Update</div><div style="left:883px;top:1298px;width:91px;height:34px;background:#f0f0f0;border:1.5px solid #c4c4c4;border-radius:3px;box-sizing:border-box;"></div><div style="left:883px;top:1303.5px;width:91px;text-align:center;height:23px;line-height:23px;font-family:'Liberation Sans', sans-serif;font-size:17px;font-weight:normal;color:#a8a8a8;white-space:nowrap;">Cancel</div><div style="left:985px;top:1298px;width:92px;height:34px;background:linear-gradient(#e9f1fb,#d3e1f3);border:1.5px solid #a9bcd6;border-radius:3px;box-sizing:border-box;"></div><div style="left:985px;top:1303.5px;width:92px;text-align:center;height:23px;line-height:23px;font-family:'Liberation Sans', sans-serif;font-size:17px;font-weight:normal;color:#1e2a3a;white-space:nowrap;">Show ROI</div><svg style="left:1105.4px;top:54.2px;" width="544" height="408" viewBox="0 0 544 408" shape-rendering="crispEdges"><rect x="0" y="0" width="544" height="408" fill="#030805"/><rect x="0.0" y="0.0" width="17.0" height="17.0" fill="#07110b"/><rect x="0.0" y="17.0" width="17.0" height="17.0" fill="#07110b"/><rect x="0.0" y="34.0" width="17.0" height="17.0" fill="#07110b"/><rect x="0.0" y="51.0" width="17.0" height="17.0" fill="#07110b"/><rect x="17.0" y="0.0" width="17.0" height="17.0" fill="#050c08"/><rect x="17.0" y="17.0" width="17.0" height="17.0" fill="#050c08"/><rect x="170.0" y="85.0" width="17.0" height="17.0" fill="#010302"/><rect x="187.0" y="85.0" width="17.0" height="17.0" fill="#010302"/><rect x="187.0" y="102.0" width="17.0" height="17.0" fill="#010302"/><rect x="170.0" y="102.0" width="17.0" height="17.0" fill="#010302"/><rect x="102.0" y="357.0" width="17.0" height="17.0" fill="#0a160e"/><rect x="119.0" y="357.0" width="17.0" height="17.0" fill="#0a160e"/><rect x="119.0" y="374.0" width="17.0" height="17.0" fill="#0c1a10"/><rect x="85.0" y="391.0" width="17.0" height="17.0" fill="#0a150d"/><rect x="68.0" y="391.0" width="17.0" height="17.0" fill="#070f0a"/><rect x="0.0" y="153.0" width="17.0" height="17.0" fill="#020403"/><rect x="0.0" y="170.0" width="17.0" height="17.0" fill="#020403"/><rect x="0.0" y="187.0" width="17.0" height="17.0" fill="#020403"/><rect x="0.0" y="204.0" width="17.0" height="17.0" fill="#020403"/><rect x="0.0" y="221.0" width="17.0" height="17.0" fill="#020403"/><rect x="0.0" y="238.0" width="17.0" height="17.0" fill="#020403"/><rect x="0.0" y="255.0" width="17.0" height="17.0" fill="#020403"/><rect x="0.0" y="272.0" width="17.0" height="17.0" fill="#020403"/><rect x="0.0" y="289.0" width="17.0" height="17.0" fill="#020403"/><rect x="0.0" y="306.0" width="17.0" height="17.0" fill="#020403"/><rect x="0.0" y="323.0" width="17.0" height="17.0" fill="#020403"/><rect x="0.0" y="340.0" width="17.0" height="17.0" fill="#020403"/><rect x="34.0" y="221.0" width="17.0" height="17.0" fill="#020403"/><rect x="51.0" y="221.0" width="17.0" height="17.0" fill="#020403"/><rect x="68.0" y="221.0" width="17.0" height="17.0" fill="#020403"/><rect x="34.0" y="204.0" width="17.0" height="17.0" fill="#020403"/><rect x="51.0" y="204.0" width="17.0" height="17.0" fill="#020403"/><defs><linearGradient id="tg" x1="0" x2="1" y1="0" y2="0"><stop offset="0" stop-color="#1d3a26"/><stop offset="0.5" stop-color="#203f2a"/><stop offset="1" stop-color="#264b33"/></linearGradient></defs><rect x="323.0" y="0" width="221.0" height="153.0" fill="url(#tg)"/><rect x="170.0" y="0.0" width="17.3" height="17.3" fill="#030705"/><rect x="187.0" y="0.0" width="17.3" height="17.3" fill="#030705"/><rect x="204.0" y="0.0" width="17.3" height="17.3" fill="#030705"/><rect x="221.0" y="0.0" width="17.3" height="17.3" fill="#08130c"/><rect x="238.0" y="0.0" width="17.3" height="17.3" fill="#162c1d"/><rect x="255.0" y="0.0" width="17.3" height="17.3" fill="#0f2116"/><rect x="272.0" y="0.0" width="17.3" height="17.3" fill="#162c1d"/><rect x="289.0" y="0.0" width="17.3" height="17.3" fill="#0f2116"/><rect x="306.0" y="0.0" width="17.3" height="17.3" fill="#1e3b27"/><rect x="170.0" y="17.0" width="17.3" height="17.3" fill="#030705"/><rect x="187.0" y="17.0" width="17.3" height="17.3" fill="#030705"/><rect x="204.0" y="17.0" width="17.3" height="17.3" fill="#030705"/><rect x="221.0" y="17.0" width="17.3" height="17.3" fill="#08130c"/><rect x="238.0" y="17.0" width="17.3" height="17.3" fill="#1e3b27"/><rect x="255.0" y="17.0" width="17.3" height="17.3" fill="#0f2116"/><rect x="272.0" y="17.0" width="17.3" height="17.3" fill="#0f2116"/><rect x="289.0" y="17.0" width="17.3" height="17.3" fill="#0f2116"/><rect x="306.0" y="17.0" width="17.3" height="17.3" fill="#1e3b27"/><rect x="170.0" y="34.0" width="17.3" height="17.3" fill="#030705"/><rect x="187.0" y="34.0" width="17.3" height="17.3" fill="#030705"/><rect x="204.0" y="34.0" width="17.3" height="17.3" fill="#030705"/><rect x="221.0" y="34.0" width="17.3" height="17.3" fill="#0f2116"/><rect x="238.0" y="34.0" width="17.3" height="17.3" fill="#0f2116"/><rect x="255.0" y="34.0" width="17.3" height="17.3" fill="#0f2116"/><rect x="272.0" y="34.0" width="17.3" height="17.3" fill="#0f2116"/><rect x="289.0" y="34.0" width="17.3" height="17.3" fill="#1e3b27"/><rect x="306.0" y="34.0" width="17.3" height="17.3" fill="#1e3b27"/><rect x="170.0" y="51.0" width="17.3" height="17.3" fill="#030705"/><rect x="187.0" y="51.0" width="17.3" height="17.3" fill="#030705"/><rect x="204.0" y="51.0" width="17.3" height="17.3" fill="#030705"/><rect x="221.0" y="51.0" width="17.3" height="17.3" fill="#0f2116"/><rect x="238.0" y="51.0" width="17.3" height="17.3" fill="#08130c"/><rect x="255.0" y="51.0" width="17.3" height="17.3" fill="#162c1d"/><rect x="272.0" y="51.0" width="17.3" height="17.3" fill="#162c1d"/><rect x="289.0" y="51.0" width="17.3" height="17.3" fill="#0f2116"/><rect x="306.0" y="51.0" width="17.3" height="17.3" fill="#1e3b27"/><rect x="170.0" y="68.0" width="17.3" height="17.3" fill="#030705"/><rect x="187.0" y="68.0" width="17.3" height="17.3" fill="#030705"/><rect x="204.0" y="68.0" width="17.3" height="17.3" fill="#030705"/><rect x="221.0" y="68.0" width="17.3" height="17.3" fill="#162c1d"/><rect x="238.0" y="68.0" width="17.3" height="17.3" fill="#0f2116"/><rect x="255.0" y="68.0" width="17.3" height="17.3" fill="#162c1d"/><rect x="272.0" y="68.0" width="17.3" height="17.3" fill="#162c1d"/><rect x="289.0" y="68.0" width="17.3" height="17.3" fill="#0f2116"/><rect x="306.0" y="68.0" width="17.3" height="17.3" fill="#1e3b27"/><rect x="170.0" y="85.0" width="17.3" height="17.3" fill="#030705"/><rect x="187.0" y="85.0" width="17.3" height="17.3" fill="#030705"/><rect x="204.0" y="85.0" width="17.3" height="17.3" fill="#030705"/><rect x="221.0" y="85.0" width="17.3" height="17.3" fill="#162c1d"/><rect x="238.0" y="85.0" width="17.3" height="17.3" fill="#0f2116"/><rect x="255.0" y="85.0" width="17.3" height="17.3" fill="#162c1d"/><rect x="272.0" y="85.0" width="17.3" height="17.3" fill="#0f2116"/><rect x="289.0" y="85.0" width="17.3" height="17.3" fill="#162c1d"/><rect x="306.0" y="85.0" width="17.3" height="17.3" fill="#1e3b27"/><rect x="170.0" y="102.0" width="17.3" height="17.3" fill="#030705"/><rect x="187.0" y="102.0" width="17.3" height="17.3" fill="#030705"/><rect x="204.0" y="102.0" width="17.3" height="17.3" fill="#030705"/><rect x="221.0" y="102.0" width="17.3" height="17.3" fill="#162c1d"/><rect x="238.0" y="102.0" width="17.3" height="17.3" fill="#0f2116"/><rect x="255.0" y="102.0" width="17.3" height="17.3" fill="#0f2116"/><rect x="272.0" y="102.0" width="17.3" height="17.3" fill="#0f2116"/><rect x="289.0" y="102.0" width="17.3" height="17.3" fill="#0f2116"/><rect x="306.0" y="102.0" width="17.3" height="17.3" fill="#1e3b27"/><rect x="170.0" y="119.0" width="17.3" height="17.3" fill="#030705"/><rect x="187.0" y="119.0" width="17.3" height="17.3" fill="#030705"/><rect x="204.0" y="119.0" width="17.3" height="17.3" fill="#030705"/><rect x="221.0" y="119.0" width="17.3" height="17.3" fill="#08130c"/><rect x="238.0" y="119.0" width="17.3" height="17.3" fill="#1e3b27"/><rect x="255.0" y="119.0" width="17.3" height="17.3" fill="#0f2116"/><rect x="272.0" y="119.0" width="17.3" height="17.3" fill="#162c1d"/><rect x="289.0" y="119.0" width="17.3" height="17.3" fill="#1e3b27"/><rect x="306.0" y="119.0" width="17.3" height="17.3" fill="#1e3b27"/><rect x="170.0" y="136.0" width="17.3" height="17.3" fill="#030705"/><rect x="187.0" y="136.0" width="17.3" height="17.3" fill="#030705"/><rect x="204.0" y="136.0" width="17.3" height="17.3" fill="#030705"/><rect x="221.0" y="136.0" width="17.3" height="17.3" fill="#08130c"/><rect x="238.0" y="136.0" width="17.3" height="17.3" fill="#0f2116"/><rect x="255.0" y="136.0" width="17.3" height="17.3" fill="#0f2116"/><rect x="272.0" y="136.0" width="17.3" height="17.3" fill="#0f2116"/><rect x="289.0" y="136.0" width="17.3" height="17.3" fill="#1e3b27"/><rect x="306.0" y="136.0" width="17.3" height="17.3" fill="#1e3b27"/><rect x="170.0" y="153.0" width="17.3" height="17.3" fill="#030705"/><rect x="187.0" y="153.0" width="17.3" height="17.3" fill="#030705"/><rect x="204.0" y="153.0" width="17.3" height="17.3" fill="#030705"/><rect x="221.0" y="153.0" width="17.3" height="17.3" fill="#08130c"/><rect x="238.0" y="153.0" width="17.3" height="17.3" fill="#08130c"/><rect x="255.0" y="153.0" width="17.3" height="17.3" fill="#162c1d"/><rect x="272.0" y="153.0" width="17.3" height="17.3" fill="#162c1d"/><rect x="289.0" y="153.0" width="17.3" height="17.3" fill="#23452f"/><rect x="306.0" y="153.0" width="17.3" height="17.3" fill="#23452f"/><rect x="323.0" y="153.0" width="17.3" height="17.3" fill="#23452f"/><rect x="340.0" y="153.0" width="17.3" height="17.3" fill="#23452f"/><rect x="357.0" y="153.0" width="17.3" height="17.3" fill="#1e3b27"/><rect x="374.0" y="153.0" width="17.3" height="17.3" fill="#1e3b27"/><rect x="391.0" y="153.0" width="17.3" height="17.3" fill="#23452f"/><rect x="408.0" y="153.0" width="17.3" height="17.3" fill="#23452f"/><rect x="425.0" y="153.0" width="17.3" height="17.3" fill="#23452f"/><rect x="442.0" y="153.0" width="17.3" height="17.3" fill="#23452f"/><rect x="459.0" y="153.0" width="17.3" height="17.3" fill="#23452f"/><rect x="476.0" y="153.0" width="17.3" height="17.3" fill="#23452f"/><rect x="493.0" y="153.0" width="17.3" height="17.3" fill="#23452f"/><rect x="510.0" y="153.0" width="17.3" height="17.3" fill="#23452f"/><rect x="527.0" y="153.0" width="17.3" height="17.3" fill="#23452f"/><rect x="170.0" y="170.0" width="17.3" height="17.3" fill="#030705"/><rect x="187.0" y="170.0" width="17.3" height="17.3" fill="#030705"/><rect x="204.0" y="170.0" width="17.3" height="17.3" fill="#08130c"/><rect x="221.0" y="170.0" width="17.3" height="17.3" fill="#08130c"/><rect x="238.0" y="170.0" width="17.3" height="17.3" fill="#08130c"/><rect x="255.0" y="170.0" width="17.3" height="17.3" fill="#162c1d"/><rect x="272.0" y="170.0" width="17.3" height="17.3" fill="#162c1d"/><rect x="289.0" y="170.0" width="17.3" height="17.3" fill="#336a45"/><rect x="306.0" y="170.0" width="17.3" height="17.3" fill="#3e7a50"/><rect x="323.0" y="170.0" width="17.3" height="17.3" fill="#3e7a50"/><rect x="340.0" y="170.0" width="17.3" height="17.3" fill="#3e7a50"/><rect x="357.0" y="170.0" width="17.3" height="17.3" fill="#4a8c5e"/><rect x="374.0" y="170.0" width="17.3" height="17.3" fill="#519a68"/><rect x="391.0" y="170.0" width="17.3" height="17.3" fill="#58a872"/><rect x="408.0" y="170.0" width="17.3" height="17.3" fill="#162c1d"/><rect x="425.0" y="170.0" width="17.3" height="17.3" fill="#336a45"/><rect x="442.0" y="170.0" width="17.3" height="17.3" fill="#58a872"/><rect x="459.0" y="170.0" width="17.3" height="17.3" fill="#58a872"/><rect x="476.0" y="170.0" width="17.3" height="17.3" fill="#4a8c5e"/><rect x="493.0" y="170.0" width="17.3" height="17.3" fill="#4a8c5e"/><rect x="510.0" y="170.0" width="17.3" height="17.3" fill="#4a8c5e"/><rect x="527.0" y="170.0" width="17.3" height="17.3" fill="#4a8c5e"/><rect x="170.0" y="187.0" width="17.3" height="17.3" fill="#030705"/><rect x="187.0" y="187.0" width="17.3" height="17.3" fill="#030705"/><rect x="204.0" y="187.0" width="17.3" height="17.3" fill="#030705"/><rect x="221.0" y="187.0" width="17.3" height="17.3" fill="#08130c"/><rect x="238.0" y="187.0" width="17.3" height="17.3" fill="#08130c"/><rect x="255.0" y="187.0" width="17.3" height="17.3" fill="#162c1d"/><rect x="272.0" y="187.0" width="17.3" height="17.3" fill="#162c1d"/><rect x="289.0" y="187.0" width="17.3" height="17.3" fill="#3e7a50"/><rect x="306.0" y="187.0" width="17.3" height="17.3" fill="#3e7a50"/><rect x="323.0" y="187.0" width="17.3" height="17.3" fill="#3e7a50"/><rect x="340.0" y="187.0" width="17.3" height="17.3" fill="#3e7a50"/><rect x="357.0" y="187.0" width="17.3" height="17.3" fill="#4a8c5e"/><rect x="374.0" y="187.0" width="17.3" height="17.3" fill="#4a8c5e"/><rect x="391.0" y="187.0" width="17.3" height="17.3" fill="#519a68"/><rect x="408.0" y="187.0" width="17.3" height="17.3" fill="#162c1d"/><rect x="425.0" y="187.0" width="17.3" height="17.3" fill="#336a45"/><rect x="442.0" y="187.0" width="17.3" height="17.3" fill="#58a872"/><rect x="459.0" y="187.0" width="17.3" height="17.3" fill="#58a872"/><rect x="476.0" y="187.0" width="17.3" height="17.3" fill="#519a68"/><rect x="493.0" y="187.0" width="17.3" height="17.3" fill="#58a872"/><rect x="510.0" y="187.0" width="17.3" height="17.3" fill="#58a872"/><rect x="527.0" y="187.0" width="17.3" height="17.3" fill="#519a68"/><rect x="170.0" y="204.0" width="17.3" height="17.3" fill="#030705"/><rect x="187.0" y="204.0" width="17.3" height="17.3" fill="#030705"/><rect x="204.0" y="204.0" width="17.3" height="17.3" fill="#030705"/><rect x="221.0" y="204.0" width="17.3" height="17.3" fill="#08130c"/><rect x="238.0" y="204.0" width="17.3" height="17.3" fill="#08130c"/><rect x="255.0" y="204.0" width="17.3" height="17.3" fill="#162c1d"/><rect x="272.0" y="204.0" width="17.3" height="17.3" fill="#162c1d"/><rect x="289.0" y="204.0" width="17.3" height="17.3" fill="#336a45"/><rect x="306.0" y="204.0" width="17.3" height="17.3" fill="#4a8c5e"/><rect x="323.0" y="204.0" width="17.3" height="17.3" fill="#4a8c5e"/><rect x="340.0" y="204.0" width="17.3" height="17.3" fill="#4a8c5e"/><rect x="357.0" y="204.0" width="17.3" height="17.3" fill="#4a8c5e"/><rect x="374.0" y="204.0" width="17.3" height="17.3" fill="#4a8c5e"/><rect x="391.0" y="204.0" width="17.3" height="17.3" fill="#4a8c5e"/><rect x="408.0" y="204.0" width="17.3" height="17.3" fill="#4a8c5e"/><rect x="425.0" y="204.0" width="17.3" height="17.3" fill="#162c1d"/><rect x="442.0" y="204.0" width="17.3" height="17.3" fill="#3e7a50"/><rect x="459.0" y="204.0" width="17.3" height="17.3" fill="#519a68"/><rect x="476.0" y="204.0" width="17.3" height="17.3" fill="#58a872"/><rect x="493.0" y="204.0" width="17.3" height="17.3" fill="#58a872"/><rect x="510.0" y="204.0" width="17.3" height="17.3" fill="#58a872"/><rect x="527.0" y="204.0" width="17.3" height="17.3" fill="#519a68"/><rect x="170.0" y="221.0" width="17.3" height="17.3" fill="#030705"/><rect x="187.0" y="221.0" width="17.3" height="17.3" fill="#030705"/><rect x="204.0" y="221.0" width="17.3" height="17.3" fill="#030705"/><rect x="221.0" y="221.0" width="17.3" height="17.3" fill="#0f2116"/><rect x="238.0" y="221.0" width="17.3" height="17.3" fill="#08130c"/><rect x="255.0" y="221.0" width="17.3" height="17.3" fill="#0f2116"/><rect x="272.0" y="221.0" width="17.3" height="17.3" fill="#162c1d"/><rect x="289.0" y="221.0" width="17.3" height="17.3" fill="#1e3b27"/><rect x="306.0" y="221.0" width="17.3" height="17.3" fill="#1e3b27"/><rect x="323.0" y="221.0" width="17.3" height="17.3" fill="#2a5538"/><rect x="340.0" y="221.0" width="17.3" height="17.3" fill="#336a45"/><rect x="357.0" y="221.0" width="17.3" height="17.3" fill="#4a8c5e"/><rect x="374.0" y="221.0" width="17.3" height="17.3" fill="#4a8c5e"/><rect x="391.0" y="221.0" width="17.3" height="17.3" fill="#4a8c5e"/><rect x="408.0" y="221.0" width="17.3" height="17.3" fill="#336a45"/><rect x="425.0" y="221.0" width="17.3" height="17.3" fill="#162c1d"/><rect x="442.0" y="221.0" width="17.3" height="17.3" fill="#336a45"/><rect x="459.0" y="221.0" width="17.3" height="17.3" fill="#519a68"/><rect x="476.0" y="221.0" width="17.3" height="17.3" fill="#4a8c5e"/><rect x="493.0" y="221.0" width="17.3" height="17.3" fill="#336a45"/><rect x="510.0" y="221.0" width="17.3" height="17.3" fill="#336a45"/><rect x="527.0" y="221.0" width="17.3" height="17.3" fill="#519a68"/><rect x="170.0" y="238.0" width="17.3" height="17.3" fill="#030705"/><rect x="187.0" y="238.0" width="17.3" height="17.3" fill="#030705"/><rect x="204.0" y="238.0" width="17.3" height="17.3" fill="#1e3b27"/><rect x="221.0" y="238.0" width="17.3" height="17.3" fill="#2a5538"/><rect x="238.0" y="238.0" width="17.3" height="17.3" fill="#2a5538"/><rect x="255.0" y="238.0" width="17.3" height="17.3" fill="#336a45"/><rect x="272.0" y="238.0" width="17.3" height="17.3" fill="#3e7a50"/><rect x="289.0" y="238.0" width="17.3" height="17.3" fill="#3e7a50"/><rect x="306.0" y="238.0" width="17.3" height="17.3" fill="#336a45"/><rect x="323.0" y="238.0" width="17.3" height="17.3" fill="#3e7a50"/><rect x="340.0" y="238.0" width="17.3" height="17.3" fill="#3e7a50"/><rect x="357.0" y="238.0" width="17.3" height="17.3" fill="#4a8c5e"/><rect x="374.0" y="238.0" width="17.3" height="17.3" fill="#4a8c5e"/><rect x="391.0" y="238.0" width="17.3" height="17.3" fill="#4a8c5e"/><rect x="408.0" y="238.0" width="17.3" height="17.3" fill="#3e7a50"/><rect x="425.0" y="238.0" width="17.3" height="17.3" fill="#4a8c5e"/><rect x="442.0" y="238.0" width="17.3" height="17.3" fill="#519a68"/><rect x="459.0" y="238.0" width="17.3" height="17.3" fill="#519a68"/><rect x="476.0" y="238.0" width="17.3" height="17.3" fill="#519a68"/><rect x="493.0" y="238.0" width="17.3" height="17.3" fill="#4a8c5e"/><rect x="510.0" y="238.0" width="17.3" height="17.3" fill="#4a8c5e"/><rect x="527.0" y="238.0" width="17.3" height="17.3" fill="#4a8c5e"/><rect x="170.0" y="255.0" width="17.3" height="17.3" fill="#030705"/><rect x="187.0" y="255.0" width="17.3" height="17.3" fill="#030705"/><rect x="204.0" y="255.0" width="17.3" height="17.3" fill="#1e3b27"/><rect x="221.0" y="255.0" width="17.3" height="17.3" fill="#3e7a50"/><rect x="238.0" y="255.0" width="17.3" height="17.3" fill="#3e7a50"/><rect x="255.0" y="255.0" width="17.3" height="17.3" fill="#4a8c5e"/><rect x="272.0" y="255.0" width="17.3" height="17.3" fill="#519a68"/><rect x="289.0" y="255.0" width="17.3" height="17.3" fill="#519a68"/><rect x="306.0" y="255.0" width="17.3" height="17.3" fill="#58a872"/><rect x="323.0" y="255.0" width="17.3" height="17.3" fill="#58a872"/><rect x="340.0" y="255.0" width="17.3" height="17.3" fill="#5fb67c"/><rect x="357.0" y="255.0" width="17.3" height="17.3" fill="#5fb67c"/><rect x="374.0" y="255.0" width="17.3" height="17.3" fill="#5fb67c"/><rect x="391.0" y="255.0" width="17.3" height="17.3" fill="#68c88b"/><rect x="408.0" y="255.0" width="17.3" height="17.3" fill="#68c88b"/><rect x="425.0" y="255.0" width="17.3" height="17.3" fill="#68c88b"/><rect x="442.0" y="255.0" width="17.3" height="17.3" fill="#68c88b"/><rect x="459.0" y="255.0" width="17.3" height="17.3" fill="#68c88b"/><rect x="476.0" y="255.0" width="17.3" height="17.3" fill="#68c88b"/><rect x="493.0" y="255.0" width="17.3" height="17.3" fill="#68c88b"/><rect x="510.0" y="255.0" width="17.3" height="17.3" fill="#68c88b"/><rect x="527.0" y="255.0" width="17.3" height="17.3" fill="#68c88b"/><rect x="170.0" y="272.0" width="17.3" height="17.3" fill="#030705"/><rect x="187.0" y="272.0" width="17.3" height="17.3" fill="#030705"/><rect x="204.0" y="272.0" width="17.3" height="17.3" fill="#1e3b27"/><rect x="221.0" y="272.0" width="17.3" height="17.3" fill="#4a8c5e"/><rect x="238.0" y="272.0" width="17.3" height="17.3" fill="#3e7a50"/><rect x="255.0" y="272.0" width="17.3" height="17.3" fill="#4a8c5e"/><rect x="272.0" y="272.0" width="17.3" height="17.3" fill="#4a8c5e"/><rect x="289.0" y="272.0" width="17.3" height="17.3" fill="#4a8c5e"/><rect x="306.0" y="272.0" width="17.3" height="17.3" fill="#4a8c5e"/><rect x="323.0" y="272.0" width="17.3" height="17.3" fill="#519a68"/><rect x="340.0" y="272.0" width="17.3" height="17.3" fill="#519a68"/><rect x="357.0" y="272.0" width="17.3" height="17.3" fill="#4a8c5e"/><rect x="374.0" y="272.0" width="17.3" height="17.3" fill="#4a8c5e"/><rect x="391.0" y="272.0" width="17.3" height="17.3" fill="#4a8c5e"/><rect x="408.0" y="272.0" width="17.3" height="17.3" fill="#4a8c5e"/><rect x="425.0" y="272.0" width="17.3" height="17.3" fill="#4a8c5e"/><rect x="442.0" y="272.0" width="17.3" height="17.3" fill="#4a8c5e"/><rect x="459.0" y="272.0" width="17.3" height="17.3" fill="#4a8c5e"/><rect x="476.0" y="272.0" width="17.3" height="17.3" fill="#4a8c5e"/><rect x="493.0" y="272.0" width="17.3" height="17.3" fill="#4a8c5e"/><rect x="510.0" y="272.0" width="17.3" height="17.3" fill="#4a8c5e"/><rect x="527.0" y="272.0" width="17.3" height="17.3" fill="#4a8c5e"/><rect x="170.0" y="289.0" width="17.3" height="17.3" fill="#030705"/><rect x="187.0" y="289.0" width="17.3" height="17.3" fill="#030705"/><rect x="204.0" y="289.0" width="17.3" height="17.3" fill="#1e3b27"/><rect x="221.0" y="289.0" width="17.3" height="17.3" fill="#4a8c5e"/><rect x="238.0" y="289.0" width="17.3" height="17.3" fill="#4a8c5e"/><rect x="255.0" y="289.0" width="17.3" height="17.3" fill="#336a45"/><rect x="272.0" y="289.0" width="17.3" height="17.3" fill="#3e7a50"/><rect x="289.0" y="289.0" width="17.3" height="17.3" fill="#4a8c5e"/><rect x="306.0" y="289.0" width="17.3" height="17.3" fill="#4a8c5e"/><rect x="323.0" y="289.0" width="17.3" height="17.3" fill="#4a8c5e"/><rect x="340.0" y="289.0" width="17.3" height="17.3" fill="#4a8c5e"/><rect x="357.0" y="289.0" width="17.3" height="17.3" fill="#4a8c5e"/><rect x="374.0" y="289.0" width="17.3" height="17.3" fill="#4a8c5e"/><rect x="391.0" y="289.0" width="17.3" height="17.3" fill="#4a8c5e"/><rect x="408.0" y="289.0" width="17.3" height="17.3" fill="#4a8c5e"/><rect x="425.0" y="289.0" width="17.3" height="17.3" fill="#4a8c5e"/><rect x="442.0" y="289.0" width="17.3" height="17.3" fill="#4a8c5e"/><rect x="459.0" y="289.0" width="17.3" height="17.3" fill="#4a8c5e"/><rect x="476.0" y="289.0" width="17.3" height="17.3" fill="#4a8c5e"/><rect x="493.0" y="289.0" width="17.3" height="17.3" fill="#4a8c5e"/><rect x="510.0" y="289.0" width="17.3" height="17.3" fill="#4a8c5e"/><rect x="527.0" y="289.0" width="17.3" height="17.3" fill="#4a8c5e"/><rect x="170.0" y="306.0" width="17.3" height="17.3" fill="#030705"/><rect x="187.0" y="306.0" width="17.3" height="17.3" fill="#030705"/><rect x="204.0" y="306.0" width="17.3" height="17.3" fill="#1e3b27"/><rect x="221.0" y="306.0" width="17.3" height="17.3" fill="#4a8c5e"/><rect x="238.0" y="306.0" width="17.3" height="17.3" fill="#3e7a50"/><rect x="255.0" y="306.0" width="17.3" height="17.3" fill="#4a8c5e"/><rect x="272.0" y="306.0" width="17.3" height="17.3" fill="#4a8c5e"/><rect x="289.0" y="306.0" width="17.3" height="17.3" fill="#519a68"/><rect x="306.0" y="306.0" width="17.3" height="17.3" fill="#519a68"/><rect x="323.0" y="306.0" width="17.3" height="17.3" fill="#519a68"/><rect x="340.0" y="306.0" width="17.3" height="17.3" fill="#519a68"/><rect x="357.0" y="306.0" width="17.3" height="17.3" fill="#519a68"/><rect x="374.0" y="306.0" width="17.3" height="17.3" fill="#4a8c5e"/><rect x="391.0" y="306.0" width="17.3" height="17.3" fill="#4a8c5e"/><rect x="408.0" y="306.0" width="17.3" height="17.3" fill="#519a68"/><rect x="425.0" y="306.0" width="17.3" height="17.3" fill="#4a8c5e"/><rect x="442.0" y="306.0" width="17.3" height="17.3" fill="#2a5538"/><rect x="459.0" y="306.0" width="17.3" height="17.3" fill="#1e3b27"/><rect x="476.0" y="306.0" width="17.3" height="17.3" fill="#2a5538"/><rect x="493.0" y="306.0" width="17.3" height="17.3" fill="#336a45"/><rect x="510.0" y="306.0" width="17.3" height="17.3" fill="#2a5538"/><rect x="527.0" y="306.0" width="17.3" height="17.3" fill="#3e7a50"/><rect x="170.0" y="323.0" width="17.3" height="17.3" fill="#030705"/><rect x="187.0" y="323.0" width="17.3" height="17.3" fill="#030705"/><rect x="204.0" y="323.0" width="17.3" height="17.3" fill="#1e3b27"/><rect x="221.0" y="323.0" width="17.3" height="17.3" fill="#4a8c5e"/><rect x="238.0" y="323.0" width="17.3" height="17.3" fill="#4a8c5e"/><rect x="255.0" y="323.0" width="17.3" height="17.3" fill="#3e7a50"/><rect x="272.0" y="323.0" width="17.3" height="17.3" fill="#3e7a50"/><rect x="289.0" y="323.0" width="17.3" height="17.3" fill="#336a45"/><rect x="306.0" y="323.0" width="17.3" height="17.3" fill="#2a5538"/><rect x="323.0" y="323.0" width="17.3" height="17.3" fill="#3e7a50"/><rect x="340.0" y="323.0" width="17.3" height="17.3" fill="#519a68"/><rect x="357.0" y="323.0" width="17.3" height="17.3" fill="#519a68"/><rect x="374.0" y="323.0" width="17.3" height="17.3" fill="#519a68"/><rect x="391.0" y="323.0" width="17.3" height="17.3" fill="#519a68"/><rect x="408.0" y="323.0" width="17.3" height="17.3" fill="#58a872"/><rect x="425.0" y="323.0" width="17.3" height="17.3" fill="#3e7a50"/><rect x="442.0" y="323.0" width="17.3" height="17.3" fill="#1e3b27"/><rect x="459.0" y="323.0" width="17.3" height="17.3" fill="#0f2116"/><rect x="476.0" y="323.0" width="17.3" height="17.3" fill="#1e3b27"/><rect x="493.0" y="323.0" width="17.3" height="17.3" fill="#2a5538"/><rect x="510.0" y="323.0" width="17.3" height="17.3" fill="#2a5538"/><rect x="527.0" y="323.0" width="17.3" height="17.3" fill="#336a45"/><rect x="170.0" y="340.0" width="17.3" height="17.3" fill="#030705"/><rect x="187.0" y="340.0" width="17.3" height="17.3" fill="#030705"/><rect x="204.0" y="340.0" width="17.3" height="17.3" fill="#1e3b27"/><rect x="221.0" y="340.0" width="17.3" height="17.3" fill="#4a8c5e"/><rect x="238.0" y="340.0" width="17.3" height="17.3" fill="#4a8c5e"/><rect x="255.0" y="340.0" width="17.3" height="17.3" fill="#336a45"/><rect x="272.0" y="340.0" width="17.3" height="17.3" fill="#3e7a50"/><rect x="289.0" y="340.0" width="17.3" height="17.3" fill="#3e7a50"/><rect x="306.0" y="340.0" width="17.3" height="17.3" fill="#1e3b27"/><rect x="323.0" y="340.0" width="17.3" height="17.3" fill="#4a8c5e"/><rect x="340.0" y="340.0" width="17.3" height="17.3" fill="#4a8c5e"/><rect x="357.0" y="340.0" width="17.3" height="17.3" fill="#4a8c5e"/><rect x="374.0" y="340.0" width="17.3" height="17.3" fill="#4a8c5e"/><rect x="391.0" y="340.0" width="17.3" height="17.3" fill="#4a8c5e"/><rect x="408.0" y="340.0" width="17.3" height="17.3" fill="#519a68"/><rect x="425.0" y="340.0" width="17.3" height="17.3" fill="#519a68"/><rect x="442.0" y="340.0" width="17.3" height="17.3" fill="#2a5538"/><rect x="459.0" y="340.0" width="17.3" height="17.3" fill="#2a5538"/><rect x="476.0" y="340.0" width="17.3" height="17.3" fill="#3e7a50"/><rect x="493.0" y="340.0" width="17.3" height="17.3" fill="#4a8c5e"/><rect x="510.0" y="340.0" width="17.3" height="17.3" fill="#336a45"/><rect x="527.0" y="340.0" width="17.3" height="17.3" fill="#0f2116"/><rect x="170.0" y="357.0" width="17.3" height="17.3" fill="#030705"/><rect x="187.0" y="357.0" width="17.3" height="17.3" fill="#030705"/><rect x="204.0" y="357.0" width="17.3" height="17.3" fill="#1e3b27"/><rect x="221.0" y="357.0" width="17.3" height="17.3" fill="#4a8c5e"/><rect x="238.0" y="357.0" width="17.3" height="17.3" fill="#4a8c5e"/><rect x="255.0" y="357.0" width="17.3" height="17.3" fill="#4a8c5e"/><rect x="272.0" y="357.0" width="17.3" height="17.3" fill="#58a872"/><rect x="289.0" y="357.0" width="17.3" height="17.3" fill="#58a872"/><rect x="306.0" y="357.0" width="17.3" height="17.3" fill="#2a5538"/><rect x="323.0" y="357.0" width="17.3" height="17.3" fill="#519a68"/><rect x="340.0" y="357.0" width="17.3" height="17.3" fill="#3e7a50"/><rect x="357.0" y="357.0" width="17.3" height="17.3" fill="#3e7a50"/><rect x="374.0" y="357.0" width="17.3" height="17.3" fill="#3e7a50"/><rect x="391.0" y="357.0" width="17.3" height="17.3" fill="#4a8c5e"/><rect x="408.0" y="357.0" width="17.3" height="17.3" fill="#4a8c5e"/><rect x="425.0" y="357.0" width="17.3" height="17.3" fill="#519a68"/><rect x="442.0" y="357.0" width="17.3" height="17.3" fill="#336a45"/><rect x="459.0" y="357.0" width="17.3" height="17.3" fill="#4a8c5e"/><rect x="476.0" y="357.0" width="17.3" height="17.3" fill="#3e7a50"/><rect x="493.0" y="357.0" width="17.3" height="17.3" fill="#336a45"/><rect x="510.0" y="357.0" width="17.3" height="17.3" fill="#2a5538"/><rect x="527.0" y="357.0" width="17.3" height="17.3" fill="#1e3b27"/><rect x="170.0" y="374.0" width="17.3" height="17.3" fill="#030705"/><rect x="187.0" y="374.0" width="17.3" height="17.3" fill="#030705"/><rect x="204.0" y="374.0" width="17.3" height="17.3" fill="#1e3b27"/><rect x="221.0" y="374.0" width="17.3" height="17.3" fill="#4a8c5e"/><rect x="238.0" y="374.0" width="17.3" height="17.3" fill="#4a8c5e"/><rect x="255.0" y="374.0" width="17.3" height="17.3" fill="#519a68"/><rect x="272.0" y="374.0" width="17.3" height="17.3" fill="#5fb67c"/><rect x="289.0" y="374.0" width="17.3" height="17.3" fill="#5fb67c"/><rect x="306.0" y="374.0" width="17.3" height="17.3" fill="#5fb67c"/><rect x="323.0" y="374.0" width="17.3" height="17.3" fill="#4a8c5e"/><rect x="340.0" y="374.0" width="17.3" height="17.3" fill="#4a8c5e"/><rect x="357.0" y="374.0" width="17.3" height="17.3" fill="#4a8c5e"/><rect x="374.0" y="374.0" width="17.3" height="17.3" fill="#4a8c5e"/><rect x="391.0" y="374.0" width="17.3" height="17.3" fill="#4a8c5e"/><rect x="408.0" y="374.0" width="17.3" height="17.3" fill="#4a8c5e"/><rect x="425.0" y="374.0" width="17.3" height="17.3" fill="#519a68"/><rect x="442.0" y="374.0" width="17.3" height="17.3" fill="#3e7a50"/><rect x="459.0" y="374.0" width="17.3" height="17.3" fill="#4a8c5e"/><rect x="476.0" y="374.0" width="17.3" height="17.3" fill="#3e7a50"/><rect x="493.0" y="374.0" width="17.3" height="17.3" fill="#3e7a50"/><rect x="510.0" y="374.0" width="17.3" height="17.3" fill="#336a45"/><rect x="527.0" y="374.0" width="17.3" height="17.3" fill="#3e7a50"/><rect x="170.0" y="391.0" width="17.3" height="17.3" fill="#030705"/><rect x="187.0" y="391.0" width="17.3" height="17.3" fill="#030705"/><rect x="204.0" y="391.0" width="17.3" height="17.3" fill="#1e3b27"/><rect x="221.0" y="391.0" width="17.3" height="17.3" fill="#4a8c5e"/><rect x="238.0" y="391.0" width="17.3" height="17.3" fill="#4a8c5e"/><rect x="255.0" y="391.0" width="17.3" height="17.3" fill="#4a8c5e"/><rect x="272.0" y="391.0" width="17.3" height="17.3" fill="#5fb67c"/><rect x="289.0" y="391.0" width="17.3" height="17.3" fill="#5fb67c"/><rect x="306.0" y="391.0" width="17.3" height="17.3" fill="#519a68"/><rect x="323.0" y="391.0" width="17.3" height="17.3" fill="#4a8c5e"/><rect x="340.0" y="391.0" width="17.3" height="17.3" fill="#4a8c5e"/><rect x="357.0" y="391.0" width="17.3" height="17.3" fill="#519a68"/><rect x="374.0" y="391.0" width="17.3" height="17.3" fill="#4a8c5e"/><rect x="391.0" y="391.0" width="17.3" height="17.3" fill="#4a8c5e"/><rect x="408.0" y="391.0" width="17.3" height="17.3" fill="#4a8c5e"/><rect x="425.0" y="391.0" width="17.3" height="17.3" fill="#519a68"/><rect x="442.0" y="391.0" width="17.3" height="17.3" fill="#4a8c5e"/><rect x="459.0" y="391.0" width="17.3" height="17.3" fill="#4a8c5e"/><rect x="476.0" y="391.0" width="17.3" height="17.3" fill="#3e7a50"/><rect x="493.0" y="391.0" width="17.3" height="17.3" fill="#336a45"/><rect x="510.0" y="391.0" width="17.3" height="17.3" fill="#2a5538"/><rect x="527.0" y="391.0" width="17.3" height="17.3" fill="#2a5538"/></svg><div style="left:1439px;top:116px;width:82px;height:72px;border:2px dashed #c8281e;box-sizing:border-box;"></div><div style="left:1664px;top:55px;width:208px;height:405px;border:1px solid #d5d5d5;box-sizing:border-box;"></div><div style="left:1671px;top:51px;width:159.0px;height:8px;background:#f0f0f0;"></div><div class="lb" style="left:1673.5px;top:41.0px;height:24px;line-height:24px;color:#1a1a1a;-webkit-text-stroke:0.6px #1a1a1a;"><i class="c"><i class="s" style="transform:scaleX(0.68)">R</i></i><i class="c">,</i><i class="c"> </i><i class="c"><i class="s" style="transform:scaleX(0.78);font-family:Liberation Mono,monospace;font-size:17px">G</i></i><i class="c">,</i><i class="c"> </i><i class="c"><i class="s" style="transform:scaleX(0.68)">B</i></i><i class="c"> </i><i class="c"><i class="s" style="transform:scaleX(0.78);font-family:Liberation Mono,monospace;font-size:17px">G</i></i><i class="c">a</i><i class="c">i</i><i class="c"><i class="s" style="transform:scaleX(0.91)">n</i></i><i class="c"> </i><i class="c"><i class="s" style="transform:scaleX(0.82)">P</i></i><i class="c">a</i><i class="c"><i class="s" style="transform:scaleX(0.91)">n</i></i><i class="c">e</i><i class="c">l</i></div><div style="left:1714px;top:73px;width:18px;height:18px;background:#fff;border:2px solid #333;box-sizing:border-box;"></div><div class="lb" style="left:1738.5px;top:71.0px;height:24px;line-height:24px;color:#222222;-webkit-text-stroke:0.6px #222222;"><i class="c"><i class="s" style="transform:scaleX(0.75)">E</i></i><i class="c"><i class="s" style="transform:scaleX(0.91)">n</i></i><i class="c">a</i><i class="c"><i class="s" style="transform:scaleX(0.91)">b</i></i><i class="c">l</i><i class="c">e</i><i class="c"><i class="s" style="transform:scaleX(0.91)">d</i></i></div><div style="left:1807px;top:73px;width:16px;height:17px;background:#008080;"></div><div class="lb" style="left:1675.5px;top:103.0px;height:24px;line-height:24px;color:#222222;-webkit-text-stroke:0.6px #222222;"><i class="c"><i class="s" style="transform:scaleX(0.68)">R</i></i></div><div style="left:1714px;top:99px;width:136px;height:30px;background:#f0f0f0;border:1.6px solid #c3cedf;box-sizing:border-box;"></div><svg style="left:0px;top:0px;overflow:visible" width="1" height="1"><path d="M1833 111.0 L1837 107.0 L1841 111.0 Z" fill="#a8a8a8"/><path d="M1833 117.0 L1837 121.0 L1841 117.0 Z" fill="#a8a8a8"/></svg><div style="left:1717px;top:101.0px;height:23px;line-height:23px;font-family:'Liberation Sans', sans-serif;font-size:17px;font-weight:normal;color:#b4b4b4;white-space:nowrap;">7000.000000</div><div class="lb" style="left:1675.5px;top:141.0px;height:24px;line-height:24px;color:#222222;-webkit-text-stroke:0.6px #222222;"><i class="c"><i class="s" style="transform:scaleX(0.78);font-family:Liberation Mono,monospace;font-size:17px">G</i></i></div><div style="left:1714px;top:137px;width:136px;height:30px;background:#f0f0f0;border:1.6px solid #c3cedf;box-sizing:border-box;"></div><svg style="left:0px;top:0px;overflow:visible" width="1" height="1"><path d="M1833 149.0 L1837 145.0 L1841 149.0 Z" fill="#a8a8a8"/><path d="M1833 155.0 L1837 159.0 L1841 155.0 Z" fill="#a8a8a8"/></svg><div style="left:1717px;top:139.0px;height:23px;line-height:23px;font-family:'Liberation Sans', sans-serif;font-size:17px;font-weight:normal;color:#b4b4b4;white-space:nowrap;">4096.000000</div><div class="lb" style="left:1675.5px;top:179.0px;height:24px;line-height:24px;color:#222222;-webkit-text-stroke:0.6px #222222;"><i class="c"><i class="s" style="transform:scaleX(0.68)">B</i></i></div><div style="left:1714px;top:175px;width:136px;height:30px;background:#f0f0f0;border:1.6px solid #c3cedf;box-sizing:border-box;"></div><svg style="left:0px;top:0px;overflow:visible" width="1" height="1"><path d="M1833 187.0 L1837 183.0 L1841 187.0 Z" fill="#a8a8a8"/><path d="M1833 193.0 L1837 197.0 L1841 193.0 Z" fill="#a8a8a8"/></svg><div style="left:1717px;top:177.0px;height:23px;line-height:23px;font-family:'Liberation Sans', sans-serif;font-size:17px;font-weight:normal;color:#b4b4b4;white-space:nowrap;">6000.000000</div><div style="left:1882px;top:55px;width:241px;height:405px;border:1px solid #d5d5d5;box-sizing:border-box;"></div><div style="left:1889px;top:51px;width:91.0px;height:8px;background:#f0f0f0;"></div><div class="lb" style="left:1891.5px;top:41.0px;height:24px;line-height:24px;color:#1a1a1a;-webkit-text-stroke:0.6px #1a1a1a;"><i class="c"><i class="s" style="transform:scaleX(0.78);font-family:Liberation Mono,monospace;font-size:17px">G</i></i><i class="c">a</i><i class="c">i</i><i class="c"><i class="s" style="transform:scaleX(0.91)">n</i></i><i class="c"> </i><i class="c"><i class="s" style="transform:scaleX(0.82)">P</i></i><i class="c">a</i><i class="c"><i class="s" style="transform:scaleX(0.91)">n</i></i><i class="c">e</i><i class="c">l</i></div><div class="lb" style="left:1894.5px;top:75.0px;height:24px;line-height:24px;color:#222222;-webkit-text-stroke:0.6px #222222;"><i class="c"><i class="s" style="transform:scaleX(0.78);font-family:Liberation Mono,monospace;font-size:17px">X</i></i><i class="c">,</i><i class="c"><i class="s" style="transform:scaleX(0.78);font-family:Liberation Mono,monospace;font-size:17px">Y</i></i></div><div style="left:1932px;top:72px;width:85px;height:28px;background:#f0f0f0;border:1.6px solid #c3cedf;box-sizing:border-box;"></div><div style="left:1935px;top:74.0px;height:23px;line-height:23px;font-family:'Liberation Sans', sans-serif;font-size:17px;font-weight:normal;color:#1e1e1e;white-space:nowrap;">326</div><div style="left:2024px;top:72px;width:85px;height:28px;background:#f0f0f0;border:1.6px solid #c3cedf;box-sizing:border-box;"></div><div style="left:2027px;top:74.0px;height:23px;line-height:23px;font-family:'Liberation Sans', sans-serif;font-size:17px;font-weight:normal;color:#1e1e1e;white-space:nowrap;">1800</div><div class="lb" style="left:1894.5px;top:111.0px;height:24px;line-height:24px;color:#222222;-webkit-text-stroke:0.6px #222222;"><i class="c"><i class="s" style="transform:scaleX(0.68)">C</i></i><i class="c"><i class="s" style="transform:scaleX(0.75)">T</i></i></div><div style="left:1932px;top:108px;width:85px;height:28px;background:#f0f0f0;border:1.6px solid #c3cedf;box-sizing:border-box;"></div><div style="left:1935px;top:110.0px;height:23px;line-height:23px;font-family:'Liberation Sans', sans-serif;font-size:17px;font-weight:normal;color:#1e1e1e;white-space:nowrap;">450</div><div class="lb" style="left:1894.5px;top:148.0px;height:24px;line-height:24px;color:#222222;-webkit-text-stroke:0.6px #222222;"><i class="c"><i class="s" style="transform:scaleX(0.68)">R</i></i></div><div style="left:1932px;top:145px;width:85px;height:28px;background:#f0f0f0;border:1.6px solid #c3cedf;box-sizing:border-box;"></div><div style="left:1935px;top:147.0px;height:23px;line-height:23px;font-family:'Liberation Sans', sans-serif;font-size:17px;font-weight:normal;color:#1e1e1e;white-space:nowrap;">9625</div><div style="left:2024px;top:145px;width:85px;height:28px;background:#f0f0f0;border:1.6px solid #c3cedf;box-sizing:border-box;"></div><div style="left:2027px;top:147.0px;height:23px;line-height:23px;font-family:'Liberation Sans', sans-serif;font-size:17px;font-weight:normal;color:#1e1e1e;white-space:nowrap;">2.35</div><div class="lb" style="left:1894.5px;top:185.0px;height:24px;line-height:24px;color:#222222;-webkit-text-stroke:0.6px #222222;"><i class="c"><i class="s" style="transform:scaleX(0.78);font-family:Liberation Mono,monospace;font-size:17px">G</i></i></div><div style="left:1932px;top:182px;width:85px;height:28px;background:#f0f0f0;border:1.6px solid #c3cedf;box-sizing:border-box;"></div><div style="left:1935px;top:184.0px;height:23px;line-height:23px;font-family:'Liberation Sans', sans-serif;font-size:17px;font-weight:normal;color:#1e1e1e;white-space:nowrap;">4096</div><div style="left:2024px;top:182px;width:85px;height:28px;background:#f0f0f0;border:1.6px solid #c3cedf;box-sizing:border-box;"></div><div style="left:2027px;top:184.0px;height:23px;line-height:23px;font-family:'Liberation Sans', sans-serif;font-size:17px;font-weight:normal;color:#1e1e1e;white-space:nowrap;">1</div><div class="lb" style="left:1894.5px;top:222.0px;height:24px;line-height:24px;color:#222222;-webkit-text-stroke:0.6px #222222;"><i class="c"><i class="s" style="transform:scaleX(0.68)">B</i></i></div><div style="left:1932px;top:219px;width:85px;height:28px;background:#f0f0f0;border:1.6px solid #c3cedf;box-sizing:border-box;"></div><div style="left:1935px;top:221.0px;height:23px;line-height:23px;font-family:'Liberation Sans', sans-serif;font-size:17px;font-weight:normal;color:#1e1e1e;white-space:nowrap;">5475</div><div style="left:2024px;top:219px;width:85px;height:28px;background:#f0f0f0;border:1.6px solid #c3cedf;box-sizing:border-box;"></div><div style="left:2027px;top:221.0px;height:23px;line-height:23px;font-family:'Liberation Sans', sans-serif;font-size:17px;font-weight:normal;color:#1e1e1e;white-space:nowrap;">1.337</div><div class="lb" style="left:1894.5px;top:260.0px;height:24px;line-height:24px;color:#222222;-webkit-text-stroke:0.6px #222222;"><i class="c"><i class="s" style="transform:scaleX(0.68)">C</i></i><i class="c"><i class="s" style="transform:scaleX(0.68)">C</i></i><i class="c"><i class="s" style="transform:scaleX(0.75)">T</i></i></div><div style="left:1932px;top:257px;width:85px;height:28px;background:#f0f0f0;border:1.6px solid #c3cedf;box-sizing:border-box;"></div><div style="left:1935px;top:259.0px;height:23px;line-height:23px;font-family:'Liberation Sans', sans-serif;font-size:17px;font-weight:normal;color:#1e1e1e;white-space:nowrap;">7336</div><div class="lb" style="left:2023.5px;top:261.0px;height:24px;line-height:24px;color:#222222;-webkit-text-stroke:0.6px #222222;"><i class="c"><i class="s" style="transform:scaleX(0.78);font-family:Liberation Mono,monospace;font-size:17px">K</i></i></div><div class="lb" style="left:1895.5px;top:299.0px;height:24px;line-height:24px;color:#222222;-webkit-text-stroke:0.6px #222222;"><i class="c">t</i><i class="c">i</i><i class="c"><i class="s" style="transform:scaleX(0.91)">n</i></i><i class="c">t</i></div><div style="left:1932px;top:296px;width:85px;height:28px;background:#f0f0f0;border:1.6px solid #c3cedf;box-sizing:border-box;"></div><div style="left:1935px;top:298.0px;height:23px;line-height:23px;font-family:'Liberation Sans', sans-serif;font-size:17px;font-weight:normal;color:#1e1e1e;white-space:nowrap;">8</div><div style="left:1932px;top:343px;width:18px;height:18px;background:#fff;border:2px solid #333;box-sizing:border-box;"></div><svg style="left:1932px;top:343px;" width="18" height="18" viewBox="0 0 18 18"><path d="M3.5 9 L7.5 13 L14.5 4.5" fill="none" stroke="#333" stroke-width="1.8"/></svg><div class="lb" style="left:1955.5px;top:340.0px;height:24px;line-height:24px;color:#222222;-webkit-text-stroke:0.6px #222222;"><i class="c"><i class="s" style="transform:scaleX(0.68)">C</i></i><i class="c"><i class="s" style="transform:scaleX(0.68)">C</i></i><i class="c"><i class="s" style="transform:scaleX(0.75)">T</i></i><i class="c"> </i><i class="c"><i class="s" style="transform:scaleX(0.68)">C</i></i><i class="c"><i class="s" style="transform:scaleX(0.91)">u</i></i><i class="c">r</i><i class="c"><i class="s" style="transform:scaleX(0.91)">v</i></i><i class="c">e</i></div><div style="left:1932px;top:373px;width:18px;height:18px;background:#fff;border:2px solid #333;box-sizing:border-box;"></div><div class="lb" style="left:1955.5px;top:371.0px;height:24px;line-height:24px;color:#222222;-webkit-text-stroke:0.6px #222222;"><i class="c"><i class="s" style="transform:scaleX(0.78);font-family:Liberation Mono,monospace;font-size:17px">V</i></i><i class="c">a</i><i class="c">l</i><i class="c">i</i><i class="c"><i class="s" style="transform:scaleX(0.91)">d</i></i><i class="c"> </i><i class="c"><i class="s" style="transform:scaleX(0.78);font-family:Liberation Mono,monospace;font-size:17px">O</i></i><i class="c"><i class="s" style="transform:scaleX(0.91)">n</i></i><i class="c">l</i><i class="c"><i class="s" style="transform:scaleX(0.91)">y</i></i></div><div style="left:1105px;top:475px;width:632px;height:71px;background:linear-gradient(90deg,#000 0px,#000 13px,#0010ff 14px,#0050ff 60px,#0098ff 115px,#00f4ff 180px,#00ffa8 250px,#30ff30 320px,#90ff00 372px,#ffff00 452px,#ffc800 500px,#ff9800 540px,#ff5000 590px,#ff1000 632px);"></div><div style="left:1105px;top:546px;width:632px;height:15px;background:#ffffff;"></div><div style="left:1107px;top:542px;height:24px;line-height:24px;font-family:'Liberation Serif', serif;font-size:16px;color:#333;-webkit-text-stroke:0.3px #333;">0</div><div style="left:1119px;top:542px;height:24px;line-height:24px;font-family:'Liberation Serif', serif;font-size:16px;color:#333;-webkit-text-stroke:0.3px #333;">1</div><div style="left:1415px;top:543.5px;height:21px;line-height:21px;font-family:'Liberation Sans', sans-serif;font-size:15px;font-weight:normal;color:#333;white-space:nowrap;letter-spacing:-0.5px;">128</div><div style="left:1710px;top:543.5px;height:21px;line-height:21px;font-family:'Liberation Sans', sans-serif;font-size:15px;font-weight:normal;color:#333;white-space:nowrap;letter-spacing:-0.5px;">255</div><div style="left:1265px;top:546px;width:14px;height:14px;background:#ff0000;border-radius:50%;"></div><div style="left:1744px;top:475px;width:379px;height:82px;border:1px solid #d5d5d5;box-sizing:border-box;"></div><div style="left:1787px;top:482px;width:151px;height:28px;background:#f0f0f0;border:1.6px solid #c3cedf;box-sizing:border-box;"></div><div style="left:1791px;top:484.5px;height:23px;line-height:23px;font-family:'Liberation Sans', sans-serif;font-size:17px;font-weight:normal;color:#1e1e1e;white-space:nowrap;letter-spacing:-0.6px;">R=37 G=70 B=43</div><div class="lb" style="left:1962.5px;top:485.0px;height:24px;line-height:24px;color:#222222;-webkit-text-stroke:0.6px #222222;"><i class="c"><i class="s" style="transform:scaleX(0.68)">B</i></i><i class="c">l</i><i class="c"><i class="s" style="transform:scaleX(0.91)">o</i></i><i class="c">c</i><i class="c"><i class="s" style="transform:scaleX(0.91)">k</i></i></div><div style="left:2024px;top:482px;width:84px;height:28px;background:#f0f0f0;border:1.6px solid #c3cedf;box-sizing:border-box;"></div><div style="left:2027px;top:484.0px;height:23px;line-height:23px;font-family:'Liberation Sans', sans-serif;font-size:17px;font-weight:normal;color:#1e1e1e;white-space:nowrap;">7, 31</div><div style="left:1787px;top:525px;width:18px;height:18px;background:#ff0000;"></div><div class="lb" style="left:1822.5px;top:523.0px;height:24px;line-height:24px;color:#222222;-webkit-text-stroke:0.6px #222222;"><i class="c"><i class="s" style="transform:scaleX(0.78);font-family:Liberation Mono,monospace;font-size:17px">A</i></i><i class="c"><i class="s" style="transform:scaleX(0.91)">p</i></i><i class="c"><i class="s" style="transform:scaleX(0.91)">p</i></i><i class="c">l</i><i class="c">i</i><i class="c">e</i><i class="c"><i class="s" style="transform:scaleX(0.91)">d</i></i><i class="c"> </i><i class="c"><i class="s" style="transform:scaleX(0.78);font-family:Liberation Mono,monospace;font-size:17px">G</i></i><i class="c">a</i><i class="c">i</i><i class="c"><i class="s" style="transform:scaleX(0.91)">n</i></i></div><div class="lb" style="left:1962.5px;top:523.0px;height:24px;line-height:24px;color:#222222;-webkit-text-stroke:0.6px #222222;"><i class="c"><i class="s" style="transform:scaleX(0.78);font-family:Liberation Mono,monospace;font-size:17px">W</i></i><i class="c">e</i><i class="c">i</i><i class="c"><i class="s" style="transform:scaleX(0.91)">g</i></i><i class="c"><i class="s" style="transform:scaleX(0.91)">h</i></i><i class="c">t</i></div><div style="left:2024px;top:519px;width:84px;height:28px;background:#f0f0f0;border:1.6px solid #c3cedf;box-sizing:border-box;"></div><div style="left:2027px;top:521.0px;height:23px;line-height:23px;font-family:'Liberation Sans', sans-serif;font-size:17px;font-weight:normal;color:#1e1e1e;white-space:nowrap;">64</div><div style="left:1105px;top:575px;width:1018px;height:776px;background:#ffffff;"></div><svg style="left:0px;top:0px;" width="2151" height="1365" viewBox="0 0 2151 1365"><line x1="1181.0" y1="810.5" x2="2112" y2="810.5" stroke="#00e5ee" stroke-width="1.6" stroke-dasharray="3 2"/><line x1="1181.0" y1="1185.9" x2="2112" y2="1185.9" stroke="#00e5ee" stroke-width="1.6" stroke-dasharray="3 2"/><line x1="1483.0" y1="636.6" x2="1483.0" y2="1297.6" stroke="#00e5ee" stroke-width="1.6" stroke-dasharray="3 2"/><line x1="1792.0" y1="636.6" x2="1792.0" y2="1297.6" stroke="#00e5ee" stroke-width="1.6" stroke-dasharray="3 2"/><rect x="1557.0" y="1163.8" width="235.0" height="56.3" fill="none" stroke="#444" stroke-width="1.8"/><rect x="1553.5" y="1105.8" width="169.2" height="58.0" fill="none" stroke="#444" stroke-width="1.8"/><rect x="1572.3" y="1011.1" width="105.8" height="94.8" fill="none" stroke="#444" stroke-width="1.8"/><rect x="1491.2" y="1011.1" width="81.1" height="94.8" fill="none" stroke="#444" stroke-width="1.8"/><rect x="1551.1" y="907.5" width="87.0" height="103.5" fill="none" stroke="#444" stroke-width="1.8"/><rect x="1483.0" y="907.5" width="68.2" height="103.5" fill="none" stroke="#444" stroke-width="1.8"/><rect x="1558.2" y="823.3" width="72.9" height="84.3" fill="none" stroke="#444" stroke-width="1.8"/><rect x="1483.0" y="823.3" width="75.2" height="84.3" fill="none" stroke="#444" stroke-width="1.8"/><rect x="1506.5" y="636.6" width="148.1" height="186.7" fill="none" stroke="#444" stroke-width="1.8"/><rect x="1265.6" y="887.8" width="170.4" height="209.9" fill="none" stroke="#444" stroke-width="1.8"/><path d="M1662.0 1237.2 L1665.6 1243.8 L1658.4 1243.8 Z" fill="#0000ff"/><path d="M1652.7 1227.4 L1656.3 1234.0 L1649.1 1234.0 Z" fill="#0000ff"/><path d="M1643.9 1217.6 L1647.5 1224.2 L1640.3 1224.2 Z" fill="#0000ff"/><path d="M1636.9 1207.8 L1640.5 1214.4 L1633.3 1214.4 Z" fill="#0000ff"/><path d="M1629.9 1198.0 L1633.5 1204.6 L1626.3 1204.6 Z" fill="#0000ff"/><path d="M1623.8 1188.2 L1627.4 1194.8 L1620.2 1194.8 Z" fill="#0000ff"/><path d="M1619.9 1178.4 L1623.5 1185.0 L1616.3 1185.0 Z" fill="#0000ff"/><path d="M1616.1 1168.6 L1619.7 1175.2 L1612.5 1175.2 Z" fill="#0000ff"/><path d="M1612.2 1158.8 L1615.8 1165.4 L1608.6 1165.4 Z" fill="#0000ff"/><path d="M1608.3 1149.0 L1611.9 1155.6 L1604.7 1155.6 Z" fill="#0000ff"/><path d="M1605.1 1139.2 L1608.7 1145.8 L1601.5 1145.8 Z" fill="#0000ff"/><path d="M1601.9 1129.4 L1605.5 1136.0 L1598.3 1136.0 Z" fill="#0000ff"/><path d="M1598.7 1119.6 L1602.3 1126.2 L1595.1 1126.2 Z" fill="#0000ff"/><path d="M1596.0 1109.8 L1599.6 1116.4 L1592.4 1116.4 Z" fill="#0000ff"/><path d="M1593.8 1100.0 L1597.4 1106.6 L1590.2 1106.6 Z" fill="#0000ff"/><path d="M1591.6 1090.2 L1595.2 1096.8 L1588.0 1096.8 Z" fill="#0000ff"/><path d="M1589.6 1080.9 L1593.2 1087.5 L1586.0 1087.5 Z" fill="#0000ff"/><path d="M1587.8 1071.6 L1591.4 1078.2 L1584.2 1078.2 Z" fill="#0000ff"/><path d="M1586.1 1062.3 L1589.7 1068.9 L1582.5 1068.9 Z" fill="#0000ff"/><path d="M1584.3 1053.0 L1587.9 1059.6 L1580.7 1059.6 Z" fill="#0000ff"/><path d="M1582.7 1043.7 L1586.3 1050.3 L1579.1 1050.3 Z" fill="#0000ff"/><path d="M1581.1 1034.4 L1584.7 1041.0 L1577.5 1041.0 Z" fill="#0000ff"/><path d="M1579.5 1025.1 L1583.1 1031.7 L1575.9 1031.7 Z" fill="#0000ff"/><path d="M1577.9 1015.8 L1581.5 1022.4 L1574.3 1022.4 Z" fill="#0000ff"/><path d="M1576.3 1006.5 L1579.9 1013.1 L1572.7 1013.1 Z" fill="#0000ff"/><path d="M1574.7 997.2 L1578.3 1003.8 L1571.1 1003.8 Z" fill="#0000ff"/><path d="M1573.1 987.9 L1576.7 994.5 L1569.5 994.5 Z" fill="#0000ff"/><path d="M1571.9 980.4 L1575.5 987.0 L1568.3 987.0 Z" fill="#0000ff"/><path d="M1571.5 972.9 L1575.1 979.5 L1567.9 979.5 Z" fill="#0000ff"/><path d="M1571.0 965.4 L1574.6 972.0 L1567.4 972.0 Z" fill="#0000ff"/><path d="M1570.5 957.9 L1574.1 964.5 L1566.9 964.5 Z" fill="#0000ff"/><path d="M1570.0 950.4 L1573.6 957.0 L1566.4 957.0 Z" fill="#0000ff"/><path d="M1569.5 942.9 L1573.1 949.5 L1565.9 949.5 Z" fill="#0000ff"/><path d="M1569.0 935.4 L1572.6 942.0 L1565.4 942.0 Z" fill="#0000ff"/><path d="M1568.5 927.9 L1572.1 934.5 L1564.9 934.5 Z" fill="#0000ff"/><path d="M1568.1 920.4 L1571.7 927.0 L1564.5 927.0 Z" fill="#0000ff"/><path d="M1567.6 912.9 L1571.2 919.5 L1564.0 919.5 Z" fill="#0000ff"/><path d="M1567.1 905.4 L1570.7 912.0 L1563.5 912.0 Z" fill="#0000ff"/><path d="M1566.4 897.9 L1570.0 904.5 L1562.8 904.5 Z" fill="#0000ff"/><path d="M1565.7 890.4 L1569.3 897.0 L1562.1 897.0 Z" fill="#0000ff"/><path d="M1565.2 884.4 L1568.8 891.0 L1561.6 891.0 Z" fill="#0000ff"/><path d="M1564.8 878.4 L1568.4 885.0 L1561.2 885.0 Z" fill="#0000ff"/><path d="M1564.4 872.4 L1568.0 879.0 L1560.8 879.0 Z" fill="#0000ff"/><path d="M1564.0 866.4 L1567.6 873.0 L1560.4 873.0 Z" fill="#0000ff"/><path d="M1563.7 860.4 L1567.3 867.0 L1560.1 867.0 Z" fill="#0000ff"/><path d="M1563.3 854.4 L1566.9 861.0 L1559.7 861.0 Z" fill="#0000ff"/><path d="M1563.0 848.4 L1566.6 855.0 L1559.4 855.0 Z" fill="#0000ff"/><path d="M1562.6 842.4 L1566.2 849.0 L1559.0 849.0 Z" fill="#0000ff"/><path d="M1562.2 836.4 L1565.8 843.0 L1558.6 843.0 Z" fill="#0000ff"/><path d="M1561.9 830.4 L1565.5 837.0 L1558.3 837.0 Z" fill="#0000ff"/><path d="M1561.5 824.4 L1565.1 831.0 L1557.9 831.0 Z" fill="#0000ff"/><path d="M1561.1 818.4 L1564.7 825.0 L1557.5 825.0 Z" fill="#0000ff"/><path d="M1561.0 812.4 L1564.6 819.0 L1557.4 819.0 Z" fill="#0000ff"/><path d="M1561.1 806.4 L1564.7 813.0 L1557.5 813.0 Z" fill="#0000ff"/><path d="M1561.1 800.4 L1564.7 807.0 L1557.5 807.0 Z" fill="#0000ff"/><path d="M1561.2 794.4 L1564.8 801.0 L1557.6 801.0 Z" fill="#0000ff"/><path d="M1561.2 791.4 L1564.8 798.0 L1557.6 798.0 Z" fill="#0000ff"/><path d="M1561.2 788.4 L1564.8 795.0 L1557.6 795.0 Z" fill="#0000ff"/><path d="M1561.3 785.4 L1564.9 792.0 L1557.7 792.0 Z" fill="#0000ff"/><path d="M1561.3 782.4 L1564.9 789.0 L1557.7 789.0 Z" fill="#0000ff"/><path d="M1561.3 779.4 L1564.9 786.0 L1557.7 786.0 Z" fill="#0000ff"/><path d="M1561.3 776.4 L1564.9 783.0 L1557.7 783.0 Z" fill="#0000ff"/><path d="M1561.4 773.4 L1565.0 780.0 L1557.8 780.0 Z" fill="#0000ff"/><path d="M1561.4 770.4 L1565.0 777.0 L1557.8 777.0 Z" fill="#0000ff"/><path d="M1561.4 767.4 L1565.0 774.0 L1557.8 774.0 Z" fill="#0000ff"/><path d="M1561.4 764.4 L1565.0 771.0 L1557.8 771.0 Z" fill="#0000ff"/><path d="M1561.5 761.4 L1565.1 768.0 L1557.9 768.0 Z" fill="#0000ff"/><path d="M1561.5 758.4 L1565.1 765.0 L1557.9 765.0 Z" fill="#0000ff"/><path d="M1561.5 755.4 L1565.1 762.0 L1557.9 762.0 Z" fill="#0000ff"/><path d="M1561.5 752.4 L1565.1 759.0 L1557.9 759.0 Z" fill="#0000ff"/><path d="M1561.6 749.4 L1565.2 756.0 L1558.0 756.0 Z" fill="#0000ff"/><path d="M1561.6 746.4 L1565.2 753.0 L1558.0 753.0 Z" fill="#0000ff"/><path d="M1561.6 743.4 L1565.2 750.0 L1558.0 750.0 Z" fill="#0000ff"/><path d="M1561.6 740.4 L1565.2 747.0 L1558.0 747.0 Z" fill="#0000ff"/><path d="M1561.7 737.4 L1565.3 744.0 L1558.1 744.0 Z" fill="#0000ff"/><path d="M1561.7 734.4 L1565.3 741.0 L1558.1 741.0 Z" fill="#0000ff"/><path d="M1561.7 731.4 L1565.3 738.0 L1558.1 738.0 Z" fill="#0000ff"/><path d="M1561.7 728.4 L1565.3 735.0 L1558.1 735.0 Z" fill="#0000ff"/><path d="M1561.8 725.4 L1565.4 732.0 L1558.2 732.0 Z" fill="#0000ff"/><path d="M1561.8 722.4 L1565.4 729.0 L1558.2 729.0 Z" fill="#0000ff"/><path d="M1561.8 719.4 L1565.4 726.0 L1558.2 726.0 Z" fill="#0000ff"/><path d="M1561.8 716.4 L1565.4 723.0 L1558.2 723.0 Z" fill="#0000ff"/><path d="M1561.9 713.4 L1565.5 720.0 L1558.3 720.0 Z" fill="#0000ff"/><path d="M1561.9 710.4 L1565.5 717.0 L1558.3 717.0 Z" fill="#0000ff"/><path d="M1561.9 707.4 L1565.5 714.0 L1558.3 714.0 Z" fill="#0000ff"/><path d="M1561.9 704.4 L1565.5 711.0 L1558.3 711.0 Z" fill="#0000ff"/><path d="M1562.0 701.4 L1565.6 708.0 L1558.4 708.0 Z" fill="#0000ff"/><path d="M1562.0 698.4 L1565.6 705.0 L1558.4 705.0 Z" fill="#0000ff"/><path d="M1562.0 695.4 L1565.6 702.0 L1558.4 702.0 Z" fill="#0000ff"/><path d="M1562.0 692.4 L1565.6 699.0 L1558.4 699.0 Z" fill="#0000ff"/><path d="M1562.1 689.4 L1565.7 696.0 L1558.5 696.0 Z" fill="#0000ff"/><path d="M1562.1 686.4 L1565.7 693.0 L1558.5 693.0 Z" fill="#0000ff"/><path d="M1562.1 683.4 L1565.7 690.0 L1558.5 690.0 Z" fill="#0000ff"/><path d="M1562.1 680.4 L1565.7 687.0 L1558.5 687.0 Z" fill="#0000ff"/><path d="M1562.2 677.4 L1565.8 684.0 L1558.6 684.0 Z" fill="#0000ff"/><path d="M1562.2 674.4 L1565.8 681.0 L1558.6 681.0 Z" fill="#0000ff"/><path d="M1562.2 671.4 L1565.8 678.0 L1558.6 678.0 Z" fill="#0000ff"/><path d="M1562.2 668.4 L1565.8 675.0 L1558.6 675.0 Z" fill="#0000ff"/><path d="M1562.3 665.4 L1565.9 672.0 L1558.7 672.0 Z" fill="#0000ff"/><path d="M1562.3 662.4 L1565.9 669.0 L1558.7 669.0 Z" fill="#0000ff"/><path d="M1562.3 659.4 L1565.9 666.0 L1558.7 666.0 Z" fill="#0000ff"/><path d="M1562.3 656.4 L1565.9 663.0 L1558.7 663.0 Z" fill="#0000ff"/><path d="M1562.4 653.4 L1566.0 660.0 L1558.8 660.0 Z" fill="#0000ff"/><path d="M1562.4 650.4 L1566.0 657.0 L1558.8 657.0 Z" fill="#0000ff"/><path d="M1562.4 647.4 L1566.0 654.0 L1558.8 654.0 Z" fill="#0000ff"/><path d="M1562.4 644.4 L1566.0 651.0 L1558.8 651.0 Z" fill="#0000ff"/><path d="M1562.5 641.4 L1566.1 648.0 L1558.9 648.0 Z" fill="#0000ff"/><path d="M1562.5 638.4 L1566.1 645.0 L1558.9 645.0 Z" fill="#0000ff"/><path d="M1562.5 635.4 L1566.1 642.0 L1558.9 642.0 Z" fill="#0000ff"/><path d="M1562.6 632.4 L1566.2 639.0 L1559.0 639.0 Z" fill="#0000ff"/><path d="M1562.7 629.4 L1566.3 636.0 L1559.1 636.0 Z" fill="#0000ff"/><path d="M1562.8 626.4 L1566.4 633.0 L1559.2 633.0 Z" fill="#0000ff"/><path d="M1562.8 623.4 L1566.4 630.0 L1559.2 630.0 Z" fill="#0000ff"/><path d="M1562.9 620.4 L1566.5 627.0 L1559.3 627.0 Z" fill="#0000ff"/><path d="M1563.0 617.4 L1566.6 624.0 L1559.4 624.0 Z" fill="#0000ff"/><path d="M1732.0 1226.8 L1735.0 1230.0 L1732.0 1233.2 L1729.0 1230.0 Z" fill="#8a2be2"/><path d="M1714.2 1217.0 L1717.2 1220.2 L1714.2 1223.4 L1711.2 1220.2 Z" fill="#8a2be2"/><path d="M1699.4 1207.2 L1702.4 1210.4 L1699.4 1213.6 L1696.4 1210.4 Z" fill="#8a2be2"/><path d="M1689.6 1197.4 L1692.6 1200.6 L1689.6 1203.8 L1686.6 1200.6 Z" fill="#8a2be2"/><path d="M1679.8 1187.6 L1682.8 1190.8 L1679.8 1194.0 L1676.8 1190.8 Z" fill="#8a2be2"/><path d="M1670.9 1177.8 L1673.9 1181.0 L1670.9 1184.2 L1667.9 1181.0 Z" fill="#8a2be2"/><path d="M1662.9 1168.0 L1665.9 1171.2 L1662.9 1174.4 L1659.9 1171.2 Z" fill="#8a2be2"/><path d="M1655.0 1158.2 L1658.0 1161.4 L1655.0 1164.6 L1652.0 1161.4 Z" fill="#8a2be2"/><path d="M1648.5 1148.4 L1651.5 1151.6 L1648.5 1154.8 L1645.5 1151.6 Z" fill="#8a2be2"/><path d="M1642.6 1138.6 L1645.6 1141.8 L1642.6 1145.0 L1639.6 1141.8 Z" fill="#8a2be2"/><path d="M1636.6 1128.8 L1639.6 1132.0 L1636.6 1135.2 L1633.6 1132.0 Z" fill="#8a2be2"/><path d="M1633.2 1119.0 L1636.2 1122.2 L1633.2 1125.4 L1630.2 1122.2 Z" fill="#8a2be2"/><path d="M1630.0 1109.2 L1633.0 1112.4 L1630.0 1115.6 L1627.0 1112.4 Z" fill="#8a2be2"/><path d="M1626.9 1099.4 L1629.9 1102.6 L1626.9 1105.8 L1623.9 1102.6 Z" fill="#8a2be2"/><path d="M1623.7 1089.6 L1626.7 1092.8 L1623.7 1096.0 L1620.7 1092.8 Z" fill="#8a2be2"/><path d="M1620.7 1080.3 L1623.7 1083.5 L1620.7 1086.7 L1617.7 1083.5 Z" fill="#8a2be2"/><path d="M1617.8 1071.0 L1620.8 1074.2 L1617.8 1077.4 L1614.8 1074.2 Z" fill="#8a2be2"/><path d="M1615.3 1061.7 L1618.3 1064.9 L1615.3 1068.1 L1612.3 1064.9 Z" fill="#8a2be2"/><path d="M1612.8 1052.4 L1615.8 1055.6 L1612.8 1058.8 L1609.8 1055.6 Z" fill="#8a2be2"/><path d="M1610.3 1043.1 L1613.3 1046.3 L1610.3 1049.5 L1607.3 1046.3 Z" fill="#8a2be2"/><path d="M1607.8 1033.8 L1610.8 1037.0 L1607.8 1040.2 L1604.8 1037.0 Z" fill="#8a2be2"/><path d="M1605.3 1024.5 L1608.3 1027.7 L1605.3 1030.9 L1602.3 1027.7 Z" fill="#8a2be2"/><path d="M1602.9 1015.2 L1605.9 1018.4 L1602.9 1021.6 L1599.9 1018.4 Z" fill="#8a2be2"/><path d="M1601.4 1005.9 L1604.4 1009.1 L1601.4 1012.3 L1598.4 1009.1 Z" fill="#8a2be2"/><path d="M1599.9 996.6 L1602.9 999.8 L1599.9 1003.0 L1596.9 999.8 Z" fill="#8a2be2"/><path d="M1598.6 989.1 L1601.6 992.3 L1598.6 995.5 L1595.6 992.3 Z" fill="#8a2be2"/><path d="M1597.4 981.6 L1600.4 984.8 L1597.4 988.0 L1594.4 984.8 Z" fill="#8a2be2"/><path d="M1596.2 974.1 L1599.2 977.3 L1596.2 980.5 L1593.2 977.3 Z" fill="#8a2be2"/><path d="M1594.9 966.6 L1597.9 969.8 L1594.9 973.0 L1591.9 969.8 Z" fill="#8a2be2"/><path d="M1593.8 959.1 L1596.8 962.3 L1593.8 965.5 L1590.8 962.3 Z" fill="#8a2be2"/><path d="M1593.2 951.6 L1596.2 954.8 L1593.2 958.0 L1590.2 954.8 Z" fill="#8a2be2"/><path d="M1592.5 944.1 L1595.5 947.3 L1592.5 950.5 L1589.5 947.3 Z" fill="#8a2be2"/><path d="M1591.8 936.6 L1594.8 939.8 L1591.8 943.0 L1588.8 939.8 Z" fill="#8a2be2"/><path d="M1591.2 929.1 L1594.2 932.3 L1591.2 935.5 L1588.2 932.3 Z" fill="#8a2be2"/><path d="M1590.5 921.6 L1593.5 924.8 L1590.5 928.0 L1587.5 924.8 Z" fill="#8a2be2"/><path d="M1589.8 914.1 L1592.8 917.3 L1589.8 920.5 L1586.8 917.3 Z" fill="#8a2be2"/><path d="M1589.2 906.6 L1592.2 909.8 L1589.2 913.0 L1586.2 909.8 Z" fill="#8a2be2"/><path d="M1588.4 899.1 L1591.4 902.3 L1588.4 905.5 L1585.4 902.3 Z" fill="#8a2be2"/><path d="M1587.6 891.6 L1590.6 894.8 L1587.6 898.0 L1584.6 894.8 Z" fill="#8a2be2"/><path d="M1586.9 885.6 L1589.9 888.8 L1586.9 892.0 L1583.9 888.8 Z" fill="#8a2be2"/><path d="M1586.3 879.6 L1589.3 882.8 L1586.3 886.0 L1583.3 882.8 Z" fill="#8a2be2"/><path d="M1585.8 873.6 L1588.8 876.8 L1585.8 880.0 L1582.8 876.8 Z" fill="#8a2be2"/><path d="M1585.4 867.6 L1588.4 870.8 L1585.4 874.0 L1582.4 870.8 Z" fill="#8a2be2"/><path d="M1585.0 861.6 L1588.0 864.8 L1585.0 868.0 L1582.0 864.8 Z" fill="#8a2be2"/><path d="M1584.6 855.6 L1587.6 858.8 L1584.6 862.0 L1581.6 858.8 Z" fill="#8a2be2"/><path d="M1584.2 849.6 L1587.2 852.8 L1584.2 856.0 L1581.2 852.8 Z" fill="#8a2be2"/><path d="M1583.8 843.6 L1586.8 846.8 L1583.8 850.0 L1580.8 846.8 Z" fill="#8a2be2"/><path d="M1583.4 837.6 L1586.4 840.8 L1583.4 844.0 L1580.4 840.8 Z" fill="#8a2be2"/><path d="M1583.0 831.6 L1586.0 834.8 L1583.0 838.0 L1580.0 834.8 Z" fill="#8a2be2"/><path d="M1582.6 825.6 L1585.6 828.8 L1582.6 832.0 L1579.6 828.8 Z" fill="#8a2be2"/><path d="M1582.2 819.6 L1585.2 822.8 L1582.2 826.0 L1579.2 822.8 Z" fill="#8a2be2"/><path d="M1582.0 813.6 L1585.0 816.8 L1582.0 820.0 L1579.0 816.8 Z" fill="#8a2be2"/><path d="M1581.9 807.6 L1584.9 810.8 L1581.9 814.0 L1578.9 810.8 Z" fill="#8a2be2"/><path d="M1581.8 801.6 L1584.8 804.8 L1581.8 808.0 L1578.8 804.8 Z" fill="#8a2be2"/><path d="M1581.8 795.6 L1584.8 798.8 L1581.8 802.0 L1578.8 798.8 Z" fill="#8a2be2"/><path d="M1581.7 792.6 L1584.7 795.8 L1581.7 799.0 L1578.7 795.8 Z" fill="#8a2be2"/><path d="M1581.7 789.6 L1584.7 792.8 L1581.7 796.0 L1578.7 792.8 Z" fill="#8a2be2"/><path d="M1581.7 786.6 L1584.7 789.8 L1581.7 793.0 L1578.7 789.8 Z" fill="#8a2be2"/><path d="M1581.6 783.6 L1584.6 786.8 L1581.6 790.0 L1578.6 786.8 Z" fill="#8a2be2"/><path d="M1581.6 780.6 L1584.6 783.8 L1581.6 787.0 L1578.6 783.8 Z" fill="#8a2be2"/><path d="M1581.6 777.6 L1584.6 780.8 L1581.6 784.0 L1578.6 780.8 Z" fill="#8a2be2"/><path d="M1581.5 774.6 L1584.5 777.8 L1581.5 781.0 L1578.5 777.8 Z" fill="#8a2be2"/><path d="M1581.5 771.6 L1584.5 774.8 L1581.5 778.0 L1578.5 774.8 Z" fill="#8a2be2"/><path d="M1581.5 768.6 L1584.5 771.8 L1581.5 775.0 L1578.5 771.8 Z" fill="#8a2be2"/><path d="M1581.4 765.6 L1584.4 768.8 L1581.4 772.0 L1578.4 768.8 Z" fill="#8a2be2"/><path d="M1581.4 762.6 L1584.4 765.8 L1581.4 769.0 L1578.4 765.8 Z" fill="#8a2be2"/><path d="M1581.4 759.6 L1584.4 762.8 L1581.4 766.0 L1578.4 762.8 Z" fill="#8a2be2"/><path d="M1581.3 756.6 L1584.3 759.8 L1581.3 763.0 L1578.3 759.8 Z" fill="#8a2be2"/><path d="M1581.3 753.6 L1584.3 756.8 L1581.3 760.0 L1578.3 756.8 Z" fill="#8a2be2"/><path d="M1581.3 750.6 L1584.3 753.8 L1581.3 757.0 L1578.3 753.8 Z" fill="#8a2be2"/><path d="M1581.2 747.6 L1584.2 750.8 L1581.2 754.0 L1578.2 750.8 Z" fill="#8a2be2"/><path d="M1581.2 744.6 L1584.2 747.8 L1581.2 751.0 L1578.2 747.8 Z" fill="#8a2be2"/><path d="M1581.2 741.6 L1584.2 744.8 L1581.2 748.0 L1578.2 744.8 Z" fill="#8a2be2"/><path d="M1581.1 738.6 L1584.1 741.8 L1581.1 745.0 L1578.1 741.8 Z" fill="#8a2be2"/><path d="M1581.1 735.6 L1584.1 738.8 L1581.1 742.0 L1578.1 738.8 Z" fill="#8a2be2"/><path d="M1581.1 732.6 L1584.1 735.8 L1581.1 739.0 L1578.1 735.8 Z" fill="#8a2be2"/><path d="M1581.0 729.6 L1584.0 732.8 L1581.0 736.0 L1578.0 732.8 Z" fill="#8a2be2"/><path d="M1581.0 726.6 L1584.0 729.8 L1581.0 733.0 L1578.0 729.8 Z" fill="#8a2be2"/><path d="M1581.1 723.6 L1584.1 726.8 L1581.1 730.0 L1578.1 726.8 Z" fill="#8a2be2"/><path d="M1581.1 720.6 L1584.1 723.8 L1581.1 727.0 L1578.1 723.8 Z" fill="#8a2be2"/><path d="M1581.2 717.6 L1584.2 720.8 L1581.2 724.0 L1578.2 720.8 Z" fill="#8a2be2"/><path d="M1581.2 714.6 L1584.2 717.8 L1581.2 721.0 L1578.2 717.8 Z" fill="#8a2be2"/><path d="M1581.3 711.6 L1584.3 714.8 L1581.3 718.0 L1578.3 714.8 Z" fill="#8a2be2"/><path d="M1581.4 708.6 L1584.4 711.8 L1581.4 715.0 L1578.4 711.8 Z" fill="#8a2be2"/><path d="M1581.4 705.6 L1584.4 708.8 L1581.4 712.0 L1578.4 708.8 Z" fill="#8a2be2"/><path d="M1581.5 702.6 L1584.5 705.8 L1581.5 709.0 L1578.5 705.8 Z" fill="#8a2be2"/><path d="M1581.5 699.6 L1584.5 702.8 L1581.5 706.0 L1578.5 702.8 Z" fill="#8a2be2"/><path d="M1581.6 696.6 L1584.6 699.8 L1581.6 703.0 L1578.6 699.8 Z" fill="#8a2be2"/><path d="M1581.7 693.6 L1584.7 696.8 L1581.7 700.0 L1578.7 696.8 Z" fill="#8a2be2"/><path d="M1581.7 690.6 L1584.7 693.8 L1581.7 697.0 L1578.7 693.8 Z" fill="#8a2be2"/><path d="M1581.8 687.6 L1584.8 690.8 L1581.8 694.0 L1578.8 690.8 Z" fill="#8a2be2"/><path d="M1581.8 684.6 L1584.8 687.8 L1581.8 691.0 L1578.8 687.8 Z" fill="#8a2be2"/><path d="M1581.9 681.6 L1584.9 684.8 L1581.9 688.0 L1578.9 684.8 Z" fill="#8a2be2"/><path d="M1582.0 678.6 L1585.0 681.8 L1582.0 685.0 L1579.0 681.8 Z" fill="#8a2be2"/><path d="M1582.0 675.6 L1585.0 678.8 L1582.0 682.0 L1579.0 678.8 Z" fill="#8a2be2"/><path d="M1582.0 672.6 L1585.0 675.8 L1582.0 679.0 L1579.0 675.8 Z" fill="#8a2be2"/><path d="M1582.0 669.6 L1585.0 672.8 L1582.0 676.0 L1579.0 672.8 Z" fill="#8a2be2"/><path d="M1582.0 666.6 L1585.0 669.8 L1582.0 673.0 L1579.0 669.8 Z" fill="#8a2be2"/><path d="M1582.0 663.6 L1585.0 666.8 L1582.0 670.0 L1579.0 666.8 Z" fill="#8a2be2"/><path d="M1582.0 660.6 L1585.0 663.8 L1582.0 667.0 L1579.0 663.8 Z" fill="#8a2be2"/><path d="M1582.0 657.6 L1585.0 660.8 L1582.0 664.0 L1579.0 660.8 Z" fill="#8a2be2"/><path d="M1582.0 654.6 L1585.0 657.8 L1582.0 661.0 L1579.0 657.8 Z" fill="#8a2be2"/><path d="M1582.0 651.6 L1585.0 654.8 L1582.0 658.0 L1579.0 654.8 Z" fill="#8a2be2"/><path d="M1582.0 648.6 L1585.0 651.8 L1582.0 655.0 L1579.0 651.8 Z" fill="#8a2be2"/><path d="M1582.0 645.6 L1585.0 648.8 L1582.0 652.0 L1579.0 648.8 Z" fill="#8a2be2"/><path d="M1582.0 642.6 L1585.0 645.8 L1582.0 649.0 L1579.0 645.8 Z" fill="#8a2be2"/><path d="M1582.0 639.6 L1585.0 642.8 L1582.0 646.0 L1579.0 642.8 Z" fill="#8a2be2"/><path d="M1582.0 636.6 L1585.0 639.8 L1582.0 643.0 L1579.0 639.8 Z" fill="#8a2be2"/><path d="M1582.0 633.6 L1585.0 636.8 L1582.0 640.0 L1579.0 636.8 Z" fill="#8a2be2"/><circle cx="1799.0" cy="1221.0" r="3.6" fill="#6a5acd"/><circle cx="1773.2" cy="1211.2" r="3.6" fill="#6a5acd"/><circle cx="1752.6" cy="1201.4" r="3.6" fill="#6a5acd"/><circle cx="1736.6" cy="1191.6" r="3.6" fill="#6a5acd"/><circle cx="1723.1" cy="1181.8" r="3.6" fill="#6a5acd"/><circle cx="1711.0" cy="1172.0" r="3.6" fill="#6a5acd"/><circle cx="1701.5" cy="1162.2" r="3.6" fill="#6a5acd"/><circle cx="1692.9" cy="1152.4" r="3.6" fill="#6a5acd"/><circle cx="1686.0" cy="1142.6" r="3.6" fill="#6a5acd"/><circle cx="1678.8" cy="1132.8" r="3.6" fill="#6a5acd"/><circle cx="1670.8" cy="1123.0" r="3.6" fill="#6a5acd"/><circle cx="1663.6" cy="1113.2" r="3.6" fill="#6a5acd"/><circle cx="1658.8" cy="1103.4" r="3.6" fill="#6a5acd"/><circle cx="1654.7" cy="1093.6" r="3.6" fill="#6a5acd"/><circle cx="1650.9" cy="1084.3" r="3.6" fill="#6a5acd"/><circle cx="1647.2" cy="1075.0" r="3.6" fill="#6a5acd"/><circle cx="1643.8" cy="1065.7" r="3.6" fill="#6a5acd"/><circle cx="1640.5" cy="1056.4" r="3.6" fill="#6a5acd"/><circle cx="1637.5" cy="1047.1" r="3.6" fill="#6a5acd"/><circle cx="1634.5" cy="1037.8" r="3.6" fill="#6a5acd"/><circle cx="1631.8" cy="1028.5" r="3.6" fill="#6a5acd"/><circle cx="1629.2" cy="1019.2" r="3.6" fill="#6a5acd"/><circle cx="1626.6" cy="1009.9" r="3.6" fill="#6a5acd"/><circle cx="1624.2" cy="1000.6" r="3.6" fill="#6a5acd"/><circle cx="1621.7" cy="991.3" r="3.6" fill="#6a5acd"/><circle cx="1619.8" cy="983.8" r="3.6" fill="#6a5acd"/><circle cx="1618.3" cy="976.3" r="3.6" fill="#6a5acd"/><circle cx="1616.8" cy="968.8" r="3.6" fill="#6a5acd"/><circle cx="1615.3" cy="961.3" r="3.6" fill="#6a5acd"/><circle cx="1613.8" cy="953.8" r="3.6" fill="#6a5acd"/><circle cx="1612.7" cy="946.3" r="3.6" fill="#6a5acd"/><circle cx="1612.0" cy="938.8" r="3.6" fill="#6a5acd"/><circle cx="1611.2" cy="931.3" r="3.6" fill="#6a5acd"/><circle cx="1610.5" cy="923.8" r="3.6" fill="#6a5acd"/><circle cx="1609.8" cy="916.3" r="3.6" fill="#6a5acd"/><circle cx="1609.1" cy="908.8" r="3.6" fill="#6a5acd"/><circle cx="1608.4" cy="901.3" r="3.6" fill="#6a5acd"/><circle cx="1607.7" cy="893.8" r="3.6" fill="#6a5acd"/><circle cx="1607.2" cy="887.8" r="3.6" fill="#6a5acd"/><circle cx="1606.7" cy="881.8" r="3.6" fill="#6a5acd"/><circle cx="1606.2" cy="875.8" r="3.6" fill="#6a5acd"/><circle cx="1605.8" cy="869.8" r="3.6" fill="#6a5acd"/><circle cx="1605.3" cy="863.8" r="3.6" fill="#6a5acd"/><circle cx="1604.9" cy="857.8" r="3.6" fill="#6a5acd"/><circle cx="1604.4" cy="851.8" r="3.6" fill="#6a5acd"/><circle cx="1604.0" cy="845.8" r="3.6" fill="#6a5acd"/><circle cx="1603.5" cy="839.8" r="3.6" fill="#6a5acd"/><circle cx="1603.0" cy="833.8" r="3.6" fill="#6a5acd"/><circle cx="1602.6" cy="827.8" r="3.6" fill="#6a5acd"/><circle cx="1602.1" cy="821.8" r="3.6" fill="#6a5acd"/><circle cx="1602.0" cy="815.8" r="3.6" fill="#6a5acd"/><circle cx="1602.1" cy="809.8" r="3.6" fill="#6a5acd"/><circle cx="1602.2" cy="803.8" r="3.6" fill="#6a5acd"/><circle cx="1602.3" cy="797.8" r="3.6" fill="#6a5acd"/><circle cx="1602.3" cy="794.8" r="3.6" fill="#6a5acd"/><circle cx="1602.3" cy="791.8" r="3.6" fill="#6a5acd"/><circle cx="1602.4" cy="788.8" r="3.6" fill="#6a5acd"/><circle cx="1602.4" cy="785.8" r="3.6" fill="#6a5acd"/><circle cx="1602.4" cy="782.8" r="3.6" fill="#6a5acd"/><circle cx="1602.5" cy="779.8" r="3.6" fill="#6a5acd"/><circle cx="1602.5" cy="776.8" r="3.6" fill="#6a5acd"/><circle cx="1602.5" cy="773.8" r="3.6" fill="#6a5acd"/><circle cx="1602.6" cy="770.8" r="3.6" fill="#6a5acd"/><circle cx="1602.6" cy="767.8" r="3.6" fill="#6a5acd"/><circle cx="1602.6" cy="764.8" r="3.6" fill="#6a5acd"/><circle cx="1602.7" cy="761.8" r="3.6" fill="#6a5acd"/><circle cx="1602.7" cy="758.8" r="3.6" fill="#6a5acd"/><circle cx="1602.7" cy="755.8" r="3.6" fill="#6a5acd"/><circle cx="1602.8" cy="752.8" r="3.6" fill="#6a5acd"/><circle cx="1602.8" cy="749.8" r="3.6" fill="#6a5acd"/><circle cx="1602.8" cy="746.8" r="3.6" fill="#6a5acd"/><circle cx="1602.9" cy="743.8" r="3.6" fill="#6a5acd"/><circle cx="1602.9" cy="740.8" r="3.6" fill="#6a5acd"/><circle cx="1602.9" cy="737.8" r="3.6" fill="#6a5acd"/><circle cx="1603.0" cy="734.8" r="3.6" fill="#6a5acd"/><circle cx="1603.0" cy="731.8" r="3.6" fill="#6a5acd"/><circle cx="1603.0" cy="728.8" r="3.6" fill="#6a5acd"/><circle cx="1603.1" cy="725.8" r="3.6" fill="#6a5acd"/><circle cx="1603.1" cy="722.8" r="3.6" fill="#6a5acd"/><circle cx="1603.2" cy="719.8" r="3.6" fill="#6a5acd"/><circle cx="1603.2" cy="716.8" r="3.6" fill="#6a5acd"/><circle cx="1603.3" cy="713.8" r="3.6" fill="#6a5acd"/><circle cx="1603.3" cy="710.8" r="3.6" fill="#6a5acd"/><circle cx="1603.4" cy="707.8" r="3.6" fill="#6a5acd"/><circle cx="1603.4" cy="704.8" r="3.6" fill="#6a5acd"/><circle cx="1603.5" cy="701.8" r="3.6" fill="#6a5acd"/><circle cx="1603.5" cy="698.8" r="3.6" fill="#6a5acd"/><circle cx="1603.5" cy="695.8" r="3.6" fill="#6a5acd"/><circle cx="1603.6" cy="692.8" r="3.6" fill="#6a5acd"/><circle cx="1603.6" cy="689.8" r="3.6" fill="#6a5acd"/><circle cx="1603.7" cy="686.8" r="3.6" fill="#6a5acd"/><circle cx="1603.7" cy="683.8" r="3.6" fill="#6a5acd"/><circle cx="1603.8" cy="680.8" r="3.6" fill="#6a5acd"/><circle cx="1603.8" cy="677.8" r="3.6" fill="#6a5acd"/><circle cx="1603.9" cy="674.8" r="3.6" fill="#6a5acd"/><circle cx="1603.9" cy="671.8" r="3.6" fill="#6a5acd"/><circle cx="1604.0" cy="668.8" r="3.6" fill="#6a5acd"/><circle cx="1604.0" cy="665.8" r="3.6" fill="#6a5acd"/><circle cx="1604.0" cy="662.8" r="3.6" fill="#6a5acd"/><circle cx="1604.0" cy="659.8" r="3.6" fill="#6a5acd"/><circle cx="1604.0" cy="656.8" r="3.6" fill="#6a5acd"/><circle cx="1604.0" cy="653.8" r="3.6" fill="#6a5acd"/><rect x="1576" y="922" width="10" height="10" fill="#ff0000"/><path d="M1575 958 L1581 946 L1585 952 L1590 944 L1588 958 Z" fill="#8fc0e8"/><line x1="1181.0" y1="589" x2="1181.0" y2="1297.6" stroke="#444" stroke-width="1.8"/><line x1="1181.0" y1="1297.6" x2="2113" y2="1297.6" stroke="#444" stroke-width="1.8"/><line x1="1170.0" y1="1297.6" x2="1181.0" y2="1297.6" stroke="#444" stroke-width="1.6"/><line x1="1170.0" y1="1156.2" x2="1181.0" y2="1156.2" stroke="#444" stroke-width="1.6"/><line x1="1170.0" y1="1014.8" x2="1181.0" y2="1014.8" stroke="#444" stroke-width="1.6"/><line x1="1170.0" y1="873.3" x2="1181.0" y2="873.3" stroke="#444" stroke-width="1.6"/><line x1="1170.0" y1="731.9" x2="1181.0" y2="731.9" stroke="#444" stroke-width="1.6"/><line x1="1170.0" y1="590.5" x2="1181.0" y2="590.5" stroke="#444" stroke-width="1.6"/><line x1="1181.0" y1="1297.6" x2="1181.0" y2="1304.6" stroke="#444" stroke-width="1.6"/><line x1="1416.0" y1="1297.6" x2="1416.0" y2="1304.6" stroke="#444" stroke-width="1.6"/><line x1="1651.0" y1="1297.6" x2="1651.0" y2="1304.6" stroke="#444" stroke-width="1.6"/><line x1="1886.0" y1="1297.6" x2="1886.0" y2="1304.6" stroke="#444" stroke-width="1.6"/></svg><div style="left:1567.0px;top:1152.3px;height:23px;line-height:23px;font-family:'Liberation Sans', sans-serif;font-size:17px;font-weight:normal;color:#333;white-space:nowrap;letter-spacing:-0.8px;">ROI 0</div><div style="left:1563.475px;top:1094.3px;height:23px;line-height:23px;font-family:'Liberation Sans', sans-serif;font-size:17px;font-weight:normal;color:#333;white-space:nowrap;letter-spacing:-0.8px;">ROI 1</div><div style="left:1582.275px;top:999.6px;height:23px;line-height:23px;font-family:'Liberation Sans', sans-serif;font-size:17px;font-weight:normal;color:#333;white-space:nowrap;letter-spacing:-0.8px;">ROI 2</div><div style="left:1501.2px;top:999.6px;height:23px;line-height:23px;font-family:'Liberation Sans', sans-serif;font-size:17px;font-weight:normal;color:#333;white-space:nowrap;letter-spacing:-0.8px;">ROI 3</div><div style="left:1561.125px;top:896.0px;height:23px;line-height:23px;font-family:'Liberation Sans', sans-serif;font-size:17px;font-weight:normal;color:#333;white-space:nowrap;letter-spacing:-0.8px;">ROI 4</div><div style="left:1492.975px;top:896.0px;height:23px;line-height:23px;font-family:'Liberation Sans', sans-serif;font-size:17px;font-weight:normal;color:#333;white-space:nowrap;letter-spacing:-0.8px;">ROI 5</div><div style="left:1568.175px;top:811.8px;height:23px;line-height:23px;font-family:'Liberation Sans', sans-serif;font-size:17px;font-weight:normal;color:#333;white-space:nowrap;letter-spacing:-0.8px;">ROI 6</div><div style="left:1492.975px;top:811.8px;height:23px;line-height:23px;font-family:'Liberation Sans', sans-serif;font-size:17px;font-weight:normal;color:#333;white-space:nowrap;letter-spacing:-0.8px;">ROI 7</div><div style="left:1516.475px;top:625.1px;height:23px;line-height:23px;font-family:'Liberation Sans', sans-serif;font-size:17px;font-weight:normal;color:#333;white-space:nowrap;letter-spacing:-0.8px;">ROI 8</div><div style="left:1275.6px;top:876.3px;height:23px;line-height:23px;font-family:'Liberation Sans', sans-serif;font-size:17px;font-weight:normal;color:#333;white-space:nowrap;letter-spacing:-0.8px;">ROI G</div><div style="left:1100px;top:1285.6px;width:66px;height:24px;line-height:24px;text-align:right;font-family:'Liberation Sans', sans-serif;font-size:17.5px;color:#333;letter-spacing:-0.2px;">0</div><div style="left:1100px;top:1144.2px;width:66px;height:24px;line-height:24px;text-align:right;font-family:'Liberation Sans', sans-serif;font-size:17.5px;color:#333;letter-spacing:-0.2px;">500</div><div style="left:1100px;top:1002.8px;width:66px;height:24px;line-height:24px;text-align:right;font-family:'Liberation Sans', sans-serif;font-size:17.5px;color:#333;letter-spacing:-0.2px;">1000</div><div style="left:1100px;top:861.3px;width:66px;height:24px;line-height:24px;text-align:right;font-family:'Liberation Sans', sans-serif;font-size:17.5px;color:#333;letter-spacing:-0.2px;">1500</div><div style="left:1100px;top:719.9px;width:66px;height:24px;line-height:24px;text-align:right;font-family:'Liberation Sans', sans-serif;font-size:17.5px;color:#333;letter-spacing:-0.2px;">2000</div><div style="left:1100px;top:578.5px;width:66px;height:24px;line-height:24px;text-align:right;font-family:'Liberation Sans', sans-serif;font-size:17.5px;color:#333;letter-spacing:-0.2px;">2500</div><div style="left:1141.0px;top:1309.0px;width:80.0px;text-align:center;height:24px;line-height:24px;font-family:'Liberation Sans', sans-serif;font-size:17.5px;font-weight:normal;color:#333;white-space:nowrap;letter-spacing:-0.2px;">-1</div><div style="left:1376.0px;top:1309.0px;width:80.0px;text-align:center;height:24px;line-height:24px;font-family:'Liberation Sans', sans-serif;font-size:17.5px;font-weight:normal;color:#333;white-space:nowrap;letter-spacing:-0.2px;">199</div><div style="left:1611.0px;top:1309.0px;width:80.0px;text-align:center;height:24px;line-height:24px;font-family:'Liberation Sans', sans-serif;font-size:17.5px;font-weight:normal;color:#333;white-space:nowrap;letter-spacing:-0.2px;">399</div><div style="left:1846.0px;top:1309.0px;width:80.0px;text-align:center;height:24px;line-height:24px;font-family:'Liberation Sans', sans-serif;font-size:17.5px;font-weight:normal;color:#333;white-space:nowrap;letter-spacing:-0.2px;">599</div><svg style="left:0px;top:0px;" width="2151" height="1365" viewBox="0 0 2151 1365"><line x1="1477" y1="180" x2="1582" y2="950" stroke="#f08030" stroke-width="2.5"/><path d="M1575.5 943 L1583 956 L1587 942 Z" fill="#f08030"/></svg></body></html>
